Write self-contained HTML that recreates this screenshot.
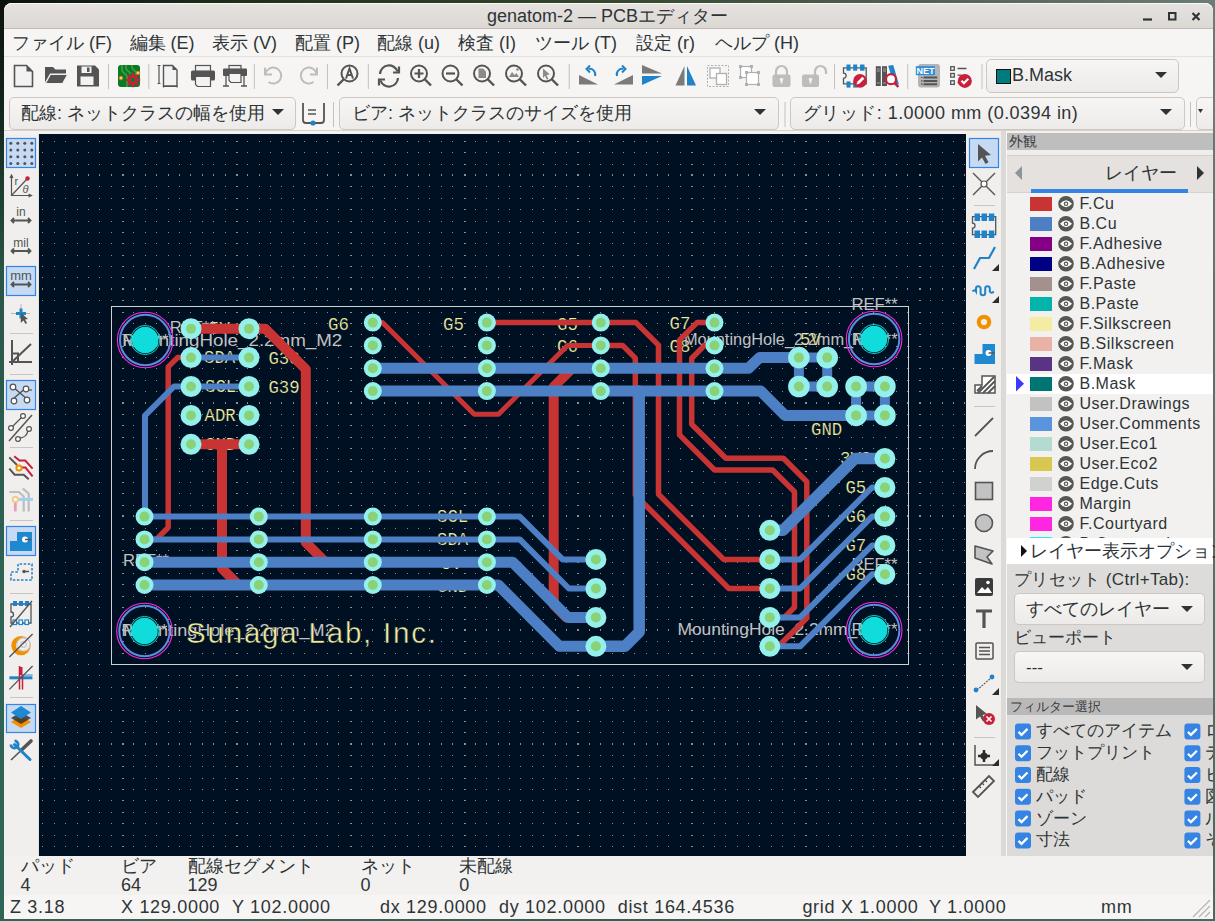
<!DOCTYPE html><html><head><meta charset="utf-8"><style>
html,body{margin:0;padding:0;width:1215px;height:921px;overflow:hidden;background:#1b2a24;}
.t{position:absolute;white-space:nowrap;line-height:1;font-family:'Liberation Sans',sans-serif;}
.r{position:absolute;}
svg.a{position:absolute;left:0;top:0;overflow:visible;}
.cb{position:absolute;border:1px solid #cdc7c2;border-radius:5px;background:linear-gradient(#f7f6f5,#edebe9);box-sizing:border-box;}
</style></head><body>
<div class="r" style="left:0;top:0;width:1215px;height:921px;background:#2e6254;"></div>
<div class="r" style="left:0;top:0;width:1215px;height:6px;background:linear-gradient(90deg,#0c140e 0%,#1c301c 20%,#34482e 50%,#55665a 80%,#6a7d76 100%);"></div>
<div class="r" style="left:0;top:0;width:6px;height:921px;background:linear-gradient(180deg,#0b110c 0%,#13261c 12%,#2a5648 30%,#2e6254 60%,#2f6557 100%);"></div>
<div class="r" style="left:1209px;top:0;width:6px;height:921px;background:linear-gradient(180deg,#6a7d76 0%,#55756c 40%,#3f6e64 100%);"></div>
<div class="r" style="left:0;top:915px;width:1215px;height:6px;background:linear-gradient(90deg,#2f6557 0%,#2e6254 50%,#3f6e64 100%);"></div>
<div class="r" style="left:4px;top:3px;width:1209px;height:916px;background:#f6f5f4;border-radius:8px 8px 0 0;"></div>
<div class="r" style="left:4px;top:3px;width:1209px;height:26px;background:linear-gradient(#e5e2df,#dcd8d4);border-radius:8px 8px 0 0;box-shadow:inset 0 1px 0 #faf9f8;"></div>
<div class="r" style="left:4px;top:28px;width:1209px;height:1px;background:#c2bab2;"></div>
<div class="t" style="left:487px;top:7px;font-size:18px;color:#2e3436;">genatom-2 — PCBエディター</div>
<svg class="a" width="1215" height="40"><g stroke="#2e3436" stroke-width="2.2" fill="none"><path d="M1143 19.5h9"/><rect x="1169" y="13" width="6.5" height="6.5" stroke-width="2"/><path d="M1192.5 13l7 7M1199.5 13l-7 7"/></g></svg>
<div class="r" style="left:4px;top:29px;width:1209px;height:27px;background:#f6f5f4;"></div>
<div class="r" style="left:4px;top:56px;width:1209px;height:1px;background:#e3e0dd;"></div>
<div class="t" style="left:12px;top:34px;font-size:18px;color:#2e3436;">ファイル (F)</div>
<div class="t" style="left:129.5px;top:34px;font-size:18px;color:#2e3436;">編集 (E)</div>
<div class="t" style="left:212px;top:34px;font-size:18px;color:#2e3436;">表示 (V)</div>
<div class="t" style="left:295px;top:34px;font-size:18px;color:#2e3436;">配置 (P)</div>
<div class="t" style="left:377px;top:34px;font-size:18px;color:#2e3436;">配線 (u)</div>
<div class="t" style="left:458px;top:34px;font-size:18px;color:#2e3436;">検査 (I)</div>
<div class="t" style="left:535px;top:34px;font-size:18px;color:#2e3436;">ツール (T)</div>
<div class="t" style="left:636px;top:34px;font-size:18px;color:#2e3436;">設定 (r)</div>
<div class="t" style="left:715px;top:34px;font-size:18px;color:#2e3436;">ヘルプ (H)</div>
<div class="r" style="left:4px;top:130px;width:1209px;height:1px;background:#d9d1c9;"></div>
<svg class="a" width="1215" height="140"><rect x="108.0" y="64" width="1" height="25" fill="#c4c0bc"/><rect x="148.3" y="64" width="1" height="25" fill="#c4c0bc"/><rect x="253.8" y="64" width="1" height="25" fill="#c4c0bc"/><rect x="326.9" y="64" width="1" height="25" fill="#c4c0bc"/><rect x="367.8" y="64" width="1" height="25" fill="#c4c0bc"/><rect x="568.7" y="64" width="1" height="25" fill="#c4c0bc"/><rect x="834.0" y="64" width="1" height="25" fill="#c4c0bc"/><rect x="907.2" y="64" width="1" height="25" fill="#c4c0bc"/><rect x="981.5" y="64" width="1" height="25" fill="#c4c0bc"/><g transform="translate(13,65)"><path d="M1.5 0.5h12l6 6v15h-18z" fill="#f2f2f2" stroke="#545454" stroke-width="1.6"/><path d="M13.5 0.5v6h6z" fill="#545454"/></g><g transform="translate(45,65)"><path d="M0 2h8l2.5 2.5h10.5v4h-16l-5 9z" fill="#545454"/><path d="M5.5 9.5h17l-5 9h-17z" fill="#545454" stroke="#f2f2f2" stroke-width="1"/></g><g transform="translate(77,65)"><path d="M0 0.5h18l4 4v17h-22z" fill="#545454"/><rect x="4.5" y="1.5" width="10" height="6.5" fill="#f2f2f2"/><rect x="10" y="2.5" width="2.5" height="4.5" fill="#545454"/><rect x="3.5" y="11.5" width="13" height="8.5" fill="#f2f2f2"/></g><g transform="translate(118,65)"><rect x="0" y="0" width="22" height="22" rx="3" fill="#0c7a24"/><path d="M4 0v6l5 5v11M8 0v4l5 5M14 0v3l4 4v3" stroke="#3e9e4a" stroke-width="1.6" fill="none"/><circle cx="3" cy="13" r="1.8" fill="#f6c98a" stroke="#e07b00" stroke-width="0.8"/><circle cx="20" cy="8" r="1.8" fill="#f6c98a" stroke="#e07b00" stroke-width="0.8"/><g transform="translate(15,15)"><circle r="4.8" fill="#c8203a"/><path d="M0-7.2v3M0 7.2v-3M-7.2 0h3M7.2 0h-3M-5 -5l2 2M5 5l-2-2M5 -5l-2 2M-5 5l2-2" stroke="#c8203a" stroke-width="2.4"/><circle r="2" fill="#0c7a24"/></g></g><g transform="translate(157.5,65)"><path d="M6 0.5h9l4.5 4.5v16h-13.5z" fill="#f2f2f2" stroke="#545454" stroke-width="1.4"/><path d="M15 0.5v4.5h4.5z" fill="#545454"/><path d="M1.5 0.5v18M0 0.5h3M0 18.5h3M6 21.5h13.5M6 20.5v2M19.5 20.5v2" stroke="#545454" stroke-width="1.2"/></g><g transform="translate(191,65)"><rect x="4.5" y="0.5" width="15" height="6" fill="#f2f2f2" stroke="#545454" stroke-width="1.2"/><rect x="0" y="5.5" width="24" height="10" rx="1.5" fill="#545454"/><path d="M4.5 11.5h15v10h-13l-2-2z" fill="#f2f2f2" stroke="#545454" stroke-width="1.2"/></g><g transform="translate(223,65)"><rect x="6" y="0.5" width="12" height="4" fill="#f2f2f2" stroke="#545454" stroke-width="1.2"/><rect x="0" y="3.5" width="24" height="7.5" rx="1" fill="#545454"/><path d="M6 8.5h12v9h-10l-2-2z" fill="#f2f2f2" stroke="#545454" stroke-width="1.2"/><path d="M3 10v11M21 10v11M0 21h6M18 21h6" stroke="#545454" stroke-width="1.3"/></g><g transform="translate(263.5,65)"><path d="M2 8.5A8 8 0 1 1 5 17" fill="none" stroke="#bdbdbd" stroke-width="2"/><path d="M1.5 2.5v7h7" fill="none" stroke="#bdbdbd" stroke-width="2"/></g><g transform="translate(296.5,65)"><path d="M20 8.5A8 8 0 1 0 17 17" fill="none" stroke="#bdbdbd" stroke-width="2"/><path d="M20.5 2.5v7h-7" fill="none" stroke="#bdbdbd" stroke-width="2"/></g><g transform="translate(337,65)"><circle cx="12.5" cy="8.5" r="8" fill="none" stroke="#545454" stroke-width="2"/><path d="M7 14l-6.5 6.5" stroke="#545454" stroke-width="2.4"/><path d="M9 13.5l3.5-10 3.5 10M10.2 10h4.6" stroke="#545454" stroke-width="2" fill="none"/></g><g transform="translate(378,65)"><path d="M2 9A9 9 0 0 1 19.5 6.5" fill="none" stroke="#545454" stroke-width="2.2"/><path d="M21 1.5v6h-6" fill="none" stroke="#545454" stroke-width="2.2"/><path d="M20 13A9 9 0 0 1 2.5 15.5" fill="none" stroke="#545454" stroke-width="2.2"/><path d="M1 20.5v-6h6" fill="none" stroke="#545454" stroke-width="2.2"/></g><g transform="translate(410,65)"><circle cx="9" cy="8.5" r="8" fill="none" stroke="#545454" stroke-width="2"/><path d="M14.5 14l6.5 6.5" stroke="#545454" stroke-width="2.4"/><path d="M9 4v9M4.5 8.5h9" stroke="#545454" stroke-width="2.2"/></g><g transform="translate(441.5,65)"><circle cx="9" cy="8.5" r="8" fill="none" stroke="#545454" stroke-width="2"/><path d="M14.5 14l6.5 6.5" stroke="#545454" stroke-width="2.4"/><path d="M4.5 8.5h9" stroke="#545454" stroke-width="2.2"/></g><g transform="translate(473,65)"><circle cx="9" cy="8.5" r="8" fill="none" stroke="#545454" stroke-width="2"/><path d="M14.5 14l6.5 6.5" stroke="#545454" stroke-width="2.4"/><path d="M5.5 3.5h4.5l3 3v6.5h-7.5z" fill="#8a8a8a"/></g><g transform="translate(505,65)"><circle cx="9" cy="8.5" r="8" fill="none" stroke="#545454" stroke-width="2"/><path d="M14.5 14l6.5 6.5" stroke="#545454" stroke-width="2.4"/><path d="M4 12l3-5 2.5 3 2-2 2.5 4z" fill="#8a8a8a"/><circle cx="12.5" cy="4.5" r="1.3" fill="#8a8a8a"/></g><g transform="translate(537,65)"><circle cx="9" cy="8.5" r="8" fill="none" stroke="#545454" stroke-width="2"/><path d="M14.5 14l6.5 6.5" stroke="#545454" stroke-width="2.4"/><path d="M6 3.5l7 6-3.5 0.5 2 4-1.6 0.8-2-4-2 2.5z" fill="#8a8a8a"/></g><g transform="translate(579,65)"><path d="M0 10l19 9.5h-19z" fill="#7a7a7a"/><path d="M16 11A5.5 5.5 0 0 0 9.5 4" fill="none" stroke="#1f83c9" stroke-width="2"/><path d="M11 0.5l-3.5 3.5 3.5 3.5" fill="none" stroke="#1f83c9" stroke-width="2"/></g><g transform="translate(611,65)"><path d="M22 10l-19 9.5h19z" fill="#7a7a7a"/><path d="M6 11A5.5 5.5 0 0 1 12.5 4" fill="none" stroke="#1f83c9" stroke-width="2"/><path d="M11 0.5l3.5 3.5-3.5 3.5" fill="none" stroke="#1f83c9" stroke-width="2"/></g><g transform="translate(642,65)"><path d="M0 0l20 8.5h-20z" fill="#7a7a7a"/><path d="M0 11h20l-20 9z" fill="#1f83c9"/></g><g transform="translate(675,65)"><path d="M9.5 1v19.5h-9z" fill="#7a7a7a"/><path d="M12 1v19.5h9z" fill="#1f83c9"/></g><g transform="translate(707,65)"><rect x="0.5" y="0.5" width="21" height="21" fill="none" stroke="#b0b0b0" stroke-width="1" stroke-dasharray="2 1.5"/><rect x="3" y="3" width="10" height="10" fill="#fff" stroke="#b0b0b0" stroke-width="1.3"/><rect x="9.5" y="8.5" width="10" height="11" fill="#fff" stroke="#b0b0b0" stroke-width="1.3"/></g><g transform="translate(739,65)"><rect x="1.5" y="1.5" width="11" height="11" fill="#fff" stroke="#b0b0b0" stroke-width="1.2"/><rect x="7.5" y="7.5" width="12" height="12" fill="#fff" stroke="#b0b0b0" stroke-width="1.2"/><g fill="#b0b0b0"><rect x="0" y="0" width="3" height="3"/><rect x="11" y="0" width="3" height="3"/><rect x="0" y="11" width="3" height="3"/><rect x="6" y="6" width="3" height="3"/><rect x="18" y="6" width="3" height="3"/><rect x="6" y="18" width="3" height="3"/><rect x="18" y="18" width="3" height="3"/></g></g><g transform="translate(771,65)"><path d="M5 10V6.5a5.5 5.5 0 0 1 11 0V10" fill="none" stroke="#bdbdbd" stroke-width="2.2"/><rect x="1.5" y="9.5" width="18" height="12.5" rx="2" fill="#bdbdbd"/><circle cx="10.5" cy="14.5" r="1.8" fill="#f2f2f2"/><rect x="9.6" y="15" width="1.8" height="3.5" fill="#f2f2f2"/></g><g transform="translate(802,65)"><path d="M13 10V6.5a5.5 5.5 0 0 1 11 0V9" fill="none" stroke="#bdbdbd" stroke-width="2.2"/><rect x="0" y="9.5" width="17" height="12.5" rx="2" fill="#bdbdbd"/><circle cx="8.5" cy="14.5" r="1.8" fill="#f2f2f2"/><rect x="7.6" y="15" width="1.8" height="3.5" fill="#f2f2f2"/></g><g transform="translate(844,65)"><path d="M-0.5 2.8h22.7v16h-22.7v-5.5a2.6 2.6 0 0 0 0-5.2z" fill="none" stroke="#545454" stroke-width="1.3"/><g fill="#1f83c9"><rect x="2.5" y="-0.5" width="4" height="6.2"/><rect x="9.2" y="-0.5" width="4" height="6.2"/><rect x="16" y="-0.5" width="4.5" height="6.2"/><rect x="2.5" y="16.4" width="4" height="6.2"/><rect x="9.2" y="16.4" width="4.5" height="6.2"/></g><circle cx="16" cy="15.9" r="6.8" fill="#c8203a"/><path d="M12.5 19.5l.8-2.8 5-5 2 2-5 5z" fill="#fff"/></g><g transform="translate(876,65)"><rect x="-0.2" y="1.2" width="5" height="19.8" fill="#545454"/><rect x="6" y="1.2" width="5" height="19.8" fill="#545454"/><path d="M0.8 4h3M0.8 6h3M7 4h3M7 6h3M0.8 18h3M7 18h3" stroke="#bbb" stroke-width="0.8"/><path d="M12.2 0.8l5-0.9 5.7 19.3-4.6 1z" fill="#1f83c9"/><circle cx="15" cy="14.2" r="5" fill="#fff" stroke="#c8203a" stroke-width="2.2"/><path d="M18.8 18l3.5 4" stroke="#c8203a" stroke-width="2.6"/></g><g transform="translate(917,65)"><rect x="1" y="-1" width="22" height="23.6" rx="3" fill="#b4b4b4"/><rect x="-1.2" y="1.2" width="19.2" height="9" fill="#2f8fdb"/><text x="8.4" y="9.2" font-family="Liberation Sans" font-weight="bold" font-size="9" fill="#fff" text-anchor="middle">NET</text><path d="M6.5 12.5h13.7M6.5 15.9h13.7M6.5 19.2h13.7" stroke="#545454" stroke-width="2"/><path d="M4 12.5h1.5M4 15.9h1.5M4 19.2h1.5" stroke="#545454" stroke-width="1.2"/></g><g transform="translate(950,65)"><g fill="none" stroke="#545454" stroke-width="1.3"><rect x="0.7" y="1.7" width="3.6" height="3.6"/><rect x="0.7" y="8.5" width="3.6" height="3.6"/><rect x="0.7" y="15.8" width="3.6" height="3.6"/><path d="M7.5 3.5h9M7.5 10.2h4M7.5 17.5h2"/></g><circle cx="14.8" cy="15.9" r="7" fill="#c8203a"/><path d="M11.5 15.8l2.4 2.4 4.4-4.4" stroke="#fff" stroke-width="2.2" fill="none"/></g></svg>
<div class="cb" style="left:986px;top:59px;width:193px;height:34px;"></div>
<div class="r" style="left:996px;top:69px;width:15px;height:15px;background:#007c7c;border:1.5px solid #111;box-sizing:border-box;"></div>
<div class="t" style="left:1012px;top:66px;font-size:18px;color:#2e3436;">B.Mask</div>
<svg class="a" width="1215" height="140"><path d="M1155 72h12l-6 6z" fill="#2e3436"/></svg>
<div class="cb" style="left:9px;top:97px;width:287px;height:33px;"></div>
<div class="t" style="left:21px;top:104px;font-size:18px;color:#2e3436;">配線: ネットクラスの幅を使用</div>
<div class="cb" style="left:339px;top:97px;width:440px;height:33px;"></div>
<div class="t" style="left:352px;top:104px;font-size:18px;color:#2e3436;">ビア: ネットクラスのサイズを使用</div>
<div class="cb" style="left:790px;top:97px;width:395px;height:33px;"></div>
<div class="t" style="left:803px;top:104px;font-size:18px;color:#2e3436;letter-spacing:0.45px;">グリッド: 1.0000 mm (0.0394 in)</div>
<div class="cb" style="left:1196px;top:97px;width:30px;height:33px;"></div>
<div class="r" style="left:1213px;top:90px;width:2px;height:45px;background:#6a7c74;"></div>
<svg class="a" width="1215" height="140"><g fill="#2e3436"><path d="M272 109h12l-6 6z"/><path d="M754 109h12l-6 6z"/><path d="M1160 109h12l-6 6z"/><path d="M1198 109h5l-2.5 4z"/></g><rect x="333" y="102" width="1" height="25" fill="#c4c0bc"/><rect x="784.5" y="102" width="1" height="25" fill="#c4c0bc"/><rect x="1190" y="102" width="1" height="25" fill="#c4c0bc"/><path d="M303 103v17a3 3 0 0 0 3 3h15a3 3 0 0 0 3-3v-17" fill="none" stroke="#545454" stroke-width="1.8"/><path d="M308 110h8M308 114h8" stroke="#545454" stroke-width="1.3"/><circle cx="313" cy="123" r="2.6" fill="#1f83c9"/></svg>
<svg class="a" width="1215" height="921"><defs><clipPath id="cc"><rect x="39" y="134" width="927" height="722"/></clipPath></defs><g clip-path="url(#cc)"><rect x="39" y="134" width="927" height="722" fill="#001023"/><path d="M42 141h1v1h-1zM54 141h1v1h-1zM65 141h1v1h-1zM77 141h1v1h-1zM88 141h1v1h-1zM99 141h1v1h-1zM111 141h1v1h-1zM122 141h2v1h-2zM133 141h1v1h-1zM145 141h1v1h-1zM156 141h1v1h-1zM168 141h1v1h-1zM179 141h1v1h-1zM190 141h1v1h-1zM202 141h1v1h-1zM213 141h1v1h-1zM225 141h1v1h-1zM236 141h2v1h-2zM247 141h1v1h-1zM259 141h1v1h-1zM270 141h1v1h-1zM281 141h1v1h-1zM293 141h1v1h-1zM304 141h1v1h-1zM316 141h1v1h-1zM327 141h1v1h-1zM338 141h1v1h-1zM350 141h2v1h-2zM361 141h1v1h-1zM372 141h1v1h-1zM384 141h1v1h-1zM395 141h1v1h-1zM407 141h1v1h-1zM418 141h1v1h-1zM429 141h1v1h-1zM441 141h1v1h-1zM452 141h1v1h-1zM464 141h2v1h-2zM475 141h1v1h-1zM486 141h1v1h-1zM498 141h1v1h-1zM509 141h1v1h-1zM520 141h1v1h-1zM532 141h1v1h-1zM543 141h1v1h-1zM555 141h1v1h-1zM566 141h1v1h-1zM577 141h2v1h-2zM589 141h1v1h-1zM600 141h1v1h-1zM612 141h1v1h-1zM623 141h1v1h-1zM634 141h1v1h-1zM646 141h1v1h-1zM657 141h1v1h-1zM668 141h1v1h-1zM680 141h1v1h-1zM691 141h2v1h-2zM703 141h1v1h-1zM714 141h1v1h-1zM725 141h1v1h-1zM737 141h1v1h-1zM748 141h1v1h-1zM759 141h1v1h-1zM771 141h1v1h-1zM782 141h1v1h-1zM794 141h1v1h-1zM805 141h2v1h-2zM816 141h1v1h-1zM828 141h1v1h-1zM839 141h1v1h-1zM851 141h1v1h-1zM862 141h1v1h-1zM873 141h1v1h-1zM885 141h1v1h-1zM896 141h1v1h-1zM907 141h1v1h-1zM919 141h2v1h-2zM930 141h1v1h-1zM942 141h1v1h-1zM953 141h1v1h-1zM964 141h1v1h-1zM42 152h1v1h-1zM54 152h1v1h-1zM65 152h1v1h-1zM77 152h1v1h-1zM88 152h1v1h-1zM99 152h1v1h-1zM111 152h1v1h-1zM122 152h2v1h-2zM133 152h1v1h-1zM145 152h1v1h-1zM156 152h1v1h-1zM168 152h1v1h-1zM179 152h1v1h-1zM190 152h1v1h-1zM202 152h1v1h-1zM213 152h1v1h-1zM225 152h1v1h-1zM236 152h2v1h-2zM247 152h1v1h-1zM259 152h1v1h-1zM270 152h1v1h-1zM281 152h1v1h-1zM293 152h1v1h-1zM304 152h1v1h-1zM316 152h1v1h-1zM327 152h1v1h-1zM338 152h1v1h-1zM350 152h2v1h-2zM361 152h1v1h-1zM372 152h1v1h-1zM384 152h1v1h-1zM395 152h1v1h-1zM407 152h1v1h-1zM418 152h1v1h-1zM429 152h1v1h-1zM441 152h1v1h-1zM452 152h1v1h-1zM464 152h2v1h-2zM475 152h1v1h-1zM486 152h1v1h-1zM498 152h1v1h-1zM509 152h1v1h-1zM520 152h1v1h-1zM532 152h1v1h-1zM543 152h1v1h-1zM555 152h1v1h-1zM566 152h1v1h-1zM577 152h2v1h-2zM589 152h1v1h-1zM600 152h1v1h-1zM612 152h1v1h-1zM623 152h1v1h-1zM634 152h1v1h-1zM646 152h1v1h-1zM657 152h1v1h-1zM668 152h1v1h-1zM680 152h1v1h-1zM691 152h2v1h-2zM703 152h1v1h-1zM714 152h1v1h-1zM725 152h1v1h-1zM737 152h1v1h-1zM748 152h1v1h-1zM759 152h1v1h-1zM771 152h1v1h-1zM782 152h1v1h-1zM794 152h1v1h-1zM805 152h2v1h-2zM816 152h1v1h-1zM828 152h1v1h-1zM839 152h1v1h-1zM851 152h1v1h-1zM862 152h1v1h-1zM873 152h1v1h-1zM885 152h1v1h-1zM896 152h1v1h-1zM907 152h1v1h-1zM919 152h2v1h-2zM930 152h1v1h-1zM942 152h1v1h-1zM953 152h1v1h-1zM964 152h1v1h-1zM42 164h1v1h-1zM54 164h1v1h-1zM65 164h1v1h-1zM77 164h1v1h-1zM88 164h1v1h-1zM99 164h1v1h-1zM111 164h1v1h-1zM122 164h2v1h-2zM133 164h1v1h-1zM145 164h1v1h-1zM156 164h1v1h-1zM168 164h1v1h-1zM179 164h1v1h-1zM190 164h1v1h-1zM202 164h1v1h-1zM213 164h1v1h-1zM225 164h1v1h-1zM236 164h2v1h-2zM247 164h1v1h-1zM259 164h1v1h-1zM270 164h1v1h-1zM281 164h1v1h-1zM293 164h1v1h-1zM304 164h1v1h-1zM316 164h1v1h-1zM327 164h1v1h-1zM338 164h1v1h-1zM350 164h2v1h-2zM361 164h1v1h-1zM372 164h1v1h-1zM384 164h1v1h-1zM395 164h1v1h-1zM407 164h1v1h-1zM418 164h1v1h-1zM429 164h1v1h-1zM441 164h1v1h-1zM452 164h1v1h-1zM464 164h2v1h-2zM475 164h1v1h-1zM486 164h1v1h-1zM498 164h1v1h-1zM509 164h1v1h-1zM520 164h1v1h-1zM532 164h1v1h-1zM543 164h1v1h-1zM555 164h1v1h-1zM566 164h1v1h-1zM577 164h2v1h-2zM589 164h1v1h-1zM600 164h1v1h-1zM612 164h1v1h-1zM623 164h1v1h-1zM634 164h1v1h-1zM646 164h1v1h-1zM657 164h1v1h-1zM668 164h1v1h-1zM680 164h1v1h-1zM691 164h2v1h-2zM703 164h1v1h-1zM714 164h1v1h-1zM725 164h1v1h-1zM737 164h1v1h-1zM748 164h1v1h-1zM759 164h1v1h-1zM771 164h1v1h-1zM782 164h1v1h-1zM794 164h1v1h-1zM805 164h2v1h-2zM816 164h1v1h-1zM828 164h1v1h-1zM839 164h1v1h-1zM851 164h1v1h-1zM862 164h1v1h-1zM873 164h1v1h-1zM885 164h1v1h-1zM896 164h1v1h-1zM907 164h1v1h-1zM919 164h2v1h-2zM930 164h1v1h-1zM942 164h1v1h-1zM953 164h1v1h-1zM964 164h1v1h-1zM42 174h1v2h-1zM54 174h1v2h-1zM65 174h1v2h-1zM77 174h1v2h-1zM88 174h1v2h-1zM99 174h1v2h-1zM111 174h1v2h-1zM122 174h2v2h-2zM133 174h1v2h-1zM145 174h1v2h-1zM156 174h1v2h-1zM168 174h1v2h-1zM179 174h1v2h-1zM190 174h1v2h-1zM202 174h1v2h-1zM213 174h1v2h-1zM225 174h1v2h-1zM236 174h2v2h-2zM247 174h1v2h-1zM259 174h1v2h-1zM270 174h1v2h-1zM281 174h1v2h-1zM293 174h1v2h-1zM304 174h1v2h-1zM316 174h1v2h-1zM327 174h1v2h-1zM338 174h1v2h-1zM350 174h2v2h-2zM361 174h1v2h-1zM372 174h1v2h-1zM384 174h1v2h-1zM395 174h1v2h-1zM407 174h1v2h-1zM418 174h1v2h-1zM429 174h1v2h-1zM441 174h1v2h-1zM452 174h1v2h-1zM464 174h2v2h-2zM475 174h1v2h-1zM486 174h1v2h-1zM498 174h1v2h-1zM509 174h1v2h-1zM520 174h1v2h-1zM532 174h1v2h-1zM543 174h1v2h-1zM555 174h1v2h-1zM566 174h1v2h-1zM577 174h2v2h-2zM589 174h1v2h-1zM600 174h1v2h-1zM612 174h1v2h-1zM623 174h1v2h-1zM634 174h1v2h-1zM646 174h1v2h-1zM657 174h1v2h-1zM668 174h1v2h-1zM680 174h1v2h-1zM691 174h2v2h-2zM703 174h1v2h-1zM714 174h1v2h-1zM725 174h1v2h-1zM737 174h1v2h-1zM748 174h1v2h-1zM759 174h1v2h-1zM771 174h1v2h-1zM782 174h1v2h-1zM794 174h1v2h-1zM805 174h2v2h-2zM816 174h1v2h-1zM828 174h1v2h-1zM839 174h1v2h-1zM851 174h1v2h-1zM862 174h1v2h-1zM873 174h1v2h-1zM885 174h1v2h-1zM896 174h1v2h-1zM907 174h1v2h-1zM919 174h2v2h-2zM930 174h1v2h-1zM942 174h1v2h-1zM953 174h1v2h-1zM964 174h1v2h-1zM42 186h1v1h-1zM54 186h1v1h-1zM65 186h1v1h-1zM77 186h1v1h-1zM88 186h1v1h-1zM99 186h1v1h-1zM111 186h1v1h-1zM122 186h2v1h-2zM133 186h1v1h-1zM145 186h1v1h-1zM156 186h1v1h-1zM168 186h1v1h-1zM179 186h1v1h-1zM190 186h1v1h-1zM202 186h1v1h-1zM213 186h1v1h-1zM225 186h1v1h-1zM236 186h2v1h-2zM247 186h1v1h-1zM259 186h1v1h-1zM270 186h1v1h-1zM281 186h1v1h-1zM293 186h1v1h-1zM304 186h1v1h-1zM316 186h1v1h-1zM327 186h1v1h-1zM338 186h1v1h-1zM350 186h2v1h-2zM361 186h1v1h-1zM372 186h1v1h-1zM384 186h1v1h-1zM395 186h1v1h-1zM407 186h1v1h-1zM418 186h1v1h-1zM429 186h1v1h-1zM441 186h1v1h-1zM452 186h1v1h-1zM464 186h2v1h-2zM475 186h1v1h-1zM486 186h1v1h-1zM498 186h1v1h-1zM509 186h1v1h-1zM520 186h1v1h-1zM532 186h1v1h-1zM543 186h1v1h-1zM555 186h1v1h-1zM566 186h1v1h-1zM577 186h2v1h-2zM589 186h1v1h-1zM600 186h1v1h-1zM612 186h1v1h-1zM623 186h1v1h-1zM634 186h1v1h-1zM646 186h1v1h-1zM657 186h1v1h-1zM668 186h1v1h-1zM680 186h1v1h-1zM691 186h2v1h-2zM703 186h1v1h-1zM714 186h1v1h-1zM725 186h1v1h-1zM737 186h1v1h-1zM748 186h1v1h-1zM759 186h1v1h-1zM771 186h1v1h-1zM782 186h1v1h-1zM794 186h1v1h-1zM805 186h2v1h-2zM816 186h1v1h-1zM828 186h1v1h-1zM839 186h1v1h-1zM851 186h1v1h-1zM862 186h1v1h-1zM873 186h1v1h-1zM885 186h1v1h-1zM896 186h1v1h-1zM907 186h1v1h-1zM919 186h2v1h-2zM930 186h1v1h-1zM942 186h1v1h-1zM953 186h1v1h-1zM964 186h1v1h-1zM42 198h1v1h-1zM54 198h1v1h-1zM65 198h1v1h-1zM77 198h1v1h-1zM88 198h1v1h-1zM99 198h1v1h-1zM111 198h1v1h-1zM122 198h2v1h-2zM133 198h1v1h-1zM145 198h1v1h-1zM156 198h1v1h-1zM168 198h1v1h-1zM179 198h1v1h-1zM190 198h1v1h-1zM202 198h1v1h-1zM213 198h1v1h-1zM225 198h1v1h-1zM236 198h2v1h-2zM247 198h1v1h-1zM259 198h1v1h-1zM270 198h1v1h-1zM281 198h1v1h-1zM293 198h1v1h-1zM304 198h1v1h-1zM316 198h1v1h-1zM327 198h1v1h-1zM338 198h1v1h-1zM350 198h2v1h-2zM361 198h1v1h-1zM372 198h1v1h-1zM384 198h1v1h-1zM395 198h1v1h-1zM407 198h1v1h-1zM418 198h1v1h-1zM429 198h1v1h-1zM441 198h1v1h-1zM452 198h1v1h-1zM464 198h2v1h-2zM475 198h1v1h-1zM486 198h1v1h-1zM498 198h1v1h-1zM509 198h1v1h-1zM520 198h1v1h-1zM532 198h1v1h-1zM543 198h1v1h-1zM555 198h1v1h-1zM566 198h1v1h-1zM577 198h2v1h-2zM589 198h1v1h-1zM600 198h1v1h-1zM612 198h1v1h-1zM623 198h1v1h-1zM634 198h1v1h-1zM646 198h1v1h-1zM657 198h1v1h-1zM668 198h1v1h-1zM680 198h1v1h-1zM691 198h2v1h-2zM703 198h1v1h-1zM714 198h1v1h-1zM725 198h1v1h-1zM737 198h1v1h-1zM748 198h1v1h-1zM759 198h1v1h-1zM771 198h1v1h-1zM782 198h1v1h-1zM794 198h1v1h-1zM805 198h2v1h-2zM816 198h1v1h-1zM828 198h1v1h-1zM839 198h1v1h-1zM851 198h1v1h-1zM862 198h1v1h-1zM873 198h1v1h-1zM885 198h1v1h-1zM896 198h1v1h-1zM907 198h1v1h-1zM919 198h2v1h-2zM930 198h1v1h-1zM942 198h1v1h-1zM953 198h1v1h-1zM964 198h1v1h-1zM42 209h1v1h-1zM54 209h1v1h-1zM65 209h1v1h-1zM77 209h1v1h-1zM88 209h1v1h-1zM99 209h1v1h-1zM111 209h1v1h-1zM122 209h2v1h-2zM133 209h1v1h-1zM145 209h1v1h-1zM156 209h1v1h-1zM168 209h1v1h-1zM179 209h1v1h-1zM190 209h1v1h-1zM202 209h1v1h-1zM213 209h1v1h-1zM225 209h1v1h-1zM236 209h2v1h-2zM247 209h1v1h-1zM259 209h1v1h-1zM270 209h1v1h-1zM281 209h1v1h-1zM293 209h1v1h-1zM304 209h1v1h-1zM316 209h1v1h-1zM327 209h1v1h-1zM338 209h1v1h-1zM350 209h2v1h-2zM361 209h1v1h-1zM372 209h1v1h-1zM384 209h1v1h-1zM395 209h1v1h-1zM407 209h1v1h-1zM418 209h1v1h-1zM429 209h1v1h-1zM441 209h1v1h-1zM452 209h1v1h-1zM464 209h2v1h-2zM475 209h1v1h-1zM486 209h1v1h-1zM498 209h1v1h-1zM509 209h1v1h-1zM520 209h1v1h-1zM532 209h1v1h-1zM543 209h1v1h-1zM555 209h1v1h-1zM566 209h1v1h-1zM577 209h2v1h-2zM589 209h1v1h-1zM600 209h1v1h-1zM612 209h1v1h-1zM623 209h1v1h-1zM634 209h1v1h-1zM646 209h1v1h-1zM657 209h1v1h-1zM668 209h1v1h-1zM680 209h1v1h-1zM691 209h2v1h-2zM703 209h1v1h-1zM714 209h1v1h-1zM725 209h1v1h-1zM737 209h1v1h-1zM748 209h1v1h-1zM759 209h1v1h-1zM771 209h1v1h-1zM782 209h1v1h-1zM794 209h1v1h-1zM805 209h2v1h-2zM816 209h1v1h-1zM828 209h1v1h-1zM839 209h1v1h-1zM851 209h1v1h-1zM862 209h1v1h-1zM873 209h1v1h-1zM885 209h1v1h-1zM896 209h1v1h-1zM907 209h1v1h-1zM919 209h2v1h-2zM930 209h1v1h-1zM942 209h1v1h-1zM953 209h1v1h-1zM964 209h1v1h-1zM42 221h1v1h-1zM54 221h1v1h-1zM65 221h1v1h-1zM77 221h1v1h-1zM88 221h1v1h-1zM99 221h1v1h-1zM111 221h1v1h-1zM122 221h2v1h-2zM133 221h1v1h-1zM145 221h1v1h-1zM156 221h1v1h-1zM168 221h1v1h-1zM179 221h1v1h-1zM190 221h1v1h-1zM202 221h1v1h-1zM213 221h1v1h-1zM225 221h1v1h-1zM236 221h2v1h-2zM247 221h1v1h-1zM259 221h1v1h-1zM270 221h1v1h-1zM281 221h1v1h-1zM293 221h1v1h-1zM304 221h1v1h-1zM316 221h1v1h-1zM327 221h1v1h-1zM338 221h1v1h-1zM350 221h2v1h-2zM361 221h1v1h-1zM372 221h1v1h-1zM384 221h1v1h-1zM395 221h1v1h-1zM407 221h1v1h-1zM418 221h1v1h-1zM429 221h1v1h-1zM441 221h1v1h-1zM452 221h1v1h-1zM464 221h2v1h-2zM475 221h1v1h-1zM486 221h1v1h-1zM498 221h1v1h-1zM509 221h1v1h-1zM520 221h1v1h-1zM532 221h1v1h-1zM543 221h1v1h-1zM555 221h1v1h-1zM566 221h1v1h-1zM577 221h2v1h-2zM589 221h1v1h-1zM600 221h1v1h-1zM612 221h1v1h-1zM623 221h1v1h-1zM634 221h1v1h-1zM646 221h1v1h-1zM657 221h1v1h-1zM668 221h1v1h-1zM680 221h1v1h-1zM691 221h2v1h-2zM703 221h1v1h-1zM714 221h1v1h-1zM725 221h1v1h-1zM737 221h1v1h-1zM748 221h1v1h-1zM759 221h1v1h-1zM771 221h1v1h-1zM782 221h1v1h-1zM794 221h1v1h-1zM805 221h2v1h-2zM816 221h1v1h-1zM828 221h1v1h-1zM839 221h1v1h-1zM851 221h1v1h-1zM862 221h1v1h-1zM873 221h1v1h-1zM885 221h1v1h-1zM896 221h1v1h-1zM907 221h1v1h-1zM919 221h2v1h-2zM930 221h1v1h-1zM942 221h1v1h-1zM953 221h1v1h-1zM964 221h1v1h-1zM42 232h1v1h-1zM54 232h1v1h-1zM65 232h1v1h-1zM77 232h1v1h-1zM88 232h1v1h-1zM99 232h1v1h-1zM111 232h1v1h-1zM122 232h2v1h-2zM133 232h1v1h-1zM145 232h1v1h-1zM156 232h1v1h-1zM168 232h1v1h-1zM179 232h1v1h-1zM190 232h1v1h-1zM202 232h1v1h-1zM213 232h1v1h-1zM225 232h1v1h-1zM236 232h2v1h-2zM247 232h1v1h-1zM259 232h1v1h-1zM270 232h1v1h-1zM281 232h1v1h-1zM293 232h1v1h-1zM304 232h1v1h-1zM316 232h1v1h-1zM327 232h1v1h-1zM338 232h1v1h-1zM350 232h2v1h-2zM361 232h1v1h-1zM372 232h1v1h-1zM384 232h1v1h-1zM395 232h1v1h-1zM407 232h1v1h-1zM418 232h1v1h-1zM429 232h1v1h-1zM441 232h1v1h-1zM452 232h1v1h-1zM464 232h2v1h-2zM475 232h1v1h-1zM486 232h1v1h-1zM498 232h1v1h-1zM509 232h1v1h-1zM520 232h1v1h-1zM532 232h1v1h-1zM543 232h1v1h-1zM555 232h1v1h-1zM566 232h1v1h-1zM577 232h2v1h-2zM589 232h1v1h-1zM600 232h1v1h-1zM612 232h1v1h-1zM623 232h1v1h-1zM634 232h1v1h-1zM646 232h1v1h-1zM657 232h1v1h-1zM668 232h1v1h-1zM680 232h1v1h-1zM691 232h2v1h-2zM703 232h1v1h-1zM714 232h1v1h-1zM725 232h1v1h-1zM737 232h1v1h-1zM748 232h1v1h-1zM759 232h1v1h-1zM771 232h1v1h-1zM782 232h1v1h-1zM794 232h1v1h-1zM805 232h2v1h-2zM816 232h1v1h-1zM828 232h1v1h-1zM839 232h1v1h-1zM851 232h1v1h-1zM862 232h1v1h-1zM873 232h1v1h-1zM885 232h1v1h-1zM896 232h1v1h-1zM907 232h1v1h-1zM919 232h2v1h-2zM930 232h1v1h-1zM942 232h1v1h-1zM953 232h1v1h-1zM964 232h1v1h-1zM42 243h1v1h-1zM54 243h1v1h-1zM65 243h1v1h-1zM77 243h1v1h-1zM88 243h1v1h-1zM99 243h1v1h-1zM111 243h1v1h-1zM122 243h2v1h-2zM133 243h1v1h-1zM145 243h1v1h-1zM156 243h1v1h-1zM168 243h1v1h-1zM179 243h1v1h-1zM190 243h1v1h-1zM202 243h1v1h-1zM213 243h1v1h-1zM225 243h1v1h-1zM236 243h2v1h-2zM247 243h1v1h-1zM259 243h1v1h-1zM270 243h1v1h-1zM281 243h1v1h-1zM293 243h1v1h-1zM304 243h1v1h-1zM316 243h1v1h-1zM327 243h1v1h-1zM338 243h1v1h-1zM350 243h2v1h-2zM361 243h1v1h-1zM372 243h1v1h-1zM384 243h1v1h-1zM395 243h1v1h-1zM407 243h1v1h-1zM418 243h1v1h-1zM429 243h1v1h-1zM441 243h1v1h-1zM452 243h1v1h-1zM464 243h2v1h-2zM475 243h1v1h-1zM486 243h1v1h-1zM498 243h1v1h-1zM509 243h1v1h-1zM520 243h1v1h-1zM532 243h1v1h-1zM543 243h1v1h-1zM555 243h1v1h-1zM566 243h1v1h-1zM577 243h2v1h-2zM589 243h1v1h-1zM600 243h1v1h-1zM612 243h1v1h-1zM623 243h1v1h-1zM634 243h1v1h-1zM646 243h1v1h-1zM657 243h1v1h-1zM668 243h1v1h-1zM680 243h1v1h-1zM691 243h2v1h-2zM703 243h1v1h-1zM714 243h1v1h-1zM725 243h1v1h-1zM737 243h1v1h-1zM748 243h1v1h-1zM759 243h1v1h-1zM771 243h1v1h-1zM782 243h1v1h-1zM794 243h1v1h-1zM805 243h2v1h-2zM816 243h1v1h-1zM828 243h1v1h-1zM839 243h1v1h-1zM851 243h1v1h-1zM862 243h1v1h-1zM873 243h1v1h-1zM885 243h1v1h-1zM896 243h1v1h-1zM907 243h1v1h-1zM919 243h2v1h-2zM930 243h1v1h-1zM942 243h1v1h-1zM953 243h1v1h-1zM964 243h1v1h-1zM42 255h1v1h-1zM54 255h1v1h-1zM65 255h1v1h-1zM77 255h1v1h-1zM88 255h1v1h-1zM99 255h1v1h-1zM111 255h1v1h-1zM122 255h2v1h-2zM133 255h1v1h-1zM145 255h1v1h-1zM156 255h1v1h-1zM168 255h1v1h-1zM179 255h1v1h-1zM190 255h1v1h-1zM202 255h1v1h-1zM213 255h1v1h-1zM225 255h1v1h-1zM236 255h2v1h-2zM247 255h1v1h-1zM259 255h1v1h-1zM270 255h1v1h-1zM281 255h1v1h-1zM293 255h1v1h-1zM304 255h1v1h-1zM316 255h1v1h-1zM327 255h1v1h-1zM338 255h1v1h-1zM350 255h2v1h-2zM361 255h1v1h-1zM372 255h1v1h-1zM384 255h1v1h-1zM395 255h1v1h-1zM407 255h1v1h-1zM418 255h1v1h-1zM429 255h1v1h-1zM441 255h1v1h-1zM452 255h1v1h-1zM464 255h2v1h-2zM475 255h1v1h-1zM486 255h1v1h-1zM498 255h1v1h-1zM509 255h1v1h-1zM520 255h1v1h-1zM532 255h1v1h-1zM543 255h1v1h-1zM555 255h1v1h-1zM566 255h1v1h-1zM577 255h2v1h-2zM589 255h1v1h-1zM600 255h1v1h-1zM612 255h1v1h-1zM623 255h1v1h-1zM634 255h1v1h-1zM646 255h1v1h-1zM657 255h1v1h-1zM668 255h1v1h-1zM680 255h1v1h-1zM691 255h2v1h-2zM703 255h1v1h-1zM714 255h1v1h-1zM725 255h1v1h-1zM737 255h1v1h-1zM748 255h1v1h-1zM759 255h1v1h-1zM771 255h1v1h-1zM782 255h1v1h-1zM794 255h1v1h-1zM805 255h2v1h-2zM816 255h1v1h-1zM828 255h1v1h-1zM839 255h1v1h-1zM851 255h1v1h-1zM862 255h1v1h-1zM873 255h1v1h-1zM885 255h1v1h-1zM896 255h1v1h-1zM907 255h1v1h-1zM919 255h2v1h-2zM930 255h1v1h-1zM942 255h1v1h-1zM953 255h1v1h-1zM964 255h1v1h-1zM42 266h1v1h-1zM54 266h1v1h-1zM65 266h1v1h-1zM77 266h1v1h-1zM88 266h1v1h-1zM99 266h1v1h-1zM111 266h1v1h-1zM122 266h2v1h-2zM133 266h1v1h-1zM145 266h1v1h-1zM156 266h1v1h-1zM168 266h1v1h-1zM179 266h1v1h-1zM190 266h1v1h-1zM202 266h1v1h-1zM213 266h1v1h-1zM225 266h1v1h-1zM236 266h2v1h-2zM247 266h1v1h-1zM259 266h1v1h-1zM270 266h1v1h-1zM281 266h1v1h-1zM293 266h1v1h-1zM304 266h1v1h-1zM316 266h1v1h-1zM327 266h1v1h-1zM338 266h1v1h-1zM350 266h2v1h-2zM361 266h1v1h-1zM372 266h1v1h-1zM384 266h1v1h-1zM395 266h1v1h-1zM407 266h1v1h-1zM418 266h1v1h-1zM429 266h1v1h-1zM441 266h1v1h-1zM452 266h1v1h-1zM464 266h2v1h-2zM475 266h1v1h-1zM486 266h1v1h-1zM498 266h1v1h-1zM509 266h1v1h-1zM520 266h1v1h-1zM532 266h1v1h-1zM543 266h1v1h-1zM555 266h1v1h-1zM566 266h1v1h-1zM577 266h2v1h-2zM589 266h1v1h-1zM600 266h1v1h-1zM612 266h1v1h-1zM623 266h1v1h-1zM634 266h1v1h-1zM646 266h1v1h-1zM657 266h1v1h-1zM668 266h1v1h-1zM680 266h1v1h-1zM691 266h2v1h-2zM703 266h1v1h-1zM714 266h1v1h-1zM725 266h1v1h-1zM737 266h1v1h-1zM748 266h1v1h-1zM759 266h1v1h-1zM771 266h1v1h-1zM782 266h1v1h-1zM794 266h1v1h-1zM805 266h2v1h-2zM816 266h1v1h-1zM828 266h1v1h-1zM839 266h1v1h-1zM851 266h1v1h-1zM862 266h1v1h-1zM873 266h1v1h-1zM885 266h1v1h-1zM896 266h1v1h-1zM907 266h1v1h-1zM919 266h2v1h-2zM930 266h1v1h-1zM942 266h1v1h-1zM953 266h1v1h-1zM964 266h1v1h-1zM42 277h1v1h-1zM54 277h1v1h-1zM65 277h1v1h-1zM77 277h1v1h-1zM88 277h1v1h-1zM99 277h1v1h-1zM111 277h1v1h-1zM122 277h2v1h-2zM133 277h1v1h-1zM145 277h1v1h-1zM156 277h1v1h-1zM168 277h1v1h-1zM179 277h1v1h-1zM190 277h1v1h-1zM202 277h1v1h-1zM213 277h1v1h-1zM225 277h1v1h-1zM236 277h2v1h-2zM247 277h1v1h-1zM259 277h1v1h-1zM270 277h1v1h-1zM281 277h1v1h-1zM293 277h1v1h-1zM304 277h1v1h-1zM316 277h1v1h-1zM327 277h1v1h-1zM338 277h1v1h-1zM350 277h2v1h-2zM361 277h1v1h-1zM372 277h1v1h-1zM384 277h1v1h-1zM395 277h1v1h-1zM407 277h1v1h-1zM418 277h1v1h-1zM429 277h1v1h-1zM441 277h1v1h-1zM452 277h1v1h-1zM464 277h2v1h-2zM475 277h1v1h-1zM486 277h1v1h-1zM498 277h1v1h-1zM509 277h1v1h-1zM520 277h1v1h-1zM532 277h1v1h-1zM543 277h1v1h-1zM555 277h1v1h-1zM566 277h1v1h-1zM577 277h2v1h-2zM589 277h1v1h-1zM600 277h1v1h-1zM612 277h1v1h-1zM623 277h1v1h-1zM634 277h1v1h-1zM646 277h1v1h-1zM657 277h1v1h-1zM668 277h1v1h-1zM680 277h1v1h-1zM691 277h2v1h-2zM703 277h1v1h-1zM714 277h1v1h-1zM725 277h1v1h-1zM737 277h1v1h-1zM748 277h1v1h-1zM759 277h1v1h-1zM771 277h1v1h-1zM782 277h1v1h-1zM794 277h1v1h-1zM805 277h2v1h-2zM816 277h1v1h-1zM828 277h1v1h-1zM839 277h1v1h-1zM851 277h1v1h-1zM862 277h1v1h-1zM873 277h1v1h-1zM885 277h1v1h-1zM896 277h1v1h-1zM907 277h1v1h-1zM919 277h2v1h-2zM930 277h1v1h-1zM942 277h1v1h-1zM953 277h1v1h-1zM964 277h1v1h-1zM42 288h1v2h-1zM54 288h1v2h-1zM65 288h1v2h-1zM77 288h1v2h-1zM88 288h1v2h-1zM99 288h1v2h-1zM111 288h1v2h-1zM122 288h2v2h-2zM133 288h1v2h-1zM145 288h1v2h-1zM156 288h1v2h-1zM168 288h1v2h-1zM179 288h1v2h-1zM190 288h1v2h-1zM202 288h1v2h-1zM213 288h1v2h-1zM225 288h1v2h-1zM236 288h2v2h-2zM247 288h1v2h-1zM259 288h1v2h-1zM270 288h1v2h-1zM281 288h1v2h-1zM293 288h1v2h-1zM304 288h1v2h-1zM316 288h1v2h-1zM327 288h1v2h-1zM338 288h1v2h-1zM350 288h2v2h-2zM361 288h1v2h-1zM372 288h1v2h-1zM384 288h1v2h-1zM395 288h1v2h-1zM407 288h1v2h-1zM418 288h1v2h-1zM429 288h1v2h-1zM441 288h1v2h-1zM452 288h1v2h-1zM464 288h2v2h-2zM475 288h1v2h-1zM486 288h1v2h-1zM498 288h1v2h-1zM509 288h1v2h-1zM520 288h1v2h-1zM532 288h1v2h-1zM543 288h1v2h-1zM555 288h1v2h-1zM566 288h1v2h-1zM577 288h2v2h-2zM589 288h1v2h-1zM600 288h1v2h-1zM612 288h1v2h-1zM623 288h1v2h-1zM634 288h1v2h-1zM646 288h1v2h-1zM657 288h1v2h-1zM668 288h1v2h-1zM680 288h1v2h-1zM691 288h2v2h-2zM703 288h1v2h-1zM714 288h1v2h-1zM725 288h1v2h-1zM737 288h1v2h-1zM748 288h1v2h-1zM759 288h1v2h-1zM771 288h1v2h-1zM782 288h1v2h-1zM794 288h1v2h-1zM805 288h2v2h-2zM816 288h1v2h-1zM828 288h1v2h-1zM839 288h1v2h-1zM851 288h1v2h-1zM862 288h1v2h-1zM873 288h1v2h-1zM885 288h1v2h-1zM896 288h1v2h-1zM907 288h1v2h-1zM919 288h2v2h-2zM930 288h1v2h-1zM942 288h1v2h-1zM953 288h1v2h-1zM964 288h1v2h-1zM42 300h1v1h-1zM54 300h1v1h-1zM65 300h1v1h-1zM77 300h1v1h-1zM88 300h1v1h-1zM99 300h1v1h-1zM111 300h1v1h-1zM122 300h2v1h-2zM133 300h1v1h-1zM145 300h1v1h-1zM156 300h1v1h-1zM168 300h1v1h-1zM179 300h1v1h-1zM190 300h1v1h-1zM202 300h1v1h-1zM213 300h1v1h-1zM225 300h1v1h-1zM236 300h2v1h-2zM247 300h1v1h-1zM259 300h1v1h-1zM270 300h1v1h-1zM281 300h1v1h-1zM293 300h1v1h-1zM304 300h1v1h-1zM316 300h1v1h-1zM327 300h1v1h-1zM338 300h1v1h-1zM350 300h2v1h-2zM361 300h1v1h-1zM372 300h1v1h-1zM384 300h1v1h-1zM395 300h1v1h-1zM407 300h1v1h-1zM418 300h1v1h-1zM429 300h1v1h-1zM441 300h1v1h-1zM452 300h1v1h-1zM464 300h2v1h-2zM475 300h1v1h-1zM486 300h1v1h-1zM498 300h1v1h-1zM509 300h1v1h-1zM520 300h1v1h-1zM532 300h1v1h-1zM543 300h1v1h-1zM555 300h1v1h-1zM566 300h1v1h-1zM577 300h2v1h-2zM589 300h1v1h-1zM600 300h1v1h-1zM612 300h1v1h-1zM623 300h1v1h-1zM634 300h1v1h-1zM646 300h1v1h-1zM657 300h1v1h-1zM668 300h1v1h-1zM680 300h1v1h-1zM691 300h2v1h-2zM703 300h1v1h-1zM714 300h1v1h-1zM725 300h1v1h-1zM737 300h1v1h-1zM748 300h1v1h-1zM759 300h1v1h-1zM771 300h1v1h-1zM782 300h1v1h-1zM794 300h1v1h-1zM805 300h2v1h-2zM816 300h1v1h-1zM828 300h1v1h-1zM839 300h1v1h-1zM851 300h1v1h-1zM862 300h1v1h-1zM873 300h1v1h-1zM885 300h1v1h-1zM896 300h1v1h-1zM907 300h1v1h-1zM919 300h2v1h-2zM930 300h1v1h-1zM942 300h1v1h-1zM953 300h1v1h-1zM964 300h1v1h-1zM42 312h1v1h-1zM54 312h1v1h-1zM65 312h1v1h-1zM77 312h1v1h-1zM88 312h1v1h-1zM99 312h1v1h-1zM111 312h1v1h-1zM122 312h2v1h-2zM133 312h1v1h-1zM145 312h1v1h-1zM156 312h1v1h-1zM168 312h1v1h-1zM179 312h1v1h-1zM190 312h1v1h-1zM202 312h1v1h-1zM213 312h1v1h-1zM225 312h1v1h-1zM236 312h2v1h-2zM247 312h1v1h-1zM259 312h1v1h-1zM270 312h1v1h-1zM281 312h1v1h-1zM293 312h1v1h-1zM304 312h1v1h-1zM316 312h1v1h-1zM327 312h1v1h-1zM338 312h1v1h-1zM350 312h2v1h-2zM361 312h1v1h-1zM372 312h1v1h-1zM384 312h1v1h-1zM395 312h1v1h-1zM407 312h1v1h-1zM418 312h1v1h-1zM429 312h1v1h-1zM441 312h1v1h-1zM452 312h1v1h-1zM464 312h2v1h-2zM475 312h1v1h-1zM486 312h1v1h-1zM498 312h1v1h-1zM509 312h1v1h-1zM520 312h1v1h-1zM532 312h1v1h-1zM543 312h1v1h-1zM555 312h1v1h-1zM566 312h1v1h-1zM577 312h2v1h-2zM589 312h1v1h-1zM600 312h1v1h-1zM612 312h1v1h-1zM623 312h1v1h-1zM634 312h1v1h-1zM646 312h1v1h-1zM657 312h1v1h-1zM668 312h1v1h-1zM680 312h1v1h-1zM691 312h2v1h-2zM703 312h1v1h-1zM714 312h1v1h-1zM725 312h1v1h-1zM737 312h1v1h-1zM748 312h1v1h-1zM759 312h1v1h-1zM771 312h1v1h-1zM782 312h1v1h-1zM794 312h1v1h-1zM805 312h2v1h-2zM816 312h1v1h-1zM828 312h1v1h-1zM839 312h1v1h-1zM851 312h1v1h-1zM862 312h1v1h-1zM873 312h1v1h-1zM885 312h1v1h-1zM896 312h1v1h-1zM907 312h1v1h-1zM919 312h2v1h-2zM930 312h1v1h-1zM942 312h1v1h-1zM953 312h1v1h-1zM964 312h1v1h-1zM42 323h1v1h-1zM54 323h1v1h-1zM65 323h1v1h-1zM77 323h1v1h-1zM88 323h1v1h-1zM99 323h1v1h-1zM111 323h1v1h-1zM122 323h2v1h-2zM133 323h1v1h-1zM145 323h1v1h-1zM156 323h1v1h-1zM168 323h1v1h-1zM179 323h1v1h-1zM190 323h1v1h-1zM202 323h1v1h-1zM213 323h1v1h-1zM225 323h1v1h-1zM236 323h2v1h-2zM247 323h1v1h-1zM259 323h1v1h-1zM270 323h1v1h-1zM281 323h1v1h-1zM293 323h1v1h-1zM304 323h1v1h-1zM316 323h1v1h-1zM327 323h1v1h-1zM338 323h1v1h-1zM350 323h2v1h-2zM361 323h1v1h-1zM372 323h1v1h-1zM384 323h1v1h-1zM395 323h1v1h-1zM407 323h1v1h-1zM418 323h1v1h-1zM429 323h1v1h-1zM441 323h1v1h-1zM452 323h1v1h-1zM464 323h2v1h-2zM475 323h1v1h-1zM486 323h1v1h-1zM498 323h1v1h-1zM509 323h1v1h-1zM520 323h1v1h-1zM532 323h1v1h-1zM543 323h1v1h-1zM555 323h1v1h-1zM566 323h1v1h-1zM577 323h2v1h-2zM589 323h1v1h-1zM600 323h1v1h-1zM612 323h1v1h-1zM623 323h1v1h-1zM634 323h1v1h-1zM646 323h1v1h-1zM657 323h1v1h-1zM668 323h1v1h-1zM680 323h1v1h-1zM691 323h2v1h-2zM703 323h1v1h-1zM714 323h1v1h-1zM725 323h1v1h-1zM737 323h1v1h-1zM748 323h1v1h-1zM759 323h1v1h-1zM771 323h1v1h-1zM782 323h1v1h-1zM794 323h1v1h-1zM805 323h2v1h-2zM816 323h1v1h-1zM828 323h1v1h-1zM839 323h1v1h-1zM851 323h1v1h-1zM862 323h1v1h-1zM873 323h1v1h-1zM885 323h1v1h-1zM896 323h1v1h-1zM907 323h1v1h-1zM919 323h2v1h-2zM930 323h1v1h-1zM942 323h1v1h-1zM953 323h1v1h-1zM964 323h1v1h-1zM42 334h1v1h-1zM54 334h1v1h-1zM65 334h1v1h-1zM77 334h1v1h-1zM88 334h1v1h-1zM99 334h1v1h-1zM111 334h1v1h-1zM122 334h2v1h-2zM133 334h1v1h-1zM145 334h1v1h-1zM156 334h1v1h-1zM168 334h1v1h-1zM179 334h1v1h-1zM190 334h1v1h-1zM202 334h1v1h-1zM213 334h1v1h-1zM225 334h1v1h-1zM236 334h2v1h-2zM247 334h1v1h-1zM259 334h1v1h-1zM270 334h1v1h-1zM281 334h1v1h-1zM293 334h1v1h-1zM304 334h1v1h-1zM316 334h1v1h-1zM327 334h1v1h-1zM338 334h1v1h-1zM350 334h2v1h-2zM361 334h1v1h-1zM372 334h1v1h-1zM384 334h1v1h-1zM395 334h1v1h-1zM407 334h1v1h-1zM418 334h1v1h-1zM429 334h1v1h-1zM441 334h1v1h-1zM452 334h1v1h-1zM464 334h2v1h-2zM475 334h1v1h-1zM486 334h1v1h-1zM498 334h1v1h-1zM509 334h1v1h-1zM520 334h1v1h-1zM532 334h1v1h-1zM543 334h1v1h-1zM555 334h1v1h-1zM566 334h1v1h-1zM577 334h2v1h-2zM589 334h1v1h-1zM600 334h1v1h-1zM612 334h1v1h-1zM623 334h1v1h-1zM634 334h1v1h-1zM646 334h1v1h-1zM657 334h1v1h-1zM668 334h1v1h-1zM680 334h1v1h-1zM691 334h2v1h-2zM703 334h1v1h-1zM714 334h1v1h-1zM725 334h1v1h-1zM737 334h1v1h-1zM748 334h1v1h-1zM759 334h1v1h-1zM771 334h1v1h-1zM782 334h1v1h-1zM794 334h1v1h-1zM805 334h2v1h-2zM816 334h1v1h-1zM828 334h1v1h-1zM839 334h1v1h-1zM851 334h1v1h-1zM862 334h1v1h-1zM873 334h1v1h-1zM885 334h1v1h-1zM896 334h1v1h-1zM907 334h1v1h-1zM919 334h2v1h-2zM930 334h1v1h-1zM942 334h1v1h-1zM953 334h1v1h-1zM964 334h1v1h-1zM42 346h1v1h-1zM54 346h1v1h-1zM65 346h1v1h-1zM77 346h1v1h-1zM88 346h1v1h-1zM99 346h1v1h-1zM111 346h1v1h-1zM122 346h2v1h-2zM133 346h1v1h-1zM145 346h1v1h-1zM156 346h1v1h-1zM168 346h1v1h-1zM179 346h1v1h-1zM190 346h1v1h-1zM202 346h1v1h-1zM213 346h1v1h-1zM225 346h1v1h-1zM236 346h2v1h-2zM247 346h1v1h-1zM259 346h1v1h-1zM270 346h1v1h-1zM281 346h1v1h-1zM293 346h1v1h-1zM304 346h1v1h-1zM316 346h1v1h-1zM327 346h1v1h-1zM338 346h1v1h-1zM350 346h2v1h-2zM361 346h1v1h-1zM372 346h1v1h-1zM384 346h1v1h-1zM395 346h1v1h-1zM407 346h1v1h-1zM418 346h1v1h-1zM429 346h1v1h-1zM441 346h1v1h-1zM452 346h1v1h-1zM464 346h2v1h-2zM475 346h1v1h-1zM486 346h1v1h-1zM498 346h1v1h-1zM509 346h1v1h-1zM520 346h1v1h-1zM532 346h1v1h-1zM543 346h1v1h-1zM555 346h1v1h-1zM566 346h1v1h-1zM577 346h2v1h-2zM589 346h1v1h-1zM600 346h1v1h-1zM612 346h1v1h-1zM623 346h1v1h-1zM634 346h1v1h-1zM646 346h1v1h-1zM657 346h1v1h-1zM668 346h1v1h-1zM680 346h1v1h-1zM691 346h2v1h-2zM703 346h1v1h-1zM714 346h1v1h-1zM725 346h1v1h-1zM737 346h1v1h-1zM748 346h1v1h-1zM759 346h1v1h-1zM771 346h1v1h-1zM782 346h1v1h-1zM794 346h1v1h-1zM805 346h2v1h-2zM816 346h1v1h-1zM828 346h1v1h-1zM839 346h1v1h-1zM851 346h1v1h-1zM862 346h1v1h-1zM873 346h1v1h-1zM885 346h1v1h-1zM896 346h1v1h-1zM907 346h1v1h-1zM919 346h2v1h-2zM930 346h1v1h-1zM942 346h1v1h-1zM953 346h1v1h-1zM964 346h1v1h-1zM42 357h1v1h-1zM54 357h1v1h-1zM65 357h1v1h-1zM77 357h1v1h-1zM88 357h1v1h-1zM99 357h1v1h-1zM111 357h1v1h-1zM122 357h2v1h-2zM133 357h1v1h-1zM145 357h1v1h-1zM156 357h1v1h-1zM168 357h1v1h-1zM179 357h1v1h-1zM190 357h1v1h-1zM202 357h1v1h-1zM213 357h1v1h-1zM225 357h1v1h-1zM236 357h2v1h-2zM247 357h1v1h-1zM259 357h1v1h-1zM270 357h1v1h-1zM281 357h1v1h-1zM293 357h1v1h-1zM304 357h1v1h-1zM316 357h1v1h-1zM327 357h1v1h-1zM338 357h1v1h-1zM350 357h2v1h-2zM361 357h1v1h-1zM372 357h1v1h-1zM384 357h1v1h-1zM395 357h1v1h-1zM407 357h1v1h-1zM418 357h1v1h-1zM429 357h1v1h-1zM441 357h1v1h-1zM452 357h1v1h-1zM464 357h2v1h-2zM475 357h1v1h-1zM486 357h1v1h-1zM498 357h1v1h-1zM509 357h1v1h-1zM520 357h1v1h-1zM532 357h1v1h-1zM543 357h1v1h-1zM555 357h1v1h-1zM566 357h1v1h-1zM577 357h2v1h-2zM589 357h1v1h-1zM600 357h1v1h-1zM612 357h1v1h-1zM623 357h1v1h-1zM634 357h1v1h-1zM646 357h1v1h-1zM657 357h1v1h-1zM668 357h1v1h-1zM680 357h1v1h-1zM691 357h2v1h-2zM703 357h1v1h-1zM714 357h1v1h-1zM725 357h1v1h-1zM737 357h1v1h-1zM748 357h1v1h-1zM759 357h1v1h-1zM771 357h1v1h-1zM782 357h1v1h-1zM794 357h1v1h-1zM805 357h2v1h-2zM816 357h1v1h-1zM828 357h1v1h-1zM839 357h1v1h-1zM851 357h1v1h-1zM862 357h1v1h-1zM873 357h1v1h-1zM885 357h1v1h-1zM896 357h1v1h-1zM907 357h1v1h-1zM919 357h2v1h-2zM930 357h1v1h-1zM942 357h1v1h-1zM953 357h1v1h-1zM964 357h1v1h-1zM42 368h1v1h-1zM54 368h1v1h-1zM65 368h1v1h-1zM77 368h1v1h-1zM88 368h1v1h-1zM99 368h1v1h-1zM111 368h1v1h-1zM122 368h2v1h-2zM133 368h1v1h-1zM145 368h1v1h-1zM156 368h1v1h-1zM168 368h1v1h-1zM179 368h1v1h-1zM190 368h1v1h-1zM202 368h1v1h-1zM213 368h1v1h-1zM225 368h1v1h-1zM236 368h2v1h-2zM247 368h1v1h-1zM259 368h1v1h-1zM270 368h1v1h-1zM281 368h1v1h-1zM293 368h1v1h-1zM304 368h1v1h-1zM316 368h1v1h-1zM327 368h1v1h-1zM338 368h1v1h-1zM350 368h2v1h-2zM361 368h1v1h-1zM372 368h1v1h-1zM384 368h1v1h-1zM395 368h1v1h-1zM407 368h1v1h-1zM418 368h1v1h-1zM429 368h1v1h-1zM441 368h1v1h-1zM452 368h1v1h-1zM464 368h2v1h-2zM475 368h1v1h-1zM486 368h1v1h-1zM498 368h1v1h-1zM509 368h1v1h-1zM520 368h1v1h-1zM532 368h1v1h-1zM543 368h1v1h-1zM555 368h1v1h-1zM566 368h1v1h-1zM577 368h2v1h-2zM589 368h1v1h-1zM600 368h1v1h-1zM612 368h1v1h-1zM623 368h1v1h-1zM634 368h1v1h-1zM646 368h1v1h-1zM657 368h1v1h-1zM668 368h1v1h-1zM680 368h1v1h-1zM691 368h2v1h-2zM703 368h1v1h-1zM714 368h1v1h-1zM725 368h1v1h-1zM737 368h1v1h-1zM748 368h1v1h-1zM759 368h1v1h-1zM771 368h1v1h-1zM782 368h1v1h-1zM794 368h1v1h-1zM805 368h2v1h-2zM816 368h1v1h-1zM828 368h1v1h-1zM839 368h1v1h-1zM851 368h1v1h-1zM862 368h1v1h-1zM873 368h1v1h-1zM885 368h1v1h-1zM896 368h1v1h-1zM907 368h1v1h-1zM919 368h2v1h-2zM930 368h1v1h-1zM942 368h1v1h-1zM953 368h1v1h-1zM964 368h1v1h-1zM42 380h1v1h-1zM54 380h1v1h-1zM65 380h1v1h-1zM77 380h1v1h-1zM88 380h1v1h-1zM99 380h1v1h-1zM111 380h1v1h-1zM122 380h2v1h-2zM133 380h1v1h-1zM145 380h1v1h-1zM156 380h1v1h-1zM168 380h1v1h-1zM179 380h1v1h-1zM190 380h1v1h-1zM202 380h1v1h-1zM213 380h1v1h-1zM225 380h1v1h-1zM236 380h2v1h-2zM247 380h1v1h-1zM259 380h1v1h-1zM270 380h1v1h-1zM281 380h1v1h-1zM293 380h1v1h-1zM304 380h1v1h-1zM316 380h1v1h-1zM327 380h1v1h-1zM338 380h1v1h-1zM350 380h2v1h-2zM361 380h1v1h-1zM372 380h1v1h-1zM384 380h1v1h-1zM395 380h1v1h-1zM407 380h1v1h-1zM418 380h1v1h-1zM429 380h1v1h-1zM441 380h1v1h-1zM452 380h1v1h-1zM464 380h2v1h-2zM475 380h1v1h-1zM486 380h1v1h-1zM498 380h1v1h-1zM509 380h1v1h-1zM520 380h1v1h-1zM532 380h1v1h-1zM543 380h1v1h-1zM555 380h1v1h-1zM566 380h1v1h-1zM577 380h2v1h-2zM589 380h1v1h-1zM600 380h1v1h-1zM612 380h1v1h-1zM623 380h1v1h-1zM634 380h1v1h-1zM646 380h1v1h-1zM657 380h1v1h-1zM668 380h1v1h-1zM680 380h1v1h-1zM691 380h2v1h-2zM703 380h1v1h-1zM714 380h1v1h-1zM725 380h1v1h-1zM737 380h1v1h-1zM748 380h1v1h-1zM759 380h1v1h-1zM771 380h1v1h-1zM782 380h1v1h-1zM794 380h1v1h-1zM805 380h2v1h-2zM816 380h1v1h-1zM828 380h1v1h-1zM839 380h1v1h-1zM851 380h1v1h-1zM862 380h1v1h-1zM873 380h1v1h-1zM885 380h1v1h-1zM896 380h1v1h-1zM907 380h1v1h-1zM919 380h2v1h-2zM930 380h1v1h-1zM942 380h1v1h-1zM953 380h1v1h-1zM964 380h1v1h-1zM42 391h1v1h-1zM54 391h1v1h-1zM65 391h1v1h-1zM77 391h1v1h-1zM88 391h1v1h-1zM99 391h1v1h-1zM111 391h1v1h-1zM122 391h2v1h-2zM133 391h1v1h-1zM145 391h1v1h-1zM156 391h1v1h-1zM168 391h1v1h-1zM179 391h1v1h-1zM190 391h1v1h-1zM202 391h1v1h-1zM213 391h1v1h-1zM225 391h1v1h-1zM236 391h2v1h-2zM247 391h1v1h-1zM259 391h1v1h-1zM270 391h1v1h-1zM281 391h1v1h-1zM293 391h1v1h-1zM304 391h1v1h-1zM316 391h1v1h-1zM327 391h1v1h-1zM338 391h1v1h-1zM350 391h2v1h-2zM361 391h1v1h-1zM372 391h1v1h-1zM384 391h1v1h-1zM395 391h1v1h-1zM407 391h1v1h-1zM418 391h1v1h-1zM429 391h1v1h-1zM441 391h1v1h-1zM452 391h1v1h-1zM464 391h2v1h-2zM475 391h1v1h-1zM486 391h1v1h-1zM498 391h1v1h-1zM509 391h1v1h-1zM520 391h1v1h-1zM532 391h1v1h-1zM543 391h1v1h-1zM555 391h1v1h-1zM566 391h1v1h-1zM577 391h2v1h-2zM589 391h1v1h-1zM600 391h1v1h-1zM612 391h1v1h-1zM623 391h1v1h-1zM634 391h1v1h-1zM646 391h1v1h-1zM657 391h1v1h-1zM668 391h1v1h-1zM680 391h1v1h-1zM691 391h2v1h-2zM703 391h1v1h-1zM714 391h1v1h-1zM725 391h1v1h-1zM737 391h1v1h-1zM748 391h1v1h-1zM759 391h1v1h-1zM771 391h1v1h-1zM782 391h1v1h-1zM794 391h1v1h-1zM805 391h2v1h-2zM816 391h1v1h-1zM828 391h1v1h-1zM839 391h1v1h-1zM851 391h1v1h-1zM862 391h1v1h-1zM873 391h1v1h-1zM885 391h1v1h-1zM896 391h1v1h-1zM907 391h1v1h-1zM919 391h2v1h-2zM930 391h1v1h-1zM942 391h1v1h-1zM953 391h1v1h-1zM964 391h1v1h-1zM42 402h1v2h-1zM54 402h1v2h-1zM65 402h1v2h-1zM77 402h1v2h-1zM88 402h1v2h-1zM99 402h1v2h-1zM111 402h1v2h-1zM122 402h2v2h-2zM133 402h1v2h-1zM145 402h1v2h-1zM156 402h1v2h-1zM168 402h1v2h-1zM179 402h1v2h-1zM190 402h1v2h-1zM202 402h1v2h-1zM213 402h1v2h-1zM225 402h1v2h-1zM236 402h2v2h-2zM247 402h1v2h-1zM259 402h1v2h-1zM270 402h1v2h-1zM281 402h1v2h-1zM293 402h1v2h-1zM304 402h1v2h-1zM316 402h1v2h-1zM327 402h1v2h-1zM338 402h1v2h-1zM350 402h2v2h-2zM361 402h1v2h-1zM372 402h1v2h-1zM384 402h1v2h-1zM395 402h1v2h-1zM407 402h1v2h-1zM418 402h1v2h-1zM429 402h1v2h-1zM441 402h1v2h-1zM452 402h1v2h-1zM464 402h2v2h-2zM475 402h1v2h-1zM486 402h1v2h-1zM498 402h1v2h-1zM509 402h1v2h-1zM520 402h1v2h-1zM532 402h1v2h-1zM543 402h1v2h-1zM555 402h1v2h-1zM566 402h1v2h-1zM577 402h2v2h-2zM589 402h1v2h-1zM600 402h1v2h-1zM612 402h1v2h-1zM623 402h1v2h-1zM634 402h1v2h-1zM646 402h1v2h-1zM657 402h1v2h-1zM668 402h1v2h-1zM680 402h1v2h-1zM691 402h2v2h-2zM703 402h1v2h-1zM714 402h1v2h-1zM725 402h1v2h-1zM737 402h1v2h-1zM748 402h1v2h-1zM759 402h1v2h-1zM771 402h1v2h-1zM782 402h1v2h-1zM794 402h1v2h-1zM805 402h2v2h-2zM816 402h1v2h-1zM828 402h1v2h-1zM839 402h1v2h-1zM851 402h1v2h-1zM862 402h1v2h-1zM873 402h1v2h-1zM885 402h1v2h-1zM896 402h1v2h-1zM907 402h1v2h-1zM919 402h2v2h-2zM930 402h1v2h-1zM942 402h1v2h-1zM953 402h1v2h-1zM964 402h1v2h-1zM42 414h1v1h-1zM54 414h1v1h-1zM65 414h1v1h-1zM77 414h1v1h-1zM88 414h1v1h-1zM99 414h1v1h-1zM111 414h1v1h-1zM122 414h2v1h-2zM133 414h1v1h-1zM145 414h1v1h-1zM156 414h1v1h-1zM168 414h1v1h-1zM179 414h1v1h-1zM190 414h1v1h-1zM202 414h1v1h-1zM213 414h1v1h-1zM225 414h1v1h-1zM236 414h2v1h-2zM247 414h1v1h-1zM259 414h1v1h-1zM270 414h1v1h-1zM281 414h1v1h-1zM293 414h1v1h-1zM304 414h1v1h-1zM316 414h1v1h-1zM327 414h1v1h-1zM338 414h1v1h-1zM350 414h2v1h-2zM361 414h1v1h-1zM372 414h1v1h-1zM384 414h1v1h-1zM395 414h1v1h-1zM407 414h1v1h-1zM418 414h1v1h-1zM429 414h1v1h-1zM441 414h1v1h-1zM452 414h1v1h-1zM464 414h2v1h-2zM475 414h1v1h-1zM486 414h1v1h-1zM498 414h1v1h-1zM509 414h1v1h-1zM520 414h1v1h-1zM532 414h1v1h-1zM543 414h1v1h-1zM555 414h1v1h-1zM566 414h1v1h-1zM577 414h2v1h-2zM589 414h1v1h-1zM600 414h1v1h-1zM612 414h1v1h-1zM623 414h1v1h-1zM634 414h1v1h-1zM646 414h1v1h-1zM657 414h1v1h-1zM668 414h1v1h-1zM680 414h1v1h-1zM691 414h2v1h-2zM703 414h1v1h-1zM714 414h1v1h-1zM725 414h1v1h-1zM737 414h1v1h-1zM748 414h1v1h-1zM759 414h1v1h-1zM771 414h1v1h-1zM782 414h1v1h-1zM794 414h1v1h-1zM805 414h2v1h-2zM816 414h1v1h-1zM828 414h1v1h-1zM839 414h1v1h-1zM851 414h1v1h-1zM862 414h1v1h-1zM873 414h1v1h-1zM885 414h1v1h-1zM896 414h1v1h-1zM907 414h1v1h-1zM919 414h2v1h-2zM930 414h1v1h-1zM942 414h1v1h-1zM953 414h1v1h-1zM964 414h1v1h-1zM42 425h1v1h-1zM54 425h1v1h-1zM65 425h1v1h-1zM77 425h1v1h-1zM88 425h1v1h-1zM99 425h1v1h-1zM111 425h1v1h-1zM122 425h2v1h-2zM133 425h1v1h-1zM145 425h1v1h-1zM156 425h1v1h-1zM168 425h1v1h-1zM179 425h1v1h-1zM190 425h1v1h-1zM202 425h1v1h-1zM213 425h1v1h-1zM225 425h1v1h-1zM236 425h2v1h-2zM247 425h1v1h-1zM259 425h1v1h-1zM270 425h1v1h-1zM281 425h1v1h-1zM293 425h1v1h-1zM304 425h1v1h-1zM316 425h1v1h-1zM327 425h1v1h-1zM338 425h1v1h-1zM350 425h2v1h-2zM361 425h1v1h-1zM372 425h1v1h-1zM384 425h1v1h-1zM395 425h1v1h-1zM407 425h1v1h-1zM418 425h1v1h-1zM429 425h1v1h-1zM441 425h1v1h-1zM452 425h1v1h-1zM464 425h2v1h-2zM475 425h1v1h-1zM486 425h1v1h-1zM498 425h1v1h-1zM509 425h1v1h-1zM520 425h1v1h-1zM532 425h1v1h-1zM543 425h1v1h-1zM555 425h1v1h-1zM566 425h1v1h-1zM577 425h2v1h-2zM589 425h1v1h-1zM600 425h1v1h-1zM612 425h1v1h-1zM623 425h1v1h-1zM634 425h1v1h-1zM646 425h1v1h-1zM657 425h1v1h-1zM668 425h1v1h-1zM680 425h1v1h-1zM691 425h2v1h-2zM703 425h1v1h-1zM714 425h1v1h-1zM725 425h1v1h-1zM737 425h1v1h-1zM748 425h1v1h-1zM759 425h1v1h-1zM771 425h1v1h-1zM782 425h1v1h-1zM794 425h1v1h-1zM805 425h2v1h-2zM816 425h1v1h-1zM828 425h1v1h-1zM839 425h1v1h-1zM851 425h1v1h-1zM862 425h1v1h-1zM873 425h1v1h-1zM885 425h1v1h-1zM896 425h1v1h-1zM907 425h1v1h-1zM919 425h2v1h-2zM930 425h1v1h-1zM942 425h1v1h-1zM953 425h1v1h-1zM964 425h1v1h-1zM42 437h1v1h-1zM54 437h1v1h-1zM65 437h1v1h-1zM77 437h1v1h-1zM88 437h1v1h-1zM99 437h1v1h-1zM111 437h1v1h-1zM122 437h2v1h-2zM133 437h1v1h-1zM145 437h1v1h-1zM156 437h1v1h-1zM168 437h1v1h-1zM179 437h1v1h-1zM190 437h1v1h-1zM202 437h1v1h-1zM213 437h1v1h-1zM225 437h1v1h-1zM236 437h2v1h-2zM247 437h1v1h-1zM259 437h1v1h-1zM270 437h1v1h-1zM281 437h1v1h-1zM293 437h1v1h-1zM304 437h1v1h-1zM316 437h1v1h-1zM327 437h1v1h-1zM338 437h1v1h-1zM350 437h2v1h-2zM361 437h1v1h-1zM372 437h1v1h-1zM384 437h1v1h-1zM395 437h1v1h-1zM407 437h1v1h-1zM418 437h1v1h-1zM429 437h1v1h-1zM441 437h1v1h-1zM452 437h1v1h-1zM464 437h2v1h-2zM475 437h1v1h-1zM486 437h1v1h-1zM498 437h1v1h-1zM509 437h1v1h-1zM520 437h1v1h-1zM532 437h1v1h-1zM543 437h1v1h-1zM555 437h1v1h-1zM566 437h1v1h-1zM577 437h2v1h-2zM589 437h1v1h-1zM600 437h1v1h-1zM612 437h1v1h-1zM623 437h1v1h-1zM634 437h1v1h-1zM646 437h1v1h-1zM657 437h1v1h-1zM668 437h1v1h-1zM680 437h1v1h-1zM691 437h2v1h-2zM703 437h1v1h-1zM714 437h1v1h-1zM725 437h1v1h-1zM737 437h1v1h-1zM748 437h1v1h-1zM759 437h1v1h-1zM771 437h1v1h-1zM782 437h1v1h-1zM794 437h1v1h-1zM805 437h2v1h-2zM816 437h1v1h-1zM828 437h1v1h-1zM839 437h1v1h-1zM851 437h1v1h-1zM862 437h1v1h-1zM873 437h1v1h-1zM885 437h1v1h-1zM896 437h1v1h-1zM907 437h1v1h-1zM919 437h2v1h-2zM930 437h1v1h-1zM942 437h1v1h-1zM953 437h1v1h-1zM964 437h1v1h-1zM42 448h1v1h-1zM54 448h1v1h-1zM65 448h1v1h-1zM77 448h1v1h-1zM88 448h1v1h-1zM99 448h1v1h-1zM111 448h1v1h-1zM122 448h2v1h-2zM133 448h1v1h-1zM145 448h1v1h-1zM156 448h1v1h-1zM168 448h1v1h-1zM179 448h1v1h-1zM190 448h1v1h-1zM202 448h1v1h-1zM213 448h1v1h-1zM225 448h1v1h-1zM236 448h2v1h-2zM247 448h1v1h-1zM259 448h1v1h-1zM270 448h1v1h-1zM281 448h1v1h-1zM293 448h1v1h-1zM304 448h1v1h-1zM316 448h1v1h-1zM327 448h1v1h-1zM338 448h1v1h-1zM350 448h2v1h-2zM361 448h1v1h-1zM372 448h1v1h-1zM384 448h1v1h-1zM395 448h1v1h-1zM407 448h1v1h-1zM418 448h1v1h-1zM429 448h1v1h-1zM441 448h1v1h-1zM452 448h1v1h-1zM464 448h2v1h-2zM475 448h1v1h-1zM486 448h1v1h-1zM498 448h1v1h-1zM509 448h1v1h-1zM520 448h1v1h-1zM532 448h1v1h-1zM543 448h1v1h-1zM555 448h1v1h-1zM566 448h1v1h-1zM577 448h2v1h-2zM589 448h1v1h-1zM600 448h1v1h-1zM612 448h1v1h-1zM623 448h1v1h-1zM634 448h1v1h-1zM646 448h1v1h-1zM657 448h1v1h-1zM668 448h1v1h-1zM680 448h1v1h-1zM691 448h2v1h-2zM703 448h1v1h-1zM714 448h1v1h-1zM725 448h1v1h-1zM737 448h1v1h-1zM748 448h1v1h-1zM759 448h1v1h-1zM771 448h1v1h-1zM782 448h1v1h-1zM794 448h1v1h-1zM805 448h2v1h-2zM816 448h1v1h-1zM828 448h1v1h-1zM839 448h1v1h-1zM851 448h1v1h-1zM862 448h1v1h-1zM873 448h1v1h-1zM885 448h1v1h-1zM896 448h1v1h-1zM907 448h1v1h-1zM919 448h2v1h-2zM930 448h1v1h-1zM942 448h1v1h-1zM953 448h1v1h-1zM964 448h1v1h-1zM42 459h1v1h-1zM54 459h1v1h-1zM65 459h1v1h-1zM77 459h1v1h-1zM88 459h1v1h-1zM99 459h1v1h-1zM111 459h1v1h-1zM122 459h2v1h-2zM133 459h1v1h-1zM145 459h1v1h-1zM156 459h1v1h-1zM168 459h1v1h-1zM179 459h1v1h-1zM190 459h1v1h-1zM202 459h1v1h-1zM213 459h1v1h-1zM225 459h1v1h-1zM236 459h2v1h-2zM247 459h1v1h-1zM259 459h1v1h-1zM270 459h1v1h-1zM281 459h1v1h-1zM293 459h1v1h-1zM304 459h1v1h-1zM316 459h1v1h-1zM327 459h1v1h-1zM338 459h1v1h-1zM350 459h2v1h-2zM361 459h1v1h-1zM372 459h1v1h-1zM384 459h1v1h-1zM395 459h1v1h-1zM407 459h1v1h-1zM418 459h1v1h-1zM429 459h1v1h-1zM441 459h1v1h-1zM452 459h1v1h-1zM464 459h2v1h-2zM475 459h1v1h-1zM486 459h1v1h-1zM498 459h1v1h-1zM509 459h1v1h-1zM520 459h1v1h-1zM532 459h1v1h-1zM543 459h1v1h-1zM555 459h1v1h-1zM566 459h1v1h-1zM577 459h2v1h-2zM589 459h1v1h-1zM600 459h1v1h-1zM612 459h1v1h-1zM623 459h1v1h-1zM634 459h1v1h-1zM646 459h1v1h-1zM657 459h1v1h-1zM668 459h1v1h-1zM680 459h1v1h-1zM691 459h2v1h-2zM703 459h1v1h-1zM714 459h1v1h-1zM725 459h1v1h-1zM737 459h1v1h-1zM748 459h1v1h-1zM759 459h1v1h-1zM771 459h1v1h-1zM782 459h1v1h-1zM794 459h1v1h-1zM805 459h2v1h-2zM816 459h1v1h-1zM828 459h1v1h-1zM839 459h1v1h-1zM851 459h1v1h-1zM862 459h1v1h-1zM873 459h1v1h-1zM885 459h1v1h-1zM896 459h1v1h-1zM907 459h1v1h-1zM919 459h2v1h-2zM930 459h1v1h-1zM942 459h1v1h-1zM953 459h1v1h-1zM964 459h1v1h-1zM42 471h1v1h-1zM54 471h1v1h-1zM65 471h1v1h-1zM77 471h1v1h-1zM88 471h1v1h-1zM99 471h1v1h-1zM111 471h1v1h-1zM122 471h2v1h-2zM133 471h1v1h-1zM145 471h1v1h-1zM156 471h1v1h-1zM168 471h1v1h-1zM179 471h1v1h-1zM190 471h1v1h-1zM202 471h1v1h-1zM213 471h1v1h-1zM225 471h1v1h-1zM236 471h2v1h-2zM247 471h1v1h-1zM259 471h1v1h-1zM270 471h1v1h-1zM281 471h1v1h-1zM293 471h1v1h-1zM304 471h1v1h-1zM316 471h1v1h-1zM327 471h1v1h-1zM338 471h1v1h-1zM350 471h2v1h-2zM361 471h1v1h-1zM372 471h1v1h-1zM384 471h1v1h-1zM395 471h1v1h-1zM407 471h1v1h-1zM418 471h1v1h-1zM429 471h1v1h-1zM441 471h1v1h-1zM452 471h1v1h-1zM464 471h2v1h-2zM475 471h1v1h-1zM486 471h1v1h-1zM498 471h1v1h-1zM509 471h1v1h-1zM520 471h1v1h-1zM532 471h1v1h-1zM543 471h1v1h-1zM555 471h1v1h-1zM566 471h1v1h-1zM577 471h2v1h-2zM589 471h1v1h-1zM600 471h1v1h-1zM612 471h1v1h-1zM623 471h1v1h-1zM634 471h1v1h-1zM646 471h1v1h-1zM657 471h1v1h-1zM668 471h1v1h-1zM680 471h1v1h-1zM691 471h2v1h-2zM703 471h1v1h-1zM714 471h1v1h-1zM725 471h1v1h-1zM737 471h1v1h-1zM748 471h1v1h-1zM759 471h1v1h-1zM771 471h1v1h-1zM782 471h1v1h-1zM794 471h1v1h-1zM805 471h2v1h-2zM816 471h1v1h-1zM828 471h1v1h-1zM839 471h1v1h-1zM851 471h1v1h-1zM862 471h1v1h-1zM873 471h1v1h-1zM885 471h1v1h-1zM896 471h1v1h-1zM907 471h1v1h-1zM919 471h2v1h-2zM930 471h1v1h-1zM942 471h1v1h-1zM953 471h1v1h-1zM964 471h1v1h-1zM42 482h1v1h-1zM54 482h1v1h-1zM65 482h1v1h-1zM77 482h1v1h-1zM88 482h1v1h-1zM99 482h1v1h-1zM111 482h1v1h-1zM122 482h2v1h-2zM133 482h1v1h-1zM145 482h1v1h-1zM156 482h1v1h-1zM168 482h1v1h-1zM179 482h1v1h-1zM190 482h1v1h-1zM202 482h1v1h-1zM213 482h1v1h-1zM225 482h1v1h-1zM236 482h2v1h-2zM247 482h1v1h-1zM259 482h1v1h-1zM270 482h1v1h-1zM281 482h1v1h-1zM293 482h1v1h-1zM304 482h1v1h-1zM316 482h1v1h-1zM327 482h1v1h-1zM338 482h1v1h-1zM350 482h2v1h-2zM361 482h1v1h-1zM372 482h1v1h-1zM384 482h1v1h-1zM395 482h1v1h-1zM407 482h1v1h-1zM418 482h1v1h-1zM429 482h1v1h-1zM441 482h1v1h-1zM452 482h1v1h-1zM464 482h2v1h-2zM475 482h1v1h-1zM486 482h1v1h-1zM498 482h1v1h-1zM509 482h1v1h-1zM520 482h1v1h-1zM532 482h1v1h-1zM543 482h1v1h-1zM555 482h1v1h-1zM566 482h1v1h-1zM577 482h2v1h-2zM589 482h1v1h-1zM600 482h1v1h-1zM612 482h1v1h-1zM623 482h1v1h-1zM634 482h1v1h-1zM646 482h1v1h-1zM657 482h1v1h-1zM668 482h1v1h-1zM680 482h1v1h-1zM691 482h2v1h-2zM703 482h1v1h-1zM714 482h1v1h-1zM725 482h1v1h-1zM737 482h1v1h-1zM748 482h1v1h-1zM759 482h1v1h-1zM771 482h1v1h-1zM782 482h1v1h-1zM794 482h1v1h-1zM805 482h2v1h-2zM816 482h1v1h-1zM828 482h1v1h-1zM839 482h1v1h-1zM851 482h1v1h-1zM862 482h1v1h-1zM873 482h1v1h-1zM885 482h1v1h-1zM896 482h1v1h-1zM907 482h1v1h-1zM919 482h2v1h-2zM930 482h1v1h-1zM942 482h1v1h-1zM953 482h1v1h-1zM964 482h1v1h-1zM42 493h1v1h-1zM54 493h1v1h-1zM65 493h1v1h-1zM77 493h1v1h-1zM88 493h1v1h-1zM99 493h1v1h-1zM111 493h1v1h-1zM122 493h2v1h-2zM133 493h1v1h-1zM145 493h1v1h-1zM156 493h1v1h-1zM168 493h1v1h-1zM179 493h1v1h-1zM190 493h1v1h-1zM202 493h1v1h-1zM213 493h1v1h-1zM225 493h1v1h-1zM236 493h2v1h-2zM247 493h1v1h-1zM259 493h1v1h-1zM270 493h1v1h-1zM281 493h1v1h-1zM293 493h1v1h-1zM304 493h1v1h-1zM316 493h1v1h-1zM327 493h1v1h-1zM338 493h1v1h-1zM350 493h2v1h-2zM361 493h1v1h-1zM372 493h1v1h-1zM384 493h1v1h-1zM395 493h1v1h-1zM407 493h1v1h-1zM418 493h1v1h-1zM429 493h1v1h-1zM441 493h1v1h-1zM452 493h1v1h-1zM464 493h2v1h-2zM475 493h1v1h-1zM486 493h1v1h-1zM498 493h1v1h-1zM509 493h1v1h-1zM520 493h1v1h-1zM532 493h1v1h-1zM543 493h1v1h-1zM555 493h1v1h-1zM566 493h1v1h-1zM577 493h2v1h-2zM589 493h1v1h-1zM600 493h1v1h-1zM612 493h1v1h-1zM623 493h1v1h-1zM634 493h1v1h-1zM646 493h1v1h-1zM657 493h1v1h-1zM668 493h1v1h-1zM680 493h1v1h-1zM691 493h2v1h-2zM703 493h1v1h-1zM714 493h1v1h-1zM725 493h1v1h-1zM737 493h1v1h-1zM748 493h1v1h-1zM759 493h1v1h-1zM771 493h1v1h-1zM782 493h1v1h-1zM794 493h1v1h-1zM805 493h2v1h-2zM816 493h1v1h-1zM828 493h1v1h-1zM839 493h1v1h-1zM851 493h1v1h-1zM862 493h1v1h-1zM873 493h1v1h-1zM885 493h1v1h-1zM896 493h1v1h-1zM907 493h1v1h-1zM919 493h2v1h-2zM930 493h1v1h-1zM942 493h1v1h-1zM953 493h1v1h-1zM964 493h1v1h-1zM42 505h1v1h-1zM54 505h1v1h-1zM65 505h1v1h-1zM77 505h1v1h-1zM88 505h1v1h-1zM99 505h1v1h-1zM111 505h1v1h-1zM122 505h2v1h-2zM133 505h1v1h-1zM145 505h1v1h-1zM156 505h1v1h-1zM168 505h1v1h-1zM179 505h1v1h-1zM190 505h1v1h-1zM202 505h1v1h-1zM213 505h1v1h-1zM225 505h1v1h-1zM236 505h2v1h-2zM247 505h1v1h-1zM259 505h1v1h-1zM270 505h1v1h-1zM281 505h1v1h-1zM293 505h1v1h-1zM304 505h1v1h-1zM316 505h1v1h-1zM327 505h1v1h-1zM338 505h1v1h-1zM350 505h2v1h-2zM361 505h1v1h-1zM372 505h1v1h-1zM384 505h1v1h-1zM395 505h1v1h-1zM407 505h1v1h-1zM418 505h1v1h-1zM429 505h1v1h-1zM441 505h1v1h-1zM452 505h1v1h-1zM464 505h2v1h-2zM475 505h1v1h-1zM486 505h1v1h-1zM498 505h1v1h-1zM509 505h1v1h-1zM520 505h1v1h-1zM532 505h1v1h-1zM543 505h1v1h-1zM555 505h1v1h-1zM566 505h1v1h-1zM577 505h2v1h-2zM589 505h1v1h-1zM600 505h1v1h-1zM612 505h1v1h-1zM623 505h1v1h-1zM634 505h1v1h-1zM646 505h1v1h-1zM657 505h1v1h-1zM668 505h1v1h-1zM680 505h1v1h-1zM691 505h2v1h-2zM703 505h1v1h-1zM714 505h1v1h-1zM725 505h1v1h-1zM737 505h1v1h-1zM748 505h1v1h-1zM759 505h1v1h-1zM771 505h1v1h-1zM782 505h1v1h-1zM794 505h1v1h-1zM805 505h2v1h-2zM816 505h1v1h-1zM828 505h1v1h-1zM839 505h1v1h-1zM851 505h1v1h-1zM862 505h1v1h-1zM873 505h1v1h-1zM885 505h1v1h-1zM896 505h1v1h-1zM907 505h1v1h-1zM919 505h2v1h-2zM930 505h1v1h-1zM942 505h1v1h-1zM953 505h1v1h-1zM964 505h1v1h-1zM42 515h1v2h-1zM54 515h1v2h-1zM65 515h1v2h-1zM77 515h1v2h-1zM88 515h1v2h-1zM99 515h1v2h-1zM111 515h1v2h-1zM122 515h2v2h-2zM133 515h1v2h-1zM145 515h1v2h-1zM156 515h1v2h-1zM168 515h1v2h-1zM179 515h1v2h-1zM190 515h1v2h-1zM202 515h1v2h-1zM213 515h1v2h-1zM225 515h1v2h-1zM236 515h2v2h-2zM247 515h1v2h-1zM259 515h1v2h-1zM270 515h1v2h-1zM281 515h1v2h-1zM293 515h1v2h-1zM304 515h1v2h-1zM316 515h1v2h-1zM327 515h1v2h-1zM338 515h1v2h-1zM350 515h2v2h-2zM361 515h1v2h-1zM372 515h1v2h-1zM384 515h1v2h-1zM395 515h1v2h-1zM407 515h1v2h-1zM418 515h1v2h-1zM429 515h1v2h-1zM441 515h1v2h-1zM452 515h1v2h-1zM464 515h2v2h-2zM475 515h1v2h-1zM486 515h1v2h-1zM498 515h1v2h-1zM509 515h1v2h-1zM520 515h1v2h-1zM532 515h1v2h-1zM543 515h1v2h-1zM555 515h1v2h-1zM566 515h1v2h-1zM577 515h2v2h-2zM589 515h1v2h-1zM600 515h1v2h-1zM612 515h1v2h-1zM623 515h1v2h-1zM634 515h1v2h-1zM646 515h1v2h-1zM657 515h1v2h-1zM668 515h1v2h-1zM680 515h1v2h-1zM691 515h2v2h-2zM703 515h1v2h-1zM714 515h1v2h-1zM725 515h1v2h-1zM737 515h1v2h-1zM748 515h1v2h-1zM759 515h1v2h-1zM771 515h1v2h-1zM782 515h1v2h-1zM794 515h1v2h-1zM805 515h2v2h-2zM816 515h1v2h-1zM828 515h1v2h-1zM839 515h1v2h-1zM851 515h1v2h-1zM862 515h1v2h-1zM873 515h1v2h-1zM885 515h1v2h-1zM896 515h1v2h-1zM907 515h1v2h-1zM919 515h2v2h-2zM930 515h1v2h-1zM942 515h1v2h-1zM953 515h1v2h-1zM964 515h1v2h-1zM42 528h1v1h-1zM54 528h1v1h-1zM65 528h1v1h-1zM77 528h1v1h-1zM88 528h1v1h-1zM99 528h1v1h-1zM111 528h1v1h-1zM122 528h2v1h-2zM133 528h1v1h-1zM145 528h1v1h-1zM156 528h1v1h-1zM168 528h1v1h-1zM179 528h1v1h-1zM190 528h1v1h-1zM202 528h1v1h-1zM213 528h1v1h-1zM225 528h1v1h-1zM236 528h2v1h-2zM247 528h1v1h-1zM259 528h1v1h-1zM270 528h1v1h-1zM281 528h1v1h-1zM293 528h1v1h-1zM304 528h1v1h-1zM316 528h1v1h-1zM327 528h1v1h-1zM338 528h1v1h-1zM350 528h2v1h-2zM361 528h1v1h-1zM372 528h1v1h-1zM384 528h1v1h-1zM395 528h1v1h-1zM407 528h1v1h-1zM418 528h1v1h-1zM429 528h1v1h-1zM441 528h1v1h-1zM452 528h1v1h-1zM464 528h2v1h-2zM475 528h1v1h-1zM486 528h1v1h-1zM498 528h1v1h-1zM509 528h1v1h-1zM520 528h1v1h-1zM532 528h1v1h-1zM543 528h1v1h-1zM555 528h1v1h-1zM566 528h1v1h-1zM577 528h2v1h-2zM589 528h1v1h-1zM600 528h1v1h-1zM612 528h1v1h-1zM623 528h1v1h-1zM634 528h1v1h-1zM646 528h1v1h-1zM657 528h1v1h-1zM668 528h1v1h-1zM680 528h1v1h-1zM691 528h2v1h-2zM703 528h1v1h-1zM714 528h1v1h-1zM725 528h1v1h-1zM737 528h1v1h-1zM748 528h1v1h-1zM759 528h1v1h-1zM771 528h1v1h-1zM782 528h1v1h-1zM794 528h1v1h-1zM805 528h2v1h-2zM816 528h1v1h-1zM828 528h1v1h-1zM839 528h1v1h-1zM851 528h1v1h-1zM862 528h1v1h-1zM873 528h1v1h-1zM885 528h1v1h-1zM896 528h1v1h-1zM907 528h1v1h-1zM919 528h2v1h-2zM930 528h1v1h-1zM942 528h1v1h-1zM953 528h1v1h-1zM964 528h1v1h-1zM42 539h1v1h-1zM54 539h1v1h-1zM65 539h1v1h-1zM77 539h1v1h-1zM88 539h1v1h-1zM99 539h1v1h-1zM111 539h1v1h-1zM122 539h2v1h-2zM133 539h1v1h-1zM145 539h1v1h-1zM156 539h1v1h-1zM168 539h1v1h-1zM179 539h1v1h-1zM190 539h1v1h-1zM202 539h1v1h-1zM213 539h1v1h-1zM225 539h1v1h-1zM236 539h2v1h-2zM247 539h1v1h-1zM259 539h1v1h-1zM270 539h1v1h-1zM281 539h1v1h-1zM293 539h1v1h-1zM304 539h1v1h-1zM316 539h1v1h-1zM327 539h1v1h-1zM338 539h1v1h-1zM350 539h2v1h-2zM361 539h1v1h-1zM372 539h1v1h-1zM384 539h1v1h-1zM395 539h1v1h-1zM407 539h1v1h-1zM418 539h1v1h-1zM429 539h1v1h-1zM441 539h1v1h-1zM452 539h1v1h-1zM464 539h2v1h-2zM475 539h1v1h-1zM486 539h1v1h-1zM498 539h1v1h-1zM509 539h1v1h-1zM520 539h1v1h-1zM532 539h1v1h-1zM543 539h1v1h-1zM555 539h1v1h-1zM566 539h1v1h-1zM577 539h2v1h-2zM589 539h1v1h-1zM600 539h1v1h-1zM612 539h1v1h-1zM623 539h1v1h-1zM634 539h1v1h-1zM646 539h1v1h-1zM657 539h1v1h-1zM668 539h1v1h-1zM680 539h1v1h-1zM691 539h2v1h-2zM703 539h1v1h-1zM714 539h1v1h-1zM725 539h1v1h-1zM737 539h1v1h-1zM748 539h1v1h-1zM759 539h1v1h-1zM771 539h1v1h-1zM782 539h1v1h-1zM794 539h1v1h-1zM805 539h2v1h-2zM816 539h1v1h-1zM828 539h1v1h-1zM839 539h1v1h-1zM851 539h1v1h-1zM862 539h1v1h-1zM873 539h1v1h-1zM885 539h1v1h-1zM896 539h1v1h-1zM907 539h1v1h-1zM919 539h2v1h-2zM930 539h1v1h-1zM942 539h1v1h-1zM953 539h1v1h-1zM964 539h1v1h-1zM42 550h1v1h-1zM54 550h1v1h-1zM65 550h1v1h-1zM77 550h1v1h-1zM88 550h1v1h-1zM99 550h1v1h-1zM111 550h1v1h-1zM122 550h2v1h-2zM133 550h1v1h-1zM145 550h1v1h-1zM156 550h1v1h-1zM168 550h1v1h-1zM179 550h1v1h-1zM190 550h1v1h-1zM202 550h1v1h-1zM213 550h1v1h-1zM225 550h1v1h-1zM236 550h2v1h-2zM247 550h1v1h-1zM259 550h1v1h-1zM270 550h1v1h-1zM281 550h1v1h-1zM293 550h1v1h-1zM304 550h1v1h-1zM316 550h1v1h-1zM327 550h1v1h-1zM338 550h1v1h-1zM350 550h2v1h-2zM361 550h1v1h-1zM372 550h1v1h-1zM384 550h1v1h-1zM395 550h1v1h-1zM407 550h1v1h-1zM418 550h1v1h-1zM429 550h1v1h-1zM441 550h1v1h-1zM452 550h1v1h-1zM464 550h2v1h-2zM475 550h1v1h-1zM486 550h1v1h-1zM498 550h1v1h-1zM509 550h1v1h-1zM520 550h1v1h-1zM532 550h1v1h-1zM543 550h1v1h-1zM555 550h1v1h-1zM566 550h1v1h-1zM577 550h2v1h-2zM589 550h1v1h-1zM600 550h1v1h-1zM612 550h1v1h-1zM623 550h1v1h-1zM634 550h1v1h-1zM646 550h1v1h-1zM657 550h1v1h-1zM668 550h1v1h-1zM680 550h1v1h-1zM691 550h2v1h-2zM703 550h1v1h-1zM714 550h1v1h-1zM725 550h1v1h-1zM737 550h1v1h-1zM748 550h1v1h-1zM759 550h1v1h-1zM771 550h1v1h-1zM782 550h1v1h-1zM794 550h1v1h-1zM805 550h2v1h-2zM816 550h1v1h-1zM828 550h1v1h-1zM839 550h1v1h-1zM851 550h1v1h-1zM862 550h1v1h-1zM873 550h1v1h-1zM885 550h1v1h-1zM896 550h1v1h-1zM907 550h1v1h-1zM919 550h2v1h-2zM930 550h1v1h-1zM942 550h1v1h-1zM953 550h1v1h-1zM964 550h1v1h-1zM42 562h1v1h-1zM54 562h1v1h-1zM65 562h1v1h-1zM77 562h1v1h-1zM88 562h1v1h-1zM99 562h1v1h-1zM111 562h1v1h-1zM122 562h2v1h-2zM133 562h1v1h-1zM145 562h1v1h-1zM156 562h1v1h-1zM168 562h1v1h-1zM179 562h1v1h-1zM190 562h1v1h-1zM202 562h1v1h-1zM213 562h1v1h-1zM225 562h1v1h-1zM236 562h2v1h-2zM247 562h1v1h-1zM259 562h1v1h-1zM270 562h1v1h-1zM281 562h1v1h-1zM293 562h1v1h-1zM304 562h1v1h-1zM316 562h1v1h-1zM327 562h1v1h-1zM338 562h1v1h-1zM350 562h2v1h-2zM361 562h1v1h-1zM372 562h1v1h-1zM384 562h1v1h-1zM395 562h1v1h-1zM407 562h1v1h-1zM418 562h1v1h-1zM429 562h1v1h-1zM441 562h1v1h-1zM452 562h1v1h-1zM464 562h2v1h-2zM475 562h1v1h-1zM486 562h1v1h-1zM498 562h1v1h-1zM509 562h1v1h-1zM520 562h1v1h-1zM532 562h1v1h-1zM543 562h1v1h-1zM555 562h1v1h-1zM566 562h1v1h-1zM577 562h2v1h-2zM589 562h1v1h-1zM600 562h1v1h-1zM612 562h1v1h-1zM623 562h1v1h-1zM634 562h1v1h-1zM646 562h1v1h-1zM657 562h1v1h-1zM668 562h1v1h-1zM680 562h1v1h-1zM691 562h2v1h-2zM703 562h1v1h-1zM714 562h1v1h-1zM725 562h1v1h-1zM737 562h1v1h-1zM748 562h1v1h-1zM759 562h1v1h-1zM771 562h1v1h-1zM782 562h1v1h-1zM794 562h1v1h-1zM805 562h2v1h-2zM816 562h1v1h-1zM828 562h1v1h-1zM839 562h1v1h-1zM851 562h1v1h-1zM862 562h1v1h-1zM873 562h1v1h-1zM885 562h1v1h-1zM896 562h1v1h-1zM907 562h1v1h-1zM919 562h2v1h-2zM930 562h1v1h-1zM942 562h1v1h-1zM953 562h1v1h-1zM964 562h1v1h-1zM42 573h1v1h-1zM54 573h1v1h-1zM65 573h1v1h-1zM77 573h1v1h-1zM88 573h1v1h-1zM99 573h1v1h-1zM111 573h1v1h-1zM122 573h2v1h-2zM133 573h1v1h-1zM145 573h1v1h-1zM156 573h1v1h-1zM168 573h1v1h-1zM179 573h1v1h-1zM190 573h1v1h-1zM202 573h1v1h-1zM213 573h1v1h-1zM225 573h1v1h-1zM236 573h2v1h-2zM247 573h1v1h-1zM259 573h1v1h-1zM270 573h1v1h-1zM281 573h1v1h-1zM293 573h1v1h-1zM304 573h1v1h-1zM316 573h1v1h-1zM327 573h1v1h-1zM338 573h1v1h-1zM350 573h2v1h-2zM361 573h1v1h-1zM372 573h1v1h-1zM384 573h1v1h-1zM395 573h1v1h-1zM407 573h1v1h-1zM418 573h1v1h-1zM429 573h1v1h-1zM441 573h1v1h-1zM452 573h1v1h-1zM464 573h2v1h-2zM475 573h1v1h-1zM486 573h1v1h-1zM498 573h1v1h-1zM509 573h1v1h-1zM520 573h1v1h-1zM532 573h1v1h-1zM543 573h1v1h-1zM555 573h1v1h-1zM566 573h1v1h-1zM577 573h2v1h-2zM589 573h1v1h-1zM600 573h1v1h-1zM612 573h1v1h-1zM623 573h1v1h-1zM634 573h1v1h-1zM646 573h1v1h-1zM657 573h1v1h-1zM668 573h1v1h-1zM680 573h1v1h-1zM691 573h2v1h-2zM703 573h1v1h-1zM714 573h1v1h-1zM725 573h1v1h-1zM737 573h1v1h-1zM748 573h1v1h-1zM759 573h1v1h-1zM771 573h1v1h-1zM782 573h1v1h-1zM794 573h1v1h-1zM805 573h2v1h-2zM816 573h1v1h-1zM828 573h1v1h-1zM839 573h1v1h-1zM851 573h1v1h-1zM862 573h1v1h-1zM873 573h1v1h-1zM885 573h1v1h-1zM896 573h1v1h-1zM907 573h1v1h-1zM919 573h2v1h-2zM930 573h1v1h-1zM942 573h1v1h-1zM953 573h1v1h-1zM964 573h1v1h-1zM42 584h1v1h-1zM54 584h1v1h-1zM65 584h1v1h-1zM77 584h1v1h-1zM88 584h1v1h-1zM99 584h1v1h-1zM111 584h1v1h-1zM122 584h2v1h-2zM133 584h1v1h-1zM145 584h1v1h-1zM156 584h1v1h-1zM168 584h1v1h-1zM179 584h1v1h-1zM190 584h1v1h-1zM202 584h1v1h-1zM213 584h1v1h-1zM225 584h1v1h-1zM236 584h2v1h-2zM247 584h1v1h-1zM259 584h1v1h-1zM270 584h1v1h-1zM281 584h1v1h-1zM293 584h1v1h-1zM304 584h1v1h-1zM316 584h1v1h-1zM327 584h1v1h-1zM338 584h1v1h-1zM350 584h2v1h-2zM361 584h1v1h-1zM372 584h1v1h-1zM384 584h1v1h-1zM395 584h1v1h-1zM407 584h1v1h-1zM418 584h1v1h-1zM429 584h1v1h-1zM441 584h1v1h-1zM452 584h1v1h-1zM464 584h2v1h-2zM475 584h1v1h-1zM486 584h1v1h-1zM498 584h1v1h-1zM509 584h1v1h-1zM520 584h1v1h-1zM532 584h1v1h-1zM543 584h1v1h-1zM555 584h1v1h-1zM566 584h1v1h-1zM577 584h2v1h-2zM589 584h1v1h-1zM600 584h1v1h-1zM612 584h1v1h-1zM623 584h1v1h-1zM634 584h1v1h-1zM646 584h1v1h-1zM657 584h1v1h-1zM668 584h1v1h-1zM680 584h1v1h-1zM691 584h2v1h-2zM703 584h1v1h-1zM714 584h1v1h-1zM725 584h1v1h-1zM737 584h1v1h-1zM748 584h1v1h-1zM759 584h1v1h-1zM771 584h1v1h-1zM782 584h1v1h-1zM794 584h1v1h-1zM805 584h2v1h-2zM816 584h1v1h-1zM828 584h1v1h-1zM839 584h1v1h-1zM851 584h1v1h-1zM862 584h1v1h-1zM873 584h1v1h-1zM885 584h1v1h-1zM896 584h1v1h-1zM907 584h1v1h-1zM919 584h2v1h-2zM930 584h1v1h-1zM942 584h1v1h-1zM953 584h1v1h-1zM964 584h1v1h-1zM42 596h1v1h-1zM54 596h1v1h-1zM65 596h1v1h-1zM77 596h1v1h-1zM88 596h1v1h-1zM99 596h1v1h-1zM111 596h1v1h-1zM122 596h2v1h-2zM133 596h1v1h-1zM145 596h1v1h-1zM156 596h1v1h-1zM168 596h1v1h-1zM179 596h1v1h-1zM190 596h1v1h-1zM202 596h1v1h-1zM213 596h1v1h-1zM225 596h1v1h-1zM236 596h2v1h-2zM247 596h1v1h-1zM259 596h1v1h-1zM270 596h1v1h-1zM281 596h1v1h-1zM293 596h1v1h-1zM304 596h1v1h-1zM316 596h1v1h-1zM327 596h1v1h-1zM338 596h1v1h-1zM350 596h2v1h-2zM361 596h1v1h-1zM372 596h1v1h-1zM384 596h1v1h-1zM395 596h1v1h-1zM407 596h1v1h-1zM418 596h1v1h-1zM429 596h1v1h-1zM441 596h1v1h-1zM452 596h1v1h-1zM464 596h2v1h-2zM475 596h1v1h-1zM486 596h1v1h-1zM498 596h1v1h-1zM509 596h1v1h-1zM520 596h1v1h-1zM532 596h1v1h-1zM543 596h1v1h-1zM555 596h1v1h-1zM566 596h1v1h-1zM577 596h2v1h-2zM589 596h1v1h-1zM600 596h1v1h-1zM612 596h1v1h-1zM623 596h1v1h-1zM634 596h1v1h-1zM646 596h1v1h-1zM657 596h1v1h-1zM668 596h1v1h-1zM680 596h1v1h-1zM691 596h2v1h-2zM703 596h1v1h-1zM714 596h1v1h-1zM725 596h1v1h-1zM737 596h1v1h-1zM748 596h1v1h-1zM759 596h1v1h-1zM771 596h1v1h-1zM782 596h1v1h-1zM794 596h1v1h-1zM805 596h2v1h-2zM816 596h1v1h-1zM828 596h1v1h-1zM839 596h1v1h-1zM851 596h1v1h-1zM862 596h1v1h-1zM873 596h1v1h-1zM885 596h1v1h-1zM896 596h1v1h-1zM907 596h1v1h-1zM919 596h2v1h-2zM930 596h1v1h-1zM942 596h1v1h-1zM953 596h1v1h-1zM964 596h1v1h-1zM42 607h1v1h-1zM54 607h1v1h-1zM65 607h1v1h-1zM77 607h1v1h-1zM88 607h1v1h-1zM99 607h1v1h-1zM111 607h1v1h-1zM122 607h2v1h-2zM133 607h1v1h-1zM145 607h1v1h-1zM156 607h1v1h-1zM168 607h1v1h-1zM179 607h1v1h-1zM190 607h1v1h-1zM202 607h1v1h-1zM213 607h1v1h-1zM225 607h1v1h-1zM236 607h2v1h-2zM247 607h1v1h-1zM259 607h1v1h-1zM270 607h1v1h-1zM281 607h1v1h-1zM293 607h1v1h-1zM304 607h1v1h-1zM316 607h1v1h-1zM327 607h1v1h-1zM338 607h1v1h-1zM350 607h2v1h-2zM361 607h1v1h-1zM372 607h1v1h-1zM384 607h1v1h-1zM395 607h1v1h-1zM407 607h1v1h-1zM418 607h1v1h-1zM429 607h1v1h-1zM441 607h1v1h-1zM452 607h1v1h-1zM464 607h2v1h-2zM475 607h1v1h-1zM486 607h1v1h-1zM498 607h1v1h-1zM509 607h1v1h-1zM520 607h1v1h-1zM532 607h1v1h-1zM543 607h1v1h-1zM555 607h1v1h-1zM566 607h1v1h-1zM577 607h2v1h-2zM589 607h1v1h-1zM600 607h1v1h-1zM612 607h1v1h-1zM623 607h1v1h-1zM634 607h1v1h-1zM646 607h1v1h-1zM657 607h1v1h-1zM668 607h1v1h-1zM680 607h1v1h-1zM691 607h2v1h-2zM703 607h1v1h-1zM714 607h1v1h-1zM725 607h1v1h-1zM737 607h1v1h-1zM748 607h1v1h-1zM759 607h1v1h-1zM771 607h1v1h-1zM782 607h1v1h-1zM794 607h1v1h-1zM805 607h2v1h-2zM816 607h1v1h-1zM828 607h1v1h-1zM839 607h1v1h-1zM851 607h1v1h-1zM862 607h1v1h-1zM873 607h1v1h-1zM885 607h1v1h-1zM896 607h1v1h-1zM907 607h1v1h-1zM919 607h2v1h-2zM930 607h1v1h-1zM942 607h1v1h-1zM953 607h1v1h-1zM964 607h1v1h-1zM42 619h1v1h-1zM54 619h1v1h-1zM65 619h1v1h-1zM77 619h1v1h-1zM88 619h1v1h-1zM99 619h1v1h-1zM111 619h1v1h-1zM122 619h2v1h-2zM133 619h1v1h-1zM145 619h1v1h-1zM156 619h1v1h-1zM168 619h1v1h-1zM179 619h1v1h-1zM190 619h1v1h-1zM202 619h1v1h-1zM213 619h1v1h-1zM225 619h1v1h-1zM236 619h2v1h-2zM247 619h1v1h-1zM259 619h1v1h-1zM270 619h1v1h-1zM281 619h1v1h-1zM293 619h1v1h-1zM304 619h1v1h-1zM316 619h1v1h-1zM327 619h1v1h-1zM338 619h1v1h-1zM350 619h2v1h-2zM361 619h1v1h-1zM372 619h1v1h-1zM384 619h1v1h-1zM395 619h1v1h-1zM407 619h1v1h-1zM418 619h1v1h-1zM429 619h1v1h-1zM441 619h1v1h-1zM452 619h1v1h-1zM464 619h2v1h-2zM475 619h1v1h-1zM486 619h1v1h-1zM498 619h1v1h-1zM509 619h1v1h-1zM520 619h1v1h-1zM532 619h1v1h-1zM543 619h1v1h-1zM555 619h1v1h-1zM566 619h1v1h-1zM577 619h2v1h-2zM589 619h1v1h-1zM600 619h1v1h-1zM612 619h1v1h-1zM623 619h1v1h-1zM634 619h1v1h-1zM646 619h1v1h-1zM657 619h1v1h-1zM668 619h1v1h-1zM680 619h1v1h-1zM691 619h2v1h-2zM703 619h1v1h-1zM714 619h1v1h-1zM725 619h1v1h-1zM737 619h1v1h-1zM748 619h1v1h-1zM759 619h1v1h-1zM771 619h1v1h-1zM782 619h1v1h-1zM794 619h1v1h-1zM805 619h2v1h-2zM816 619h1v1h-1zM828 619h1v1h-1zM839 619h1v1h-1zM851 619h1v1h-1zM862 619h1v1h-1zM873 619h1v1h-1zM885 619h1v1h-1zM896 619h1v1h-1zM907 619h1v1h-1zM919 619h2v1h-2zM930 619h1v1h-1zM942 619h1v1h-1zM953 619h1v1h-1zM964 619h1v1h-1zM42 629h1v2h-1zM54 629h1v2h-1zM65 629h1v2h-1zM77 629h1v2h-1zM88 629h1v2h-1zM99 629h1v2h-1zM111 629h1v2h-1zM122 629h2v2h-2zM133 629h1v2h-1zM145 629h1v2h-1zM156 629h1v2h-1zM168 629h1v2h-1zM179 629h1v2h-1zM190 629h1v2h-1zM202 629h1v2h-1zM213 629h1v2h-1zM225 629h1v2h-1zM236 629h2v2h-2zM247 629h1v2h-1zM259 629h1v2h-1zM270 629h1v2h-1zM281 629h1v2h-1zM293 629h1v2h-1zM304 629h1v2h-1zM316 629h1v2h-1zM327 629h1v2h-1zM338 629h1v2h-1zM350 629h2v2h-2zM361 629h1v2h-1zM372 629h1v2h-1zM384 629h1v2h-1zM395 629h1v2h-1zM407 629h1v2h-1zM418 629h1v2h-1zM429 629h1v2h-1zM441 629h1v2h-1zM452 629h1v2h-1zM464 629h2v2h-2zM475 629h1v2h-1zM486 629h1v2h-1zM498 629h1v2h-1zM509 629h1v2h-1zM520 629h1v2h-1zM532 629h1v2h-1zM543 629h1v2h-1zM555 629h1v2h-1zM566 629h1v2h-1zM577 629h2v2h-2zM589 629h1v2h-1zM600 629h1v2h-1zM612 629h1v2h-1zM623 629h1v2h-1zM634 629h1v2h-1zM646 629h1v2h-1zM657 629h1v2h-1zM668 629h1v2h-1zM680 629h1v2h-1zM691 629h2v2h-2zM703 629h1v2h-1zM714 629h1v2h-1zM725 629h1v2h-1zM737 629h1v2h-1zM748 629h1v2h-1zM759 629h1v2h-1zM771 629h1v2h-1zM782 629h1v2h-1zM794 629h1v2h-1zM805 629h2v2h-2zM816 629h1v2h-1zM828 629h1v2h-1zM839 629h1v2h-1zM851 629h1v2h-1zM862 629h1v2h-1zM873 629h1v2h-1zM885 629h1v2h-1zM896 629h1v2h-1zM907 629h1v2h-1zM919 629h2v2h-2zM930 629h1v2h-1zM942 629h1v2h-1zM953 629h1v2h-1zM964 629h1v2h-1zM42 641h1v1h-1zM54 641h1v1h-1zM65 641h1v1h-1zM77 641h1v1h-1zM88 641h1v1h-1zM99 641h1v1h-1zM111 641h1v1h-1zM122 641h2v1h-2zM133 641h1v1h-1zM145 641h1v1h-1zM156 641h1v1h-1zM168 641h1v1h-1zM179 641h1v1h-1zM190 641h1v1h-1zM202 641h1v1h-1zM213 641h1v1h-1zM225 641h1v1h-1zM236 641h2v1h-2zM247 641h1v1h-1zM259 641h1v1h-1zM270 641h1v1h-1zM281 641h1v1h-1zM293 641h1v1h-1zM304 641h1v1h-1zM316 641h1v1h-1zM327 641h1v1h-1zM338 641h1v1h-1zM350 641h2v1h-2zM361 641h1v1h-1zM372 641h1v1h-1zM384 641h1v1h-1zM395 641h1v1h-1zM407 641h1v1h-1zM418 641h1v1h-1zM429 641h1v1h-1zM441 641h1v1h-1zM452 641h1v1h-1zM464 641h2v1h-2zM475 641h1v1h-1zM486 641h1v1h-1zM498 641h1v1h-1zM509 641h1v1h-1zM520 641h1v1h-1zM532 641h1v1h-1zM543 641h1v1h-1zM555 641h1v1h-1zM566 641h1v1h-1zM577 641h2v1h-2zM589 641h1v1h-1zM600 641h1v1h-1zM612 641h1v1h-1zM623 641h1v1h-1zM634 641h1v1h-1zM646 641h1v1h-1zM657 641h1v1h-1zM668 641h1v1h-1zM680 641h1v1h-1zM691 641h2v1h-2zM703 641h1v1h-1zM714 641h1v1h-1zM725 641h1v1h-1zM737 641h1v1h-1zM748 641h1v1h-1zM759 641h1v1h-1zM771 641h1v1h-1zM782 641h1v1h-1zM794 641h1v1h-1zM805 641h2v1h-2zM816 641h1v1h-1zM828 641h1v1h-1zM839 641h1v1h-1zM851 641h1v1h-1zM862 641h1v1h-1zM873 641h1v1h-1zM885 641h1v1h-1zM896 641h1v1h-1zM907 641h1v1h-1zM919 641h2v1h-2zM930 641h1v1h-1zM942 641h1v1h-1zM953 641h1v1h-1zM964 641h1v1h-1zM42 653h1v1h-1zM54 653h1v1h-1zM65 653h1v1h-1zM77 653h1v1h-1zM88 653h1v1h-1zM99 653h1v1h-1zM111 653h1v1h-1zM122 653h2v1h-2zM133 653h1v1h-1zM145 653h1v1h-1zM156 653h1v1h-1zM168 653h1v1h-1zM179 653h1v1h-1zM190 653h1v1h-1zM202 653h1v1h-1zM213 653h1v1h-1zM225 653h1v1h-1zM236 653h2v1h-2zM247 653h1v1h-1zM259 653h1v1h-1zM270 653h1v1h-1zM281 653h1v1h-1zM293 653h1v1h-1zM304 653h1v1h-1zM316 653h1v1h-1zM327 653h1v1h-1zM338 653h1v1h-1zM350 653h2v1h-2zM361 653h1v1h-1zM372 653h1v1h-1zM384 653h1v1h-1zM395 653h1v1h-1zM407 653h1v1h-1zM418 653h1v1h-1zM429 653h1v1h-1zM441 653h1v1h-1zM452 653h1v1h-1zM464 653h2v1h-2zM475 653h1v1h-1zM486 653h1v1h-1zM498 653h1v1h-1zM509 653h1v1h-1zM520 653h1v1h-1zM532 653h1v1h-1zM543 653h1v1h-1zM555 653h1v1h-1zM566 653h1v1h-1zM577 653h2v1h-2zM589 653h1v1h-1zM600 653h1v1h-1zM612 653h1v1h-1zM623 653h1v1h-1zM634 653h1v1h-1zM646 653h1v1h-1zM657 653h1v1h-1zM668 653h1v1h-1zM680 653h1v1h-1zM691 653h2v1h-2zM703 653h1v1h-1zM714 653h1v1h-1zM725 653h1v1h-1zM737 653h1v1h-1zM748 653h1v1h-1zM759 653h1v1h-1zM771 653h1v1h-1zM782 653h1v1h-1zM794 653h1v1h-1zM805 653h2v1h-2zM816 653h1v1h-1zM828 653h1v1h-1zM839 653h1v1h-1zM851 653h1v1h-1zM862 653h1v1h-1zM873 653h1v1h-1zM885 653h1v1h-1zM896 653h1v1h-1zM907 653h1v1h-1zM919 653h2v1h-2zM930 653h1v1h-1zM942 653h1v1h-1zM953 653h1v1h-1zM964 653h1v1h-1zM42 664h1v1h-1zM54 664h1v1h-1zM65 664h1v1h-1zM77 664h1v1h-1zM88 664h1v1h-1zM99 664h1v1h-1zM111 664h1v1h-1zM122 664h2v1h-2zM133 664h1v1h-1zM145 664h1v1h-1zM156 664h1v1h-1zM168 664h1v1h-1zM179 664h1v1h-1zM190 664h1v1h-1zM202 664h1v1h-1zM213 664h1v1h-1zM225 664h1v1h-1zM236 664h2v1h-2zM247 664h1v1h-1zM259 664h1v1h-1zM270 664h1v1h-1zM281 664h1v1h-1zM293 664h1v1h-1zM304 664h1v1h-1zM316 664h1v1h-1zM327 664h1v1h-1zM338 664h1v1h-1zM350 664h2v1h-2zM361 664h1v1h-1zM372 664h1v1h-1zM384 664h1v1h-1zM395 664h1v1h-1zM407 664h1v1h-1zM418 664h1v1h-1zM429 664h1v1h-1zM441 664h1v1h-1zM452 664h1v1h-1zM464 664h2v1h-2zM475 664h1v1h-1zM486 664h1v1h-1zM498 664h1v1h-1zM509 664h1v1h-1zM520 664h1v1h-1zM532 664h1v1h-1zM543 664h1v1h-1zM555 664h1v1h-1zM566 664h1v1h-1zM577 664h2v1h-2zM589 664h1v1h-1zM600 664h1v1h-1zM612 664h1v1h-1zM623 664h1v1h-1zM634 664h1v1h-1zM646 664h1v1h-1zM657 664h1v1h-1zM668 664h1v1h-1zM680 664h1v1h-1zM691 664h2v1h-2zM703 664h1v1h-1zM714 664h1v1h-1zM725 664h1v1h-1zM737 664h1v1h-1zM748 664h1v1h-1zM759 664h1v1h-1zM771 664h1v1h-1zM782 664h1v1h-1zM794 664h1v1h-1zM805 664h2v1h-2zM816 664h1v1h-1zM828 664h1v1h-1zM839 664h1v1h-1zM851 664h1v1h-1zM862 664h1v1h-1zM873 664h1v1h-1zM885 664h1v1h-1zM896 664h1v1h-1zM907 664h1v1h-1zM919 664h2v1h-2zM930 664h1v1h-1zM942 664h1v1h-1zM953 664h1v1h-1zM964 664h1v1h-1zM42 675h1v1h-1zM54 675h1v1h-1zM65 675h1v1h-1zM77 675h1v1h-1zM88 675h1v1h-1zM99 675h1v1h-1zM111 675h1v1h-1zM122 675h2v1h-2zM133 675h1v1h-1zM145 675h1v1h-1zM156 675h1v1h-1zM168 675h1v1h-1zM179 675h1v1h-1zM190 675h1v1h-1zM202 675h1v1h-1zM213 675h1v1h-1zM225 675h1v1h-1zM236 675h2v1h-2zM247 675h1v1h-1zM259 675h1v1h-1zM270 675h1v1h-1zM281 675h1v1h-1zM293 675h1v1h-1zM304 675h1v1h-1zM316 675h1v1h-1zM327 675h1v1h-1zM338 675h1v1h-1zM350 675h2v1h-2zM361 675h1v1h-1zM372 675h1v1h-1zM384 675h1v1h-1zM395 675h1v1h-1zM407 675h1v1h-1zM418 675h1v1h-1zM429 675h1v1h-1zM441 675h1v1h-1zM452 675h1v1h-1zM464 675h2v1h-2zM475 675h1v1h-1zM486 675h1v1h-1zM498 675h1v1h-1zM509 675h1v1h-1zM520 675h1v1h-1zM532 675h1v1h-1zM543 675h1v1h-1zM555 675h1v1h-1zM566 675h1v1h-1zM577 675h2v1h-2zM589 675h1v1h-1zM600 675h1v1h-1zM612 675h1v1h-1zM623 675h1v1h-1zM634 675h1v1h-1zM646 675h1v1h-1zM657 675h1v1h-1zM668 675h1v1h-1zM680 675h1v1h-1zM691 675h2v1h-2zM703 675h1v1h-1zM714 675h1v1h-1zM725 675h1v1h-1zM737 675h1v1h-1zM748 675h1v1h-1zM759 675h1v1h-1zM771 675h1v1h-1zM782 675h1v1h-1zM794 675h1v1h-1zM805 675h2v1h-2zM816 675h1v1h-1zM828 675h1v1h-1zM839 675h1v1h-1zM851 675h1v1h-1zM862 675h1v1h-1zM873 675h1v1h-1zM885 675h1v1h-1zM896 675h1v1h-1zM907 675h1v1h-1zM919 675h2v1h-2zM930 675h1v1h-1zM942 675h1v1h-1zM953 675h1v1h-1zM964 675h1v1h-1zM42 687h1v1h-1zM54 687h1v1h-1zM65 687h1v1h-1zM77 687h1v1h-1zM88 687h1v1h-1zM99 687h1v1h-1zM111 687h1v1h-1zM122 687h2v1h-2zM133 687h1v1h-1zM145 687h1v1h-1zM156 687h1v1h-1zM168 687h1v1h-1zM179 687h1v1h-1zM190 687h1v1h-1zM202 687h1v1h-1zM213 687h1v1h-1zM225 687h1v1h-1zM236 687h2v1h-2zM247 687h1v1h-1zM259 687h1v1h-1zM270 687h1v1h-1zM281 687h1v1h-1zM293 687h1v1h-1zM304 687h1v1h-1zM316 687h1v1h-1zM327 687h1v1h-1zM338 687h1v1h-1zM350 687h2v1h-2zM361 687h1v1h-1zM372 687h1v1h-1zM384 687h1v1h-1zM395 687h1v1h-1zM407 687h1v1h-1zM418 687h1v1h-1zM429 687h1v1h-1zM441 687h1v1h-1zM452 687h1v1h-1zM464 687h2v1h-2zM475 687h1v1h-1zM486 687h1v1h-1zM498 687h1v1h-1zM509 687h1v1h-1zM520 687h1v1h-1zM532 687h1v1h-1zM543 687h1v1h-1zM555 687h1v1h-1zM566 687h1v1h-1zM577 687h2v1h-2zM589 687h1v1h-1zM600 687h1v1h-1zM612 687h1v1h-1zM623 687h1v1h-1zM634 687h1v1h-1zM646 687h1v1h-1zM657 687h1v1h-1zM668 687h1v1h-1zM680 687h1v1h-1zM691 687h2v1h-2zM703 687h1v1h-1zM714 687h1v1h-1zM725 687h1v1h-1zM737 687h1v1h-1zM748 687h1v1h-1zM759 687h1v1h-1zM771 687h1v1h-1zM782 687h1v1h-1zM794 687h1v1h-1zM805 687h2v1h-2zM816 687h1v1h-1zM828 687h1v1h-1zM839 687h1v1h-1zM851 687h1v1h-1zM862 687h1v1h-1zM873 687h1v1h-1zM885 687h1v1h-1zM896 687h1v1h-1zM907 687h1v1h-1zM919 687h2v1h-2zM930 687h1v1h-1zM942 687h1v1h-1zM953 687h1v1h-1zM964 687h1v1h-1zM42 698h1v1h-1zM54 698h1v1h-1zM65 698h1v1h-1zM77 698h1v1h-1zM88 698h1v1h-1zM99 698h1v1h-1zM111 698h1v1h-1zM122 698h2v1h-2zM133 698h1v1h-1zM145 698h1v1h-1zM156 698h1v1h-1zM168 698h1v1h-1zM179 698h1v1h-1zM190 698h1v1h-1zM202 698h1v1h-1zM213 698h1v1h-1zM225 698h1v1h-1zM236 698h2v1h-2zM247 698h1v1h-1zM259 698h1v1h-1zM270 698h1v1h-1zM281 698h1v1h-1zM293 698h1v1h-1zM304 698h1v1h-1zM316 698h1v1h-1zM327 698h1v1h-1zM338 698h1v1h-1zM350 698h2v1h-2zM361 698h1v1h-1zM372 698h1v1h-1zM384 698h1v1h-1zM395 698h1v1h-1zM407 698h1v1h-1zM418 698h1v1h-1zM429 698h1v1h-1zM441 698h1v1h-1zM452 698h1v1h-1zM464 698h2v1h-2zM475 698h1v1h-1zM486 698h1v1h-1zM498 698h1v1h-1zM509 698h1v1h-1zM520 698h1v1h-1zM532 698h1v1h-1zM543 698h1v1h-1zM555 698h1v1h-1zM566 698h1v1h-1zM577 698h2v1h-2zM589 698h1v1h-1zM600 698h1v1h-1zM612 698h1v1h-1zM623 698h1v1h-1zM634 698h1v1h-1zM646 698h1v1h-1zM657 698h1v1h-1zM668 698h1v1h-1zM680 698h1v1h-1zM691 698h2v1h-2zM703 698h1v1h-1zM714 698h1v1h-1zM725 698h1v1h-1zM737 698h1v1h-1zM748 698h1v1h-1zM759 698h1v1h-1zM771 698h1v1h-1zM782 698h1v1h-1zM794 698h1v1h-1zM805 698h2v1h-2zM816 698h1v1h-1zM828 698h1v1h-1zM839 698h1v1h-1zM851 698h1v1h-1zM862 698h1v1h-1zM873 698h1v1h-1zM885 698h1v1h-1zM896 698h1v1h-1zM907 698h1v1h-1zM919 698h2v1h-2zM930 698h1v1h-1zM942 698h1v1h-1zM953 698h1v1h-1zM964 698h1v1h-1zM42 710h1v1h-1zM54 710h1v1h-1zM65 710h1v1h-1zM77 710h1v1h-1zM88 710h1v1h-1zM99 710h1v1h-1zM111 710h1v1h-1zM122 710h2v1h-2zM133 710h1v1h-1zM145 710h1v1h-1zM156 710h1v1h-1zM168 710h1v1h-1zM179 710h1v1h-1zM190 710h1v1h-1zM202 710h1v1h-1zM213 710h1v1h-1zM225 710h1v1h-1zM236 710h2v1h-2zM247 710h1v1h-1zM259 710h1v1h-1zM270 710h1v1h-1zM281 710h1v1h-1zM293 710h1v1h-1zM304 710h1v1h-1zM316 710h1v1h-1zM327 710h1v1h-1zM338 710h1v1h-1zM350 710h2v1h-2zM361 710h1v1h-1zM372 710h1v1h-1zM384 710h1v1h-1zM395 710h1v1h-1zM407 710h1v1h-1zM418 710h1v1h-1zM429 710h1v1h-1zM441 710h1v1h-1zM452 710h1v1h-1zM464 710h2v1h-2zM475 710h1v1h-1zM486 710h1v1h-1zM498 710h1v1h-1zM509 710h1v1h-1zM520 710h1v1h-1zM532 710h1v1h-1zM543 710h1v1h-1zM555 710h1v1h-1zM566 710h1v1h-1zM577 710h2v1h-2zM589 710h1v1h-1zM600 710h1v1h-1zM612 710h1v1h-1zM623 710h1v1h-1zM634 710h1v1h-1zM646 710h1v1h-1zM657 710h1v1h-1zM668 710h1v1h-1zM680 710h1v1h-1zM691 710h2v1h-2zM703 710h1v1h-1zM714 710h1v1h-1zM725 710h1v1h-1zM737 710h1v1h-1zM748 710h1v1h-1zM759 710h1v1h-1zM771 710h1v1h-1zM782 710h1v1h-1zM794 710h1v1h-1zM805 710h2v1h-2zM816 710h1v1h-1zM828 710h1v1h-1zM839 710h1v1h-1zM851 710h1v1h-1zM862 710h1v1h-1zM873 710h1v1h-1zM885 710h1v1h-1zM896 710h1v1h-1zM907 710h1v1h-1zM919 710h2v1h-2zM930 710h1v1h-1zM942 710h1v1h-1zM953 710h1v1h-1zM964 710h1v1h-1zM42 721h1v1h-1zM54 721h1v1h-1zM65 721h1v1h-1zM77 721h1v1h-1zM88 721h1v1h-1zM99 721h1v1h-1zM111 721h1v1h-1zM122 721h2v1h-2zM133 721h1v1h-1zM145 721h1v1h-1zM156 721h1v1h-1zM168 721h1v1h-1zM179 721h1v1h-1zM190 721h1v1h-1zM202 721h1v1h-1zM213 721h1v1h-1zM225 721h1v1h-1zM236 721h2v1h-2zM247 721h1v1h-1zM259 721h1v1h-1zM270 721h1v1h-1zM281 721h1v1h-1zM293 721h1v1h-1zM304 721h1v1h-1zM316 721h1v1h-1zM327 721h1v1h-1zM338 721h1v1h-1zM350 721h2v1h-2zM361 721h1v1h-1zM372 721h1v1h-1zM384 721h1v1h-1zM395 721h1v1h-1zM407 721h1v1h-1zM418 721h1v1h-1zM429 721h1v1h-1zM441 721h1v1h-1zM452 721h1v1h-1zM464 721h2v1h-2zM475 721h1v1h-1zM486 721h1v1h-1zM498 721h1v1h-1zM509 721h1v1h-1zM520 721h1v1h-1zM532 721h1v1h-1zM543 721h1v1h-1zM555 721h1v1h-1zM566 721h1v1h-1zM577 721h2v1h-2zM589 721h1v1h-1zM600 721h1v1h-1zM612 721h1v1h-1zM623 721h1v1h-1zM634 721h1v1h-1zM646 721h1v1h-1zM657 721h1v1h-1zM668 721h1v1h-1zM680 721h1v1h-1zM691 721h2v1h-2zM703 721h1v1h-1zM714 721h1v1h-1zM725 721h1v1h-1zM737 721h1v1h-1zM748 721h1v1h-1zM759 721h1v1h-1zM771 721h1v1h-1zM782 721h1v1h-1zM794 721h1v1h-1zM805 721h2v1h-2zM816 721h1v1h-1zM828 721h1v1h-1zM839 721h1v1h-1zM851 721h1v1h-1zM862 721h1v1h-1zM873 721h1v1h-1zM885 721h1v1h-1zM896 721h1v1h-1zM907 721h1v1h-1zM919 721h2v1h-2zM930 721h1v1h-1zM942 721h1v1h-1zM953 721h1v1h-1zM964 721h1v1h-1zM42 732h1v1h-1zM54 732h1v1h-1zM65 732h1v1h-1zM77 732h1v1h-1zM88 732h1v1h-1zM99 732h1v1h-1zM111 732h1v1h-1zM122 732h2v1h-2zM133 732h1v1h-1zM145 732h1v1h-1zM156 732h1v1h-1zM168 732h1v1h-1zM179 732h1v1h-1zM190 732h1v1h-1zM202 732h1v1h-1zM213 732h1v1h-1zM225 732h1v1h-1zM236 732h2v1h-2zM247 732h1v1h-1zM259 732h1v1h-1zM270 732h1v1h-1zM281 732h1v1h-1zM293 732h1v1h-1zM304 732h1v1h-1zM316 732h1v1h-1zM327 732h1v1h-1zM338 732h1v1h-1zM350 732h2v1h-2zM361 732h1v1h-1zM372 732h1v1h-1zM384 732h1v1h-1zM395 732h1v1h-1zM407 732h1v1h-1zM418 732h1v1h-1zM429 732h1v1h-1zM441 732h1v1h-1zM452 732h1v1h-1zM464 732h2v1h-2zM475 732h1v1h-1zM486 732h1v1h-1zM498 732h1v1h-1zM509 732h1v1h-1zM520 732h1v1h-1zM532 732h1v1h-1zM543 732h1v1h-1zM555 732h1v1h-1zM566 732h1v1h-1zM577 732h2v1h-2zM589 732h1v1h-1zM600 732h1v1h-1zM612 732h1v1h-1zM623 732h1v1h-1zM634 732h1v1h-1zM646 732h1v1h-1zM657 732h1v1h-1zM668 732h1v1h-1zM680 732h1v1h-1zM691 732h2v1h-2zM703 732h1v1h-1zM714 732h1v1h-1zM725 732h1v1h-1zM737 732h1v1h-1zM748 732h1v1h-1zM759 732h1v1h-1zM771 732h1v1h-1zM782 732h1v1h-1zM794 732h1v1h-1zM805 732h2v1h-2zM816 732h1v1h-1zM828 732h1v1h-1zM839 732h1v1h-1zM851 732h1v1h-1zM862 732h1v1h-1zM873 732h1v1h-1zM885 732h1v1h-1zM896 732h1v1h-1zM907 732h1v1h-1zM919 732h2v1h-2zM930 732h1v1h-1zM942 732h1v1h-1zM953 732h1v1h-1zM964 732h1v1h-1zM42 743h1v2h-1zM54 743h1v2h-1zM65 743h1v2h-1zM77 743h1v2h-1zM88 743h1v2h-1zM99 743h1v2h-1zM111 743h1v2h-1zM122 743h2v2h-2zM133 743h1v2h-1zM145 743h1v2h-1zM156 743h1v2h-1zM168 743h1v2h-1zM179 743h1v2h-1zM190 743h1v2h-1zM202 743h1v2h-1zM213 743h1v2h-1zM225 743h1v2h-1zM236 743h2v2h-2zM247 743h1v2h-1zM259 743h1v2h-1zM270 743h1v2h-1zM281 743h1v2h-1zM293 743h1v2h-1zM304 743h1v2h-1zM316 743h1v2h-1zM327 743h1v2h-1zM338 743h1v2h-1zM350 743h2v2h-2zM361 743h1v2h-1zM372 743h1v2h-1zM384 743h1v2h-1zM395 743h1v2h-1zM407 743h1v2h-1zM418 743h1v2h-1zM429 743h1v2h-1zM441 743h1v2h-1zM452 743h1v2h-1zM464 743h2v2h-2zM475 743h1v2h-1zM486 743h1v2h-1zM498 743h1v2h-1zM509 743h1v2h-1zM520 743h1v2h-1zM532 743h1v2h-1zM543 743h1v2h-1zM555 743h1v2h-1zM566 743h1v2h-1zM577 743h2v2h-2zM589 743h1v2h-1zM600 743h1v2h-1zM612 743h1v2h-1zM623 743h1v2h-1zM634 743h1v2h-1zM646 743h1v2h-1zM657 743h1v2h-1zM668 743h1v2h-1zM680 743h1v2h-1zM691 743h2v2h-2zM703 743h1v2h-1zM714 743h1v2h-1zM725 743h1v2h-1zM737 743h1v2h-1zM748 743h1v2h-1zM759 743h1v2h-1zM771 743h1v2h-1zM782 743h1v2h-1zM794 743h1v2h-1zM805 743h2v2h-2zM816 743h1v2h-1zM828 743h1v2h-1zM839 743h1v2h-1zM851 743h1v2h-1zM862 743h1v2h-1zM873 743h1v2h-1zM885 743h1v2h-1zM896 743h1v2h-1zM907 743h1v2h-1zM919 743h2v2h-2zM930 743h1v2h-1zM942 743h1v2h-1zM953 743h1v2h-1zM964 743h1v2h-1zM42 755h1v1h-1zM54 755h1v1h-1zM65 755h1v1h-1zM77 755h1v1h-1zM88 755h1v1h-1zM99 755h1v1h-1zM111 755h1v1h-1zM122 755h2v1h-2zM133 755h1v1h-1zM145 755h1v1h-1zM156 755h1v1h-1zM168 755h1v1h-1zM179 755h1v1h-1zM190 755h1v1h-1zM202 755h1v1h-1zM213 755h1v1h-1zM225 755h1v1h-1zM236 755h2v1h-2zM247 755h1v1h-1zM259 755h1v1h-1zM270 755h1v1h-1zM281 755h1v1h-1zM293 755h1v1h-1zM304 755h1v1h-1zM316 755h1v1h-1zM327 755h1v1h-1zM338 755h1v1h-1zM350 755h2v1h-2zM361 755h1v1h-1zM372 755h1v1h-1zM384 755h1v1h-1zM395 755h1v1h-1zM407 755h1v1h-1zM418 755h1v1h-1zM429 755h1v1h-1zM441 755h1v1h-1zM452 755h1v1h-1zM464 755h2v1h-2zM475 755h1v1h-1zM486 755h1v1h-1zM498 755h1v1h-1zM509 755h1v1h-1zM520 755h1v1h-1zM532 755h1v1h-1zM543 755h1v1h-1zM555 755h1v1h-1zM566 755h1v1h-1zM577 755h2v1h-2zM589 755h1v1h-1zM600 755h1v1h-1zM612 755h1v1h-1zM623 755h1v1h-1zM634 755h1v1h-1zM646 755h1v1h-1zM657 755h1v1h-1zM668 755h1v1h-1zM680 755h1v1h-1zM691 755h2v1h-2zM703 755h1v1h-1zM714 755h1v1h-1zM725 755h1v1h-1zM737 755h1v1h-1zM748 755h1v1h-1zM759 755h1v1h-1zM771 755h1v1h-1zM782 755h1v1h-1zM794 755h1v1h-1zM805 755h2v1h-2zM816 755h1v1h-1zM828 755h1v1h-1zM839 755h1v1h-1zM851 755h1v1h-1zM862 755h1v1h-1zM873 755h1v1h-1zM885 755h1v1h-1zM896 755h1v1h-1zM907 755h1v1h-1zM919 755h2v1h-2zM930 755h1v1h-1zM942 755h1v1h-1zM953 755h1v1h-1zM964 755h1v1h-1zM42 766h1v1h-1zM54 766h1v1h-1zM65 766h1v1h-1zM77 766h1v1h-1zM88 766h1v1h-1zM99 766h1v1h-1zM111 766h1v1h-1zM122 766h2v1h-2zM133 766h1v1h-1zM145 766h1v1h-1zM156 766h1v1h-1zM168 766h1v1h-1zM179 766h1v1h-1zM190 766h1v1h-1zM202 766h1v1h-1zM213 766h1v1h-1zM225 766h1v1h-1zM236 766h2v1h-2zM247 766h1v1h-1zM259 766h1v1h-1zM270 766h1v1h-1zM281 766h1v1h-1zM293 766h1v1h-1zM304 766h1v1h-1zM316 766h1v1h-1zM327 766h1v1h-1zM338 766h1v1h-1zM350 766h2v1h-2zM361 766h1v1h-1zM372 766h1v1h-1zM384 766h1v1h-1zM395 766h1v1h-1zM407 766h1v1h-1zM418 766h1v1h-1zM429 766h1v1h-1zM441 766h1v1h-1zM452 766h1v1h-1zM464 766h2v1h-2zM475 766h1v1h-1zM486 766h1v1h-1zM498 766h1v1h-1zM509 766h1v1h-1zM520 766h1v1h-1zM532 766h1v1h-1zM543 766h1v1h-1zM555 766h1v1h-1zM566 766h1v1h-1zM577 766h2v1h-2zM589 766h1v1h-1zM600 766h1v1h-1zM612 766h1v1h-1zM623 766h1v1h-1zM634 766h1v1h-1zM646 766h1v1h-1zM657 766h1v1h-1zM668 766h1v1h-1zM680 766h1v1h-1zM691 766h2v1h-2zM703 766h1v1h-1zM714 766h1v1h-1zM725 766h1v1h-1zM737 766h1v1h-1zM748 766h1v1h-1zM759 766h1v1h-1zM771 766h1v1h-1zM782 766h1v1h-1zM794 766h1v1h-1zM805 766h2v1h-2zM816 766h1v1h-1zM828 766h1v1h-1zM839 766h1v1h-1zM851 766h1v1h-1zM862 766h1v1h-1zM873 766h1v1h-1zM885 766h1v1h-1zM896 766h1v1h-1zM907 766h1v1h-1zM919 766h2v1h-2zM930 766h1v1h-1zM942 766h1v1h-1zM953 766h1v1h-1zM964 766h1v1h-1zM42 778h1v1h-1zM54 778h1v1h-1zM65 778h1v1h-1zM77 778h1v1h-1zM88 778h1v1h-1zM99 778h1v1h-1zM111 778h1v1h-1zM122 778h2v1h-2zM133 778h1v1h-1zM145 778h1v1h-1zM156 778h1v1h-1zM168 778h1v1h-1zM179 778h1v1h-1zM190 778h1v1h-1zM202 778h1v1h-1zM213 778h1v1h-1zM225 778h1v1h-1zM236 778h2v1h-2zM247 778h1v1h-1zM259 778h1v1h-1zM270 778h1v1h-1zM281 778h1v1h-1zM293 778h1v1h-1zM304 778h1v1h-1zM316 778h1v1h-1zM327 778h1v1h-1zM338 778h1v1h-1zM350 778h2v1h-2zM361 778h1v1h-1zM372 778h1v1h-1zM384 778h1v1h-1zM395 778h1v1h-1zM407 778h1v1h-1zM418 778h1v1h-1zM429 778h1v1h-1zM441 778h1v1h-1zM452 778h1v1h-1zM464 778h2v1h-2zM475 778h1v1h-1zM486 778h1v1h-1zM498 778h1v1h-1zM509 778h1v1h-1zM520 778h1v1h-1zM532 778h1v1h-1zM543 778h1v1h-1zM555 778h1v1h-1zM566 778h1v1h-1zM577 778h2v1h-2zM589 778h1v1h-1zM600 778h1v1h-1zM612 778h1v1h-1zM623 778h1v1h-1zM634 778h1v1h-1zM646 778h1v1h-1zM657 778h1v1h-1zM668 778h1v1h-1zM680 778h1v1h-1zM691 778h2v1h-2zM703 778h1v1h-1zM714 778h1v1h-1zM725 778h1v1h-1zM737 778h1v1h-1zM748 778h1v1h-1zM759 778h1v1h-1zM771 778h1v1h-1zM782 778h1v1h-1zM794 778h1v1h-1zM805 778h2v1h-2zM816 778h1v1h-1zM828 778h1v1h-1zM839 778h1v1h-1zM851 778h1v1h-1zM862 778h1v1h-1zM873 778h1v1h-1zM885 778h1v1h-1zM896 778h1v1h-1zM907 778h1v1h-1zM919 778h2v1h-2zM930 778h1v1h-1zM942 778h1v1h-1zM953 778h1v1h-1zM964 778h1v1h-1zM42 789h1v1h-1zM54 789h1v1h-1zM65 789h1v1h-1zM77 789h1v1h-1zM88 789h1v1h-1zM99 789h1v1h-1zM111 789h1v1h-1zM122 789h2v1h-2zM133 789h1v1h-1zM145 789h1v1h-1zM156 789h1v1h-1zM168 789h1v1h-1zM179 789h1v1h-1zM190 789h1v1h-1zM202 789h1v1h-1zM213 789h1v1h-1zM225 789h1v1h-1zM236 789h2v1h-2zM247 789h1v1h-1zM259 789h1v1h-1zM270 789h1v1h-1zM281 789h1v1h-1zM293 789h1v1h-1zM304 789h1v1h-1zM316 789h1v1h-1zM327 789h1v1h-1zM338 789h1v1h-1zM350 789h2v1h-2zM361 789h1v1h-1zM372 789h1v1h-1zM384 789h1v1h-1zM395 789h1v1h-1zM407 789h1v1h-1zM418 789h1v1h-1zM429 789h1v1h-1zM441 789h1v1h-1zM452 789h1v1h-1zM464 789h2v1h-2zM475 789h1v1h-1zM486 789h1v1h-1zM498 789h1v1h-1zM509 789h1v1h-1zM520 789h1v1h-1zM532 789h1v1h-1zM543 789h1v1h-1zM555 789h1v1h-1zM566 789h1v1h-1zM577 789h2v1h-2zM589 789h1v1h-1zM600 789h1v1h-1zM612 789h1v1h-1zM623 789h1v1h-1zM634 789h1v1h-1zM646 789h1v1h-1zM657 789h1v1h-1zM668 789h1v1h-1zM680 789h1v1h-1zM691 789h2v1h-2zM703 789h1v1h-1zM714 789h1v1h-1zM725 789h1v1h-1zM737 789h1v1h-1zM748 789h1v1h-1zM759 789h1v1h-1zM771 789h1v1h-1zM782 789h1v1h-1zM794 789h1v1h-1zM805 789h2v1h-2zM816 789h1v1h-1zM828 789h1v1h-1zM839 789h1v1h-1zM851 789h1v1h-1zM862 789h1v1h-1zM873 789h1v1h-1zM885 789h1v1h-1zM896 789h1v1h-1zM907 789h1v1h-1zM919 789h2v1h-2zM930 789h1v1h-1zM942 789h1v1h-1zM953 789h1v1h-1zM964 789h1v1h-1zM42 800h1v1h-1zM54 800h1v1h-1zM65 800h1v1h-1zM77 800h1v1h-1zM88 800h1v1h-1zM99 800h1v1h-1zM111 800h1v1h-1zM122 800h2v1h-2zM133 800h1v1h-1zM145 800h1v1h-1zM156 800h1v1h-1zM168 800h1v1h-1zM179 800h1v1h-1zM190 800h1v1h-1zM202 800h1v1h-1zM213 800h1v1h-1zM225 800h1v1h-1zM236 800h2v1h-2zM247 800h1v1h-1zM259 800h1v1h-1zM270 800h1v1h-1zM281 800h1v1h-1zM293 800h1v1h-1zM304 800h1v1h-1zM316 800h1v1h-1zM327 800h1v1h-1zM338 800h1v1h-1zM350 800h2v1h-2zM361 800h1v1h-1zM372 800h1v1h-1zM384 800h1v1h-1zM395 800h1v1h-1zM407 800h1v1h-1zM418 800h1v1h-1zM429 800h1v1h-1zM441 800h1v1h-1zM452 800h1v1h-1zM464 800h2v1h-2zM475 800h1v1h-1zM486 800h1v1h-1zM498 800h1v1h-1zM509 800h1v1h-1zM520 800h1v1h-1zM532 800h1v1h-1zM543 800h1v1h-1zM555 800h1v1h-1zM566 800h1v1h-1zM577 800h2v1h-2zM589 800h1v1h-1zM600 800h1v1h-1zM612 800h1v1h-1zM623 800h1v1h-1zM634 800h1v1h-1zM646 800h1v1h-1zM657 800h1v1h-1zM668 800h1v1h-1zM680 800h1v1h-1zM691 800h2v1h-2zM703 800h1v1h-1zM714 800h1v1h-1zM725 800h1v1h-1zM737 800h1v1h-1zM748 800h1v1h-1zM759 800h1v1h-1zM771 800h1v1h-1zM782 800h1v1h-1zM794 800h1v1h-1zM805 800h2v1h-2zM816 800h1v1h-1zM828 800h1v1h-1zM839 800h1v1h-1zM851 800h1v1h-1zM862 800h1v1h-1zM873 800h1v1h-1zM885 800h1v1h-1zM896 800h1v1h-1zM907 800h1v1h-1zM919 800h2v1h-2zM930 800h1v1h-1zM942 800h1v1h-1zM953 800h1v1h-1zM964 800h1v1h-1zM42 812h1v1h-1zM54 812h1v1h-1zM65 812h1v1h-1zM77 812h1v1h-1zM88 812h1v1h-1zM99 812h1v1h-1zM111 812h1v1h-1zM122 812h2v1h-2zM133 812h1v1h-1zM145 812h1v1h-1zM156 812h1v1h-1zM168 812h1v1h-1zM179 812h1v1h-1zM190 812h1v1h-1zM202 812h1v1h-1zM213 812h1v1h-1zM225 812h1v1h-1zM236 812h2v1h-2zM247 812h1v1h-1zM259 812h1v1h-1zM270 812h1v1h-1zM281 812h1v1h-1zM293 812h1v1h-1zM304 812h1v1h-1zM316 812h1v1h-1zM327 812h1v1h-1zM338 812h1v1h-1zM350 812h2v1h-2zM361 812h1v1h-1zM372 812h1v1h-1zM384 812h1v1h-1zM395 812h1v1h-1zM407 812h1v1h-1zM418 812h1v1h-1zM429 812h1v1h-1zM441 812h1v1h-1zM452 812h1v1h-1zM464 812h2v1h-2zM475 812h1v1h-1zM486 812h1v1h-1zM498 812h1v1h-1zM509 812h1v1h-1zM520 812h1v1h-1zM532 812h1v1h-1zM543 812h1v1h-1zM555 812h1v1h-1zM566 812h1v1h-1zM577 812h2v1h-2zM589 812h1v1h-1zM600 812h1v1h-1zM612 812h1v1h-1zM623 812h1v1h-1zM634 812h1v1h-1zM646 812h1v1h-1zM657 812h1v1h-1zM668 812h1v1h-1zM680 812h1v1h-1zM691 812h2v1h-2zM703 812h1v1h-1zM714 812h1v1h-1zM725 812h1v1h-1zM737 812h1v1h-1zM748 812h1v1h-1zM759 812h1v1h-1zM771 812h1v1h-1zM782 812h1v1h-1zM794 812h1v1h-1zM805 812h2v1h-2zM816 812h1v1h-1zM828 812h1v1h-1zM839 812h1v1h-1zM851 812h1v1h-1zM862 812h1v1h-1zM873 812h1v1h-1zM885 812h1v1h-1zM896 812h1v1h-1zM907 812h1v1h-1zM919 812h2v1h-2zM930 812h1v1h-1zM942 812h1v1h-1zM953 812h1v1h-1zM964 812h1v1h-1zM42 823h1v1h-1zM54 823h1v1h-1zM65 823h1v1h-1zM77 823h1v1h-1zM88 823h1v1h-1zM99 823h1v1h-1zM111 823h1v1h-1zM122 823h2v1h-2zM133 823h1v1h-1zM145 823h1v1h-1zM156 823h1v1h-1zM168 823h1v1h-1zM179 823h1v1h-1zM190 823h1v1h-1zM202 823h1v1h-1zM213 823h1v1h-1zM225 823h1v1h-1zM236 823h2v1h-2zM247 823h1v1h-1zM259 823h1v1h-1zM270 823h1v1h-1zM281 823h1v1h-1zM293 823h1v1h-1zM304 823h1v1h-1zM316 823h1v1h-1zM327 823h1v1h-1zM338 823h1v1h-1zM350 823h2v1h-2zM361 823h1v1h-1zM372 823h1v1h-1zM384 823h1v1h-1zM395 823h1v1h-1zM407 823h1v1h-1zM418 823h1v1h-1zM429 823h1v1h-1zM441 823h1v1h-1zM452 823h1v1h-1zM464 823h2v1h-2zM475 823h1v1h-1zM486 823h1v1h-1zM498 823h1v1h-1zM509 823h1v1h-1zM520 823h1v1h-1zM532 823h1v1h-1zM543 823h1v1h-1zM555 823h1v1h-1zM566 823h1v1h-1zM577 823h2v1h-2zM589 823h1v1h-1zM600 823h1v1h-1zM612 823h1v1h-1zM623 823h1v1h-1zM634 823h1v1h-1zM646 823h1v1h-1zM657 823h1v1h-1zM668 823h1v1h-1zM680 823h1v1h-1zM691 823h2v1h-2zM703 823h1v1h-1zM714 823h1v1h-1zM725 823h1v1h-1zM737 823h1v1h-1zM748 823h1v1h-1zM759 823h1v1h-1zM771 823h1v1h-1zM782 823h1v1h-1zM794 823h1v1h-1zM805 823h2v1h-2zM816 823h1v1h-1zM828 823h1v1h-1zM839 823h1v1h-1zM851 823h1v1h-1zM862 823h1v1h-1zM873 823h1v1h-1zM885 823h1v1h-1zM896 823h1v1h-1zM907 823h1v1h-1zM919 823h2v1h-2zM930 823h1v1h-1zM942 823h1v1h-1zM953 823h1v1h-1zM964 823h1v1h-1zM42 835h1v1h-1zM54 835h1v1h-1zM65 835h1v1h-1zM77 835h1v1h-1zM88 835h1v1h-1zM99 835h1v1h-1zM111 835h1v1h-1zM122 835h2v1h-2zM133 835h1v1h-1zM145 835h1v1h-1zM156 835h1v1h-1zM168 835h1v1h-1zM179 835h1v1h-1zM190 835h1v1h-1zM202 835h1v1h-1zM213 835h1v1h-1zM225 835h1v1h-1zM236 835h2v1h-2zM247 835h1v1h-1zM259 835h1v1h-1zM270 835h1v1h-1zM281 835h1v1h-1zM293 835h1v1h-1zM304 835h1v1h-1zM316 835h1v1h-1zM327 835h1v1h-1zM338 835h1v1h-1zM350 835h2v1h-2zM361 835h1v1h-1zM372 835h1v1h-1zM384 835h1v1h-1zM395 835h1v1h-1zM407 835h1v1h-1zM418 835h1v1h-1zM429 835h1v1h-1zM441 835h1v1h-1zM452 835h1v1h-1zM464 835h2v1h-2zM475 835h1v1h-1zM486 835h1v1h-1zM498 835h1v1h-1zM509 835h1v1h-1zM520 835h1v1h-1zM532 835h1v1h-1zM543 835h1v1h-1zM555 835h1v1h-1zM566 835h1v1h-1zM577 835h2v1h-2zM589 835h1v1h-1zM600 835h1v1h-1zM612 835h1v1h-1zM623 835h1v1h-1zM634 835h1v1h-1zM646 835h1v1h-1zM657 835h1v1h-1zM668 835h1v1h-1zM680 835h1v1h-1zM691 835h2v1h-2zM703 835h1v1h-1zM714 835h1v1h-1zM725 835h1v1h-1zM737 835h1v1h-1zM748 835h1v1h-1zM759 835h1v1h-1zM771 835h1v1h-1zM782 835h1v1h-1zM794 835h1v1h-1zM805 835h2v1h-2zM816 835h1v1h-1zM828 835h1v1h-1zM839 835h1v1h-1zM851 835h1v1h-1zM862 835h1v1h-1zM873 835h1v1h-1zM885 835h1v1h-1zM896 835h1v1h-1zM907 835h1v1h-1zM919 835h2v1h-2zM930 835h1v1h-1zM942 835h1v1h-1zM953 835h1v1h-1zM964 835h1v1h-1zM42 846h1v1h-1zM54 846h1v1h-1zM65 846h1v1h-1zM77 846h1v1h-1zM88 846h1v1h-1zM99 846h1v1h-1zM111 846h1v1h-1zM122 846h2v1h-2zM133 846h1v1h-1zM145 846h1v1h-1zM156 846h1v1h-1zM168 846h1v1h-1zM179 846h1v1h-1zM190 846h1v1h-1zM202 846h1v1h-1zM213 846h1v1h-1zM225 846h1v1h-1zM236 846h2v1h-2zM247 846h1v1h-1zM259 846h1v1h-1zM270 846h1v1h-1zM281 846h1v1h-1zM293 846h1v1h-1zM304 846h1v1h-1zM316 846h1v1h-1zM327 846h1v1h-1zM338 846h1v1h-1zM350 846h2v1h-2zM361 846h1v1h-1zM372 846h1v1h-1zM384 846h1v1h-1zM395 846h1v1h-1zM407 846h1v1h-1zM418 846h1v1h-1zM429 846h1v1h-1zM441 846h1v1h-1zM452 846h1v1h-1zM464 846h2v1h-2zM475 846h1v1h-1zM486 846h1v1h-1zM498 846h1v1h-1zM509 846h1v1h-1zM520 846h1v1h-1zM532 846h1v1h-1zM543 846h1v1h-1zM555 846h1v1h-1zM566 846h1v1h-1zM577 846h2v1h-2zM589 846h1v1h-1zM600 846h1v1h-1zM612 846h1v1h-1zM623 846h1v1h-1zM634 846h1v1h-1zM646 846h1v1h-1zM657 846h1v1h-1zM668 846h1v1h-1zM680 846h1v1h-1zM691 846h2v1h-2zM703 846h1v1h-1zM714 846h1v1h-1zM725 846h1v1h-1zM737 846h1v1h-1zM748 846h1v1h-1zM759 846h1v1h-1zM771 846h1v1h-1zM782 846h1v1h-1zM794 846h1v1h-1zM805 846h2v1h-2zM816 846h1v1h-1zM828 846h1v1h-1zM839 846h1v1h-1zM851 846h1v1h-1zM862 846h1v1h-1zM873 846h1v1h-1zM885 846h1v1h-1zM896 846h1v1h-1zM907 846h1v1h-1zM919 846h2v1h-2zM930 846h1v1h-1zM942 846h1v1h-1zM953 846h1v1h-1zM964 846h1v1h-1z" fill="#8e8e8e"/><rect x="111.5" y="306.5" width="797" height="358" fill="none" stroke="#d0d2cd" stroke-width="1"/><text transform="translate(209,334.2) scale(1,1.066)" font-family="Liberation Mono" font-size="17.33" fill="#f2eda1" stroke="#001023" stroke-width="0.2" >5V</text><text transform="translate(204,363.2) scale(1,1.066)" font-family="Liberation Mono" font-size="17.33" fill="#f2eda1" stroke="#001023" stroke-width="0.2" >SDA</text><text transform="translate(205,392.2) scale(1,1.066)" font-family="Liberation Mono" font-size="17.33" fill="#f2eda1" stroke="#001023" stroke-width="0.2" >SCL</text><text transform="translate(204.5,421.2) scale(1,1.066)" font-family="Liberation Mono" font-size="17.33" fill="#f2eda1" stroke="#001023" stroke-width="0.2" >ADR</text><text transform="translate(205,450.2) scale(1,1.066)" font-family="Liberation Mono" font-size="17.33" fill="#f2eda1" stroke="#001023" stroke-width="0.2" >GND</text><text transform="translate(268.4,363.7) scale(1,1.066)" font-family="Liberation Mono" font-size="17.33" fill="#f2eda1" stroke="#001023" stroke-width="0.2" >G38</text><text transform="translate(268.4,392.7) scale(1,1.066)" font-family="Liberation Mono" font-size="17.33" fill="#f2eda1" stroke="#001023" stroke-width="0.2" >G39</text><text transform="translate(328,329.5) scale(1,1.066)" font-family="Liberation Mono" font-size="17.33" fill="#f2eda1" stroke="#001023" stroke-width="0.2" >G6</text><text transform="translate(443,329.5) scale(1,1.066)" font-family="Liberation Mono" font-size="17.33" fill="#f2eda1" stroke="#001023" stroke-width="0.2" >G5</text><text transform="translate(557,329.5) scale(1,1.066)" font-family="Liberation Mono" font-size="17.33" fill="#f2eda1" stroke="#001023" stroke-width="0.2" >G5</text><text transform="translate(557,352.2) scale(1,1.066)" font-family="Liberation Mono" font-size="17.33" fill="#f2eda1" stroke="#001023" stroke-width="0.2" >G6</text><text transform="translate(669.5,328.7) scale(1,1.066)" font-family="Liberation Mono" font-size="17.33" fill="#f2eda1" stroke="#001023" stroke-width="0.2" >G7</text><text transform="translate(669.5,351.7) scale(1,1.066)" font-family="Liberation Mono" font-size="17.33" fill="#f2eda1" stroke="#001023" stroke-width="0.2" >G8</text><text transform="translate(811,435.2) scale(1,1.066)" font-family="Liberation Mono" font-size="17.33" fill="#f2eda1" stroke="#001023" stroke-width="0.2" >GND</text><text transform="translate(840,464.2) scale(1,1.066)" font-family="Liberation Mono" font-size="17.33" fill="#f2eda1" stroke="#001023" stroke-width="0.2" >3V3</text><text transform="translate(845.4,493.2) scale(1,1.066)" font-family="Liberation Mono" font-size="17.33" fill="#f2eda1" stroke="#001023" stroke-width="0.2" >G5</text><text transform="translate(845.4,522.2) scale(1,1.066)" font-family="Liberation Mono" font-size="17.33" fill="#f2eda1" stroke="#001023" stroke-width="0.2" >G6</text><text transform="translate(845.4,551.2) scale(1,1.066)" font-family="Liberation Mono" font-size="17.33" fill="#f2eda1" stroke="#001023" stroke-width="0.2" >G7</text><text transform="translate(845.4,580.2) scale(1,1.066)" font-family="Liberation Mono" font-size="17.33" fill="#f2eda1" stroke="#001023" stroke-width="0.2" >G8</text><text transform="translate(437,522.2) scale(1,1.066)" font-family="Liberation Mono" font-size="17.33" fill="#f2eda1" stroke="#001023" stroke-width="0.2" >SCL</text><text transform="translate(437,545.2) scale(1,1.066)" font-family="Liberation Mono" font-size="17.33" fill="#f2eda1" stroke="#001023" stroke-width="0.2" >SDA</text><text transform="translate(441,569.2) scale(1,1.066)" font-family="Liberation Mono" font-size="17.33" fill="#f2eda1" stroke="#001023" stroke-width="0.2" >5V</text><text transform="translate(437,591.7) scale(1,1.066)" font-family="Liberation Mono" font-size="17.33" fill="#f2eda1" stroke="#001023" stroke-width="0.2" >GND</text><text x="169.7" y="332.6" font-family="Liberation Sans" font-size="15.91" fill="#c2c2c2" textLength="46" lengthAdjust="spacingAndGlyphs">REF**</text><text x="122.3" y="345.6" font-family="Liberation Sans" font-size="15.91" fill="#c2c2c2" textLength="220" lengthAdjust="spacingAndGlyphs">MountingHole_2.2mm_M2</text><text x="122.6" y="345.6" font-family="Liberation Sans" font-size="15.91" fill="#c2c2c2" textLength="46" lengthAdjust="spacingAndGlyphs">REF**</text><text x="851.6" y="309.6" font-family="Liberation Sans" font-size="15.91" fill="#c2c2c2" textLength="46" lengthAdjust="spacingAndGlyphs">REF**</text><text x="683.9" y="344.6" font-family="Liberation Sans" font-size="15.91" fill="#c2c2c2" textLength="192" lengthAdjust="spacingAndGlyphs">MountingHole_2.2mm_M2</text><text x="851.7" y="344.6" font-family="Liberation Sans" font-size="15.91" fill="#c2c2c2" textLength="46" lengthAdjust="spacingAndGlyphs">REF**</text><text x="123" y="565.6" font-family="Liberation Sans" font-size="15.91" fill="#c2c2c2" textLength="46" lengthAdjust="spacingAndGlyphs">REF**</text><text x="123" y="636.1" font-family="Liberation Sans" font-size="15.91" fill="#c2c2c2" textLength="211.7" lengthAdjust="spacingAndGlyphs">MountingHole_2.2mm_M2</text><text x="121.5" y="636.1" font-family="Liberation Sans" font-size="15.91" fill="#c2c2c2" textLength="46" lengthAdjust="spacingAndGlyphs">REF**</text><text x="851.5" y="569.6" font-family="Liberation Sans" font-size="15.91" fill="#c2c2c2" textLength="46" lengthAdjust="spacingAndGlyphs">REF**</text><text x="677.4" y="634.6" font-family="Liberation Sans" font-size="15.91" fill="#c2c2c2" textLength="204" lengthAdjust="spacingAndGlyphs">MountingHole_2.2mm_M2</text><text x="851.5" y="634.6" font-family="Liberation Sans" font-size="15.91" fill="#c2c2c2" textLength="46" lengthAdjust="spacingAndGlyphs">REF**</text><text x="186" y="643.2" font-family="Liberation Sans" font-size="29.6" fill="#f2eda1" stroke="#001023" stroke-width="0.5" textLength="250" lengthAdjust="spacing">Sunaga Lab, Inc.</text><text transform="translate(800,345.2) scale(1,1.066)" font-family="Liberation Mono" font-size="17.33" fill="#f2eda1" stroke="#001023" stroke-width="0.2" >5V</text><path d="M191 328.7 L265.3 328.7 L305.8 369.2 L305.8 542.5 L325.5 562.2" fill="none" stroke="#c83434" stroke-width="10" stroke-linecap="round" stroke-linejoin="round"/><path d="M191 357.6 L177.5 357.6 L168.2 366.9 L168.2 527.5 L156.4 539.4 L144.5 539.4" fill="none" stroke="#c83434" stroke-width="5.5" stroke-linecap="round" stroke-linejoin="round"/><path d="M191 444.3 L249 444.3" fill="none" stroke="#c83434" stroke-width="10" stroke-linecap="round" stroke-linejoin="round"/><path d="M222 444.3 L222 568.5 L238.5 585" fill="none" stroke="#c83434" stroke-width="10" stroke-linecap="round" stroke-linejoin="round"/><path d="M372.8 322.6 L382.5 322.6 L474.2 414.3 L498.5 414.3 L567.5 345.4 L600.8 345.4" fill="none" stroke="#c83434" stroke-width="5" stroke-linecap="round" stroke-linejoin="round"/><path d="M486.9 322.6 L636 322.6 L658.5 345.1 L658.5 494.3 L723.6 559.4 L769.8 559.4" fill="none" stroke="#c83434" stroke-width="5.5" stroke-linecap="round" stroke-linejoin="round"/><path d="M600.8 345.4 L622.6 345.4 L635.3 358.1 L635.3 495 L728.8 588.5 L769.8 588.5" fill="none" stroke="#c83434" stroke-width="5.5" stroke-linecap="round" stroke-linejoin="round"/><path d="M572 368.5 L553.7 386.8 L553.7 604.8 L566.3 617.4" fill="none" stroke="#c83434" stroke-width="10" stroke-linecap="round" stroke-linejoin="round"/><path d="M714.5 322.6 L697 322.6 L679.5 340.1 L679.5 434.9 L714.6 470 L772.7 470 L794.5 491.8 L794.5 607.2 L784.3 617.4 L769.8 617.4" fill="none" stroke="#c83434" stroke-width="5.5" stroke-linecap="round" stroke-linejoin="round"/><path d="M714.5 345.4 L704.5 345.4 L691.7 358.2 L691.7 424.2 L725.8 458.3 L783.4 458.3 L806.8 481.7 L806.8 618 L778.5 646.3 L769.8 646.3" fill="none" stroke="#c83434" stroke-width="5.5" stroke-linecap="round" stroke-linejoin="round"/><path d="M191 357.6 L249 357.6" fill="none" stroke="#4d7fc4" stroke-width="6" stroke-linecap="round" stroke-linejoin="round"/><path d="M249 386.5 L191 386.5 L174 386.5 L145 415.5 L145 516.6" fill="none" stroke="#4d7fc4" stroke-width="6" stroke-linecap="round" stroke-linejoin="round"/><path d="M372.8 368.3 L748.5 368.3 L759.5 357.6 L798.9 357.6" fill="none" stroke="#4d7fc4" stroke-width="11" stroke-linecap="round" stroke-linejoin="round"/><path d="M372.8 391.1 L760.8 391.1 L785 415.4 L856.1 415.4" fill="none" stroke="#4d7fc4" stroke-width="11" stroke-linecap="round" stroke-linejoin="round"/><path d="M639.2 391.1 L639.2 632 L625 646.3 L595.9 646.3" fill="none" stroke="#4d7fc4" stroke-width="11.5" stroke-linecap="round" stroke-linejoin="round"/><path d="M798.9 357.6 L827.2 357.6 L827.2 386.5 L798.9 386.5 L798.9 357.6" fill="none" stroke="#4d7fc4" stroke-width="10" stroke-linecap="round" stroke-linejoin="round"/><path d="M856.1 386.5 L884.9 386.5 L884.9 415.4 L856.1 415.4 L856.1 386.5" fill="none" stroke="#4d7fc4" stroke-width="10" stroke-linecap="round" stroke-linejoin="round"/><path d="M144.5 516.6 L519.8 516.6 L562.6 559.4 L595.9 559.4" fill="none" stroke="#4d7fc4" stroke-width="6" stroke-linecap="round" stroke-linejoin="round"/><path d="M144.5 539.4 L519.8 539.4 L568.9 588.5 L595.9 588.5" fill="none" stroke="#4d7fc4" stroke-width="6" stroke-linecap="round" stroke-linejoin="round"/><path d="M144.5 562.2 L512.6 562.2 L567.8 617.4 L595.9 617.4" fill="none" stroke="#4d7fc4" stroke-width="11" stroke-linecap="round" stroke-linejoin="round"/><path d="M144.5 585 L498.2 585 L559.5 646.3 L595.9 646.3" fill="none" stroke="#4d7fc4" stroke-width="11" stroke-linecap="round" stroke-linejoin="round"/><path d="M769.8 530.3 L783 530.3 L855 458.5 L884.9 458.5" fill="none" stroke="#4d7fc4" stroke-width="11.5" stroke-linecap="round" stroke-linejoin="round"/><path d="M769.8 559.4 L800.1 559.4 L872 487.5 L884.9 487.5" fill="none" stroke="#4d7fc4" stroke-width="6" stroke-linecap="round" stroke-linejoin="round"/><path d="M769.8 588.5 L800.1 588.5 L872 516.6 L884.9 516.6" fill="none" stroke="#4d7fc4" stroke-width="6" stroke-linecap="round" stroke-linejoin="round"/><path d="M769.8 617.4 L800.1 617.4 L872 545.5 L884.9 545.5" fill="none" stroke="#4d7fc4" stroke-width="6" stroke-linecap="round" stroke-linejoin="round"/><path d="M769.8 646.3 L800.1 646.3 L872 574.3 L884.9 574.3" fill="none" stroke="#4d7fc4" stroke-width="6" stroke-linecap="round" stroke-linejoin="round"/><circle cx="191" cy="328.7" r="10.5" fill="#94f0ea"/><circle cx="191" cy="357.6" r="10.5" fill="#94f0ea"/><circle cx="191" cy="386.5" r="10.5" fill="#94f0ea"/><circle cx="191" cy="415.4" r="10.5" fill="#94f0ea"/><circle cx="191" cy="444.3" r="10.5" fill="#94f0ea"/><circle cx="249" cy="328.7" r="10.5" fill="#94f0ea"/><circle cx="249" cy="357.6" r="10.5" fill="#94f0ea"/><circle cx="249" cy="386.5" r="10.5" fill="#94f0ea"/><circle cx="249" cy="415.4" r="10.5" fill="#94f0ea"/><circle cx="249" cy="444.3" r="10.5" fill="#94f0ea"/><circle cx="372.8" cy="322.6" r="9" fill="#94f0ea"/><circle cx="372.8" cy="345.4" r="9" fill="#94f0ea"/><circle cx="372.8" cy="368.3" r="9" fill="#94f0ea"/><circle cx="372.8" cy="391.1" r="9" fill="#94f0ea"/><circle cx="486.9" cy="322.6" r="9" fill="#94f0ea"/><circle cx="486.9" cy="345.4" r="9" fill="#94f0ea"/><circle cx="486.9" cy="368.3" r="9" fill="#94f0ea"/><circle cx="486.9" cy="391.1" r="9" fill="#94f0ea"/><circle cx="600.8" cy="322.6" r="9" fill="#94f0ea"/><circle cx="600.8" cy="345.4" r="9" fill="#94f0ea"/><circle cx="600.8" cy="368.3" r="9" fill="#94f0ea"/><circle cx="600.8" cy="391.1" r="9" fill="#94f0ea"/><circle cx="714.5" cy="322.6" r="9" fill="#94f0ea"/><circle cx="714.5" cy="345.4" r="9" fill="#94f0ea"/><circle cx="714.5" cy="368.3" r="9" fill="#94f0ea"/><circle cx="714.5" cy="391.1" r="9" fill="#94f0ea"/><circle cx="798.9" cy="357.6" r="10.8" fill="#94f0ea"/><circle cx="827.2" cy="357.6" r="10.8" fill="#94f0ea"/><circle cx="798.9" cy="386.5" r="10.8" fill="#94f0ea"/><circle cx="827.2" cy="386.5" r="10.8" fill="#94f0ea"/><circle cx="856.1" cy="386.5" r="10.8" fill="#94f0ea"/><circle cx="884.9" cy="386.5" r="10.8" fill="#94f0ea"/><circle cx="856.1" cy="415.4" r="10.8" fill="#94f0ea"/><circle cx="884.9" cy="415.4" r="10.8" fill="#94f0ea"/><circle cx="884.9" cy="458.5" r="10.5" fill="#94f0ea"/><circle cx="884.9" cy="487.5" r="10.5" fill="#94f0ea"/><circle cx="884.9" cy="516.6" r="10.5" fill="#94f0ea"/><circle cx="884.9" cy="545.5" r="10.5" fill="#94f0ea"/><circle cx="884.9" cy="574.3" r="10.5" fill="#94f0ea"/><circle cx="144.5" cy="516.6" r="9" fill="#94f0ea"/><circle cx="144.5" cy="539.4" r="9" fill="#94f0ea"/><circle cx="144.5" cy="562.2" r="9" fill="#94f0ea"/><circle cx="144.5" cy="585.0" r="9" fill="#94f0ea"/><circle cx="258.8" cy="516.6" r="9" fill="#94f0ea"/><circle cx="258.8" cy="539.4" r="9" fill="#94f0ea"/><circle cx="258.8" cy="562.2" r="9" fill="#94f0ea"/><circle cx="258.8" cy="585.0" r="9" fill="#94f0ea"/><circle cx="372.8" cy="516.6" r="9" fill="#94f0ea"/><circle cx="372.8" cy="539.4" r="9" fill="#94f0ea"/><circle cx="372.8" cy="562.2" r="9" fill="#94f0ea"/><circle cx="372.8" cy="585.0" r="9" fill="#94f0ea"/><circle cx="486.9" cy="516.6" r="9" fill="#94f0ea"/><circle cx="486.9" cy="539.4" r="9" fill="#94f0ea"/><circle cx="486.9" cy="562.2" r="9" fill="#94f0ea"/><circle cx="486.9" cy="585.0" r="9" fill="#94f0ea"/><circle cx="595.9" cy="559.4" r="10.5" fill="#94f0ea"/><circle cx="595.9" cy="588.5" r="10.5" fill="#94f0ea"/><circle cx="595.9" cy="617.4" r="10.5" fill="#94f0ea"/><circle cx="595.9" cy="646.3" r="10.5" fill="#94f0ea"/><circle cx="769.8" cy="530.3" r="10.5" fill="#94f0ea"/><circle cx="769.8" cy="559.4" r="10.5" fill="#94f0ea"/><circle cx="769.8" cy="588.5" r="10.5" fill="#94f0ea"/><circle cx="769.8" cy="617.4" r="10.5" fill="#94f0ea"/><circle cx="769.8" cy="646.3" r="10.5" fill="#94f0ea"/><circle cx="191" cy="328.7" r="5" fill="#8ad278"/><circle cx="191" cy="357.6" r="5" fill="#8ad278"/><circle cx="191" cy="386.5" r="5" fill="#8ad278"/><circle cx="191" cy="415.4" r="5" fill="#8ad278"/><circle cx="191" cy="444.3" r="5" fill="#8ad278"/><circle cx="249" cy="328.7" r="5" fill="#8ad278"/><circle cx="249" cy="357.6" r="5" fill="#8ad278"/><circle cx="249" cy="386.5" r="5" fill="#8ad278"/><circle cx="249" cy="415.4" r="5" fill="#8ad278"/><circle cx="249" cy="444.3" r="5" fill="#8ad278"/><circle cx="372.8" cy="322.6" r="5" fill="#8ad278"/><circle cx="372.8" cy="345.4" r="5" fill="#8ad278"/><circle cx="372.8" cy="368.3" r="5" fill="#8ad278"/><circle cx="372.8" cy="391.1" r="5" fill="#8ad278"/><circle cx="486.9" cy="322.6" r="5" fill="#8ad278"/><circle cx="486.9" cy="345.4" r="5" fill="#8ad278"/><circle cx="486.9" cy="368.3" r="5" fill="#8ad278"/><circle cx="486.9" cy="391.1" r="5" fill="#8ad278"/><circle cx="600.8" cy="322.6" r="5" fill="#8ad278"/><circle cx="600.8" cy="345.4" r="5" fill="#8ad278"/><circle cx="600.8" cy="368.3" r="5" fill="#8ad278"/><circle cx="600.8" cy="391.1" r="5" fill="#8ad278"/><circle cx="714.5" cy="322.6" r="5" fill="#8ad278"/><circle cx="714.5" cy="345.4" r="5" fill="#8ad278"/><circle cx="714.5" cy="368.3" r="5" fill="#8ad278"/><circle cx="714.5" cy="391.1" r="5" fill="#8ad278"/><circle cx="798.9" cy="357.6" r="5" fill="#8ad278"/><circle cx="827.2" cy="357.6" r="5" fill="#8ad278"/><circle cx="798.9" cy="386.5" r="5" fill="#8ad278"/><circle cx="827.2" cy="386.5" r="5" fill="#8ad278"/><circle cx="856.1" cy="386.5" r="5" fill="#8ad278"/><circle cx="884.9" cy="386.5" r="5" fill="#8ad278"/><circle cx="856.1" cy="415.4" r="5" fill="#8ad278"/><circle cx="884.9" cy="415.4" r="5" fill="#8ad278"/><circle cx="884.9" cy="458.5" r="5" fill="#8ad278"/><circle cx="884.9" cy="487.5" r="5" fill="#8ad278"/><circle cx="884.9" cy="516.6" r="5" fill="#8ad278"/><circle cx="884.9" cy="545.5" r="5" fill="#8ad278"/><circle cx="884.9" cy="574.3" r="5" fill="#8ad278"/><circle cx="144.5" cy="516.6" r="5" fill="#8ad278"/><circle cx="144.5" cy="539.4" r="5" fill="#8ad278"/><circle cx="144.5" cy="562.2" r="5" fill="#8ad278"/><circle cx="144.5" cy="585.0" r="5" fill="#8ad278"/><circle cx="258.8" cy="516.6" r="5" fill="#8ad278"/><circle cx="258.8" cy="539.4" r="5" fill="#8ad278"/><circle cx="258.8" cy="562.2" r="5" fill="#8ad278"/><circle cx="258.8" cy="585.0" r="5" fill="#8ad278"/><circle cx="372.8" cy="516.6" r="5" fill="#8ad278"/><circle cx="372.8" cy="539.4" r="5" fill="#8ad278"/><circle cx="372.8" cy="562.2" r="5" fill="#8ad278"/><circle cx="372.8" cy="585.0" r="5" fill="#8ad278"/><circle cx="486.9" cy="516.6" r="5" fill="#8ad278"/><circle cx="486.9" cy="539.4" r="5" fill="#8ad278"/><circle cx="486.9" cy="562.2" r="5" fill="#8ad278"/><circle cx="486.9" cy="585.0" r="5" fill="#8ad278"/><circle cx="595.9" cy="559.4" r="5" fill="#8ad278"/><circle cx="595.9" cy="588.5" r="5" fill="#8ad278"/><circle cx="595.9" cy="617.4" r="5" fill="#8ad278"/><circle cx="595.9" cy="646.3" r="5" fill="#8ad278"/><circle cx="769.8" cy="530.3" r="5" fill="#8ad278"/><circle cx="769.8" cy="559.4" r="5" fill="#8ad278"/><circle cx="769.8" cy="588.5" r="5" fill="#8ad278"/><circle cx="769.8" cy="617.4" r="5" fill="#8ad278"/><circle cx="769.8" cy="646.3" r="5" fill="#8ad278"/><circle cx="145.2" cy="340" r="27.8" fill="none" stroke="#ff26e2" stroke-width="1.1"/><circle cx="145.2" cy="340" r="25.2" fill="none" stroke="#5a8ee0" stroke-width="2"/><circle cx="145.2" cy="340" r="14.6" fill="none" stroke="#10d0d0" stroke-width="1"/><circle cx="145.2" cy="340" r="13.2" fill="#10dcdc"/><circle cx="874.1" cy="339" r="27.8" fill="none" stroke="#ff26e2" stroke-width="1.1"/><circle cx="874.1" cy="339" r="25.2" fill="none" stroke="#5a8ee0" stroke-width="2"/><circle cx="874.1" cy="339" r="14.6" fill="none" stroke="#10d0d0" stroke-width="1"/><circle cx="874.1" cy="339" r="13.2" fill="#10dcdc"/><circle cx="144.5" cy="631" r="27.8" fill="none" stroke="#ff26e2" stroke-width="1.1"/><circle cx="144.5" cy="631" r="25.2" fill="none" stroke="#5a8ee0" stroke-width="2"/><circle cx="144.5" cy="631" r="14.6" fill="none" stroke="#10d0d0" stroke-width="1"/><circle cx="144.5" cy="631" r="13.2" fill="#10dcdc"/><circle cx="874.2" cy="630" r="27.8" fill="none" stroke="#ff26e2" stroke-width="1.1"/><circle cx="874.2" cy="630" r="25.2" fill="none" stroke="#5a8ee0" stroke-width="2"/><circle cx="874.2" cy="630" r="14.6" fill="none" stroke="#10d0d0" stroke-width="1"/><circle cx="874.2" cy="630" r="13.2" fill="#10dcdc"/></g></svg>
<div class="r" style="left:4px;top:131px;width:35px;height:725px;background:#f0efee;"></div>
<div class="r" style="left:38px;top:131px;width:1px;height:725px;background:#e2dfdc;"></div>
<div class="r" style="left:4px;top:131px;width:962px;height:3px;background:#f3f2f1;"></div>
<svg class="a" width="1215" height="921"><rect x="6.5" y="138.5" width="29" height="29" fill="#c6dbf3" stroke="#3584e4" stroke-width="1.2"/><circle cx="10.8" cy="143.2" r="1.5" fill="#545454"/><circle cx="10.8" cy="150.0" r="1.5" fill="#545454"/><circle cx="10.8" cy="156.8" r="1.5" fill="#545454"/><circle cx="10.8" cy="163.6" r="1.5" fill="#545454"/><circle cx="17.8" cy="143.2" r="1.5" fill="#545454"/><circle cx="17.8" cy="150.0" r="1.5" fill="#545454"/><circle cx="17.8" cy="156.8" r="1.5" fill="#545454"/><circle cx="17.8" cy="163.6" r="1.5" fill="#545454"/><circle cx="24.8" cy="143.2" r="1.5" fill="#545454"/><circle cx="24.8" cy="150.0" r="1.5" fill="#545454"/><circle cx="24.8" cy="156.8" r="1.5" fill="#545454"/><circle cx="24.8" cy="163.6" r="1.5" fill="#545454"/><circle cx="31.8" cy="143.2" r="1.5" fill="#545454"/><circle cx="31.8" cy="150.0" r="1.5" fill="#545454"/><circle cx="31.8" cy="156.8" r="1.5" fill="#545454"/><circle cx="31.8" cy="163.6" r="1.5" fill="#545454"/><g transform="translate(10,174)"><path d="M1.5 22V1M0 4l1.5-3 1.5 3M1.5 21.5h20M18.5 20l3 1.5-3 1.5M1.5 21.5l15-16" fill="none" stroke="#545454" stroke-width="1.2"/><circle cx="17.5" cy="4.5" r="2.2" fill="#c8203a"/><text x="4.5" y="11" font-family="Liberation Sans" font-size="11" fill="#545454">r</text><text x="12.5" y="19" font-family="Liberation Sans" font-style="italic" font-size="11" fill="#545454">θ</text></g><text x="21" y="216" font-family="Liberation Sans" font-size="12" fill="#545454" text-anchor="middle">in</text><path d="M11.5 220.5h19M14 218l-2.5 2.5 2.5 2.5M28 218l2.5 2.5-2.5 2.5" fill="none" stroke="#545454" stroke-width="1.8"/><text x="21" y="246.5" font-family="Liberation Sans" font-size="12" fill="#545454" text-anchor="middle">mil</text><path d="M11.5 251.0h19M14 248.5l-2.5 2.5 2.5 2.5M28 248.5l2.5 2.5-2.5 2.5" fill="none" stroke="#545454" stroke-width="1.8"/><rect x="6.5" y="266.5" width="29" height="29" fill="#c6dbf3" stroke="#3584e4" stroke-width="1.2"/><text x="21" y="280" font-family="Liberation Sans" font-size="13" fill="#545454" text-anchor="middle">mm</text><path d="M11.5 284.5h19M14 282l-2.5 2.5 2.5 2.5M28 282l2.5 2.5-2.5 2.5" fill="none" stroke="#545454" stroke-width="1.8"/><path d="M21 304v19M11 313.5h19" stroke="#b8b8b8" stroke-width="1"/><path d="M16 313.5h10M21 308.5v10" stroke="#1f83c9" stroke-width="3"/><path d="M21 313l7 6-3 .5 2 3.5-1.5 1-2-3.5-2.5 2z" fill="#545454"/><rect x="10" y="333" width="23" height="1" fill="#c8c5c2"/><path d="M12 340v25M9 362h23M12 362l19-18M12 353.5h6v8.5" fill="none" stroke="#545454" stroke-width="2"/><rect x="10" y="374" width="23" height="1" fill="#c8c5c2"/><rect x="6.5" y="380.5" width="29" height="29" fill="#c6dbf3" stroke="#3584e4" stroke-width="1.2"/><path d="M13 387L27 399M13 399L27 387" stroke="#545454" stroke-width="1.5"/><g fill="#fff" stroke="#545454" stroke-width="1.2"><circle cx="13" cy="387" r="2.8"/><circle cx="26" cy="389" r="2.8"/><circle cx="14" cy="401" r="2.8"/><circle cx="27" cy="400" r="2.8"/></g><path d="M29 390h3" stroke="#545454" stroke-width="1.2"/><path d="M9 441L32 415" stroke="#545454" stroke-width="1.5"/><path d="M11 428L22 417M19 438q8 0 9-8" fill="none" stroke="#545454" stroke-width="1.3"/><g fill="#fff" stroke="#545454" stroke-width="1.2"><circle cx="11" cy="428" r="2.4"/><circle cx="23" cy="416" r="2.4"/><circle cx="18" cy="439" r="2.4"/><circle cx="29" cy="429" r="2.4"/></g><rect x="10" y="447" width="23" height="1" fill="#c8c5c2"/><path d="M9.3 457.4L17 465M9.3 468.7l5.3 6h9.1l5 4.6" fill="none" stroke="#545454" stroke-width="2"/><path d="M14.2 456.3l5.3 4.3h5.7l7.4 8.1M22 467.6h3.5l7.1 8.8" fill="none" stroke="#c8203a" stroke-width="2"/><circle cx="19" cy="468" r="2.6" fill="#fff" stroke="#f29100" stroke-width="2"/><path d="M9.3 492h9.5l4.9 4.5v15M22.7 488.4l6 5.3v17.7" fill="none" stroke="#bdbdbd" stroke-width="2.2"/><path d="M15.3 500v11.4" stroke="#e3a0b2" stroke-width="2.8"/><path d="M18 499.4h15" stroke="#a3d0ee" stroke-width="3"/><circle cx="15.3" cy="499.4" r="2.6" fill="#fff" stroke="#f6c98a" stroke-width="2"/><rect x="10" y="520" width="23" height="1" fill="#c8c5c2"/><rect x="6.5" y="526.5" width="29" height="29" fill="#c6dbf3" stroke="#3584e4" stroke-width="1.2"/><path d="M10 551v-10h7v-9h15v19z" fill="#1e88d0"/><circle cx="25" cy="539.5" r="3" fill="#fff"/><path d="M25 539.5h6" stroke="#545454" stroke-width="1.5"/><path d="M11 580v-8h7v-8h14v16z" fill="none" stroke="#1f83c9" stroke-width="1.5" stroke-dasharray="2.5 1.6"/><path d="M24 571.5h5" stroke="#545454" stroke-width="1.5"/><circle cx="24" cy="571.5" r="1.7" fill="#545454"/><rect x="10" y="593" width="23" height="1" fill="#c8c5c2"/><path d="M11 604h20v19h-20v-6a2.5 2.5 0 0 0 0-5z" fill="none" stroke="#545454" stroke-width="1.3"/><g fill="#1f83c9"><rect x="13" y="601" width="4" height="5"/><rect x="19" y="601" width="4" height="5"/><rect x="25" y="601" width="4" height="5"/></g><g fill="#fff" stroke="#1f83c9" stroke-width="1.2"><rect x="13" y="620" width="3.5" height="4.5"/><rect x="19" y="620" width="3.5" height="4.5"/><rect x="25" y="620" width="3.5" height="4.5"/></g><path d="M10 627L32 601" stroke="#545454" stroke-width="1.3"/><circle cx="21" cy="645.6" r="7.4" fill="none" stroke="#f29100" stroke-width="4.6"/><circle cx="23.5" cy="644.5" r="6.6" fill="#f0efee" stroke="#c8c8c8" stroke-width="1.2"/><circle cx="23.5" cy="644.5" r="2.8" fill="none" stroke="#c8c8c8" stroke-width="1.2"/><path d="M9.4 657L32.6 634" stroke="#545454" stroke-width="1.3"/><path d="M9.4 677.8h23" stroke="#1f83c9" stroke-width="3"/><path d="M21 675h11.6" stroke="#1f83c9" stroke-width="1"/><path d="M19.5 666v23.4M22.5 675v14.4" stroke="#c8203a" stroke-width="1.5"/><path d="M21 667v8" stroke="#c8203a" stroke-width="3"/><path d="M9.4 689.4L32.6 666" stroke="#545454" stroke-width="1.3"/><rect x="10" y="697" width="23" height="1" fill="#c8c5c2"/><rect x="6.5" y="704.5" width="29" height="28" fill="#c6dbf3" stroke="#3584e4" stroke-width="1.2"/><path d="M21 716l10 6-10 6-10-6z" fill="#f29100"/><path d="M21 712l10 6-10 6-10-6z" fill="#2b2b2b" opacity="0.8"/><path d="M21 706l10 6.5-10 6.5-10-6.5z" fill="#1e88d0"/><path d="M11 760l9-8.5" stroke="#545454" stroke-width="1.6"/><path d="M22 749.5l9-8.5" stroke="#545454" stroke-width="3.6" stroke-linecap="round"/><path d="M14.5 744.5l15.5 15" stroke="#1f83c9" stroke-width="3" stroke-linecap="round"/><path d="M14.5 740.9A3.6 3.6 0 1 1 10.9 744.5" fill="none" stroke="#1f83c9" stroke-width="2.8"/></svg>
<div class="r" style="left:966px;top:131px;width:35px;height:725px;background:#f0efee;"></div>
<div class="r" style="left:1001px;top:131px;width:5px;height:725px;background:#dcdad7;"></div>
<svg class="a" width="1215" height="921"><rect x="969.5" y="138.5" width="29" height="29" fill="#c6dbf3" stroke="#3584e4" stroke-width="1.2"/><path d="M978 144l13 11-6 .8 3.5 6.5-3 1.6-3.5-6.5-4 4z" fill="#545454"/><path d="M973 173l22 22M995 173l-22 22" stroke="#545454" stroke-width="1.4"/><circle cx="984" cy="184" r="3" fill="#fff" stroke="#545454" stroke-width="1.2"/><rect x="974" y="205" width="21" height="1" fill="#c8c5c2"/><path d="M972.5 216.7h23.2v18h-23.2v-6.5a2.5 2.5 0 0 0 0-5z" fill="none" stroke="#545454" stroke-width="1.3"/><g fill="#1f83c9"><rect x="974.5" y="213.5" width="5.5" height="7.5"/><rect x="981.5" y="213.5" width="5.5" height="7.5"/><rect x="988.8" y="213.5" width="5.5" height="7.5"/><rect x="974.5" y="230.5" width="5.5" height="7.5"/><rect x="981.5" y="230.5" width="5.5" height="7.5"/><rect x="988.8" y="230.5" width="5.5" height="7.5"/></g><path d="M974 269l6-11h9l6-11" fill="none" stroke="#1f83c9" stroke-width="2.2"/><path d="M999 264v7h-7z" fill="#2b2b2b"/><path d="M972.5 291.5q2-2.5 3.5 0v-3a2.3 2.3 0 0 1 4.6 0v4.5a2.3 2.3 0 0 0 4.6 0v-4.5a2.3 2.3 0 0 1 4.6 0v3q1.5 2.5 4 0" fill="none" stroke="#1f83c9" stroke-width="2"/><path d="M999 296v7h-7z" fill="#2b2b2b"/><circle cx="984" cy="322" r="5.2" fill="none" stroke="#f29100" stroke-width="4.2"/><path d="M974.5 364v-10h8v-10h12.5v20z" fill="#1e88d0"/><circle cx="988.5" cy="353" r="3" fill="#fff"/><path d="M988.5 353h6" stroke="#545454" stroke-width="1.5"/><path d="M975 393v-8h7v-9h13v17z" fill="#fff" stroke="#545454" stroke-width="1.5"/><path d="M977 391l5-5M978 393l16-16M983 393l12-12M988 393l7-7" stroke="#545454" stroke-width="1.8"/><rect x="974" y="406" width="21" height="1" fill="#c8c5c2"/><path d="M975 436l18-18" stroke="#545454" stroke-width="1.8"/><path d="M975 469a18 18 0 0 1 18-18" fill="none" stroke="#545454" stroke-width="1.8"/><rect x="975.5" y="482.5" width="17" height="17" fill="#c2c2c2" stroke="#545454" stroke-width="1.6"/><circle cx="984" cy="523" r="8.5" fill="#c2c2c2" stroke="#545454" stroke-width="1.6"/><path d="M975 546l18 5-6 6 5 7-17-6z" fill="#c2c2c2" stroke="#545454" stroke-width="1.6" stroke-linejoin="round"/><rect x="975" y="578" width="18" height="18" rx="2" fill="#3a3a3a"/><path d="M977 593l5-6 3 3 3-3 4 6z" fill="#fff"/><circle cx="988" cy="582.5" r="1.8" fill="#fff"/><path d="M976 611h16M984 611v17" stroke="#545454" stroke-width="3.2"/><rect x="976" y="643" width="17" height="16" rx="1" fill="none" stroke="#545454" stroke-width="1.5"/><path d="M979 647.5h11M979 651h11M979 654.5h11" stroke="#545454" stroke-width="1.3"/><path d="M977 690l14-12" stroke="#545454" stroke-width="1.1" stroke-dasharray="2 1"/><circle cx="976" cy="690" r="2.4" fill="#1f83c9"/><circle cx="992" cy="677" r="2.4" fill="#1f83c9"/><path d="M999 688v7h-7z" fill="#2b2b2b"/><path d="M976 705l11 9-4.5 1 3 5-2.5 1.5-3-5-4 3z" fill="#545454"/><circle cx="989" cy="719" r="6" fill="#c8203a"/><path d="M986.5 716.5l5 5M991.5 716.5l-5 5" stroke="#fff" stroke-width="1.6"/><rect x="974" y="737" width="21" height="1" fill="#c8c5c2"/><path d="M975 745v20h20" fill="none" stroke="#545454" stroke-width="1.5"/><path d="M978 756h12M984 750v12" stroke="#2b2b2b" stroke-width="2.5"/><circle cx="984" cy="756" r="3.5" fill="#2b2b2b"/><path d="M999 759v7h-7z" fill="#2b2b2b"/><path d="M973 792l16-16 5 5-16 16z" fill="none" stroke="#545454" stroke-width="1.8"/><path d="M979 786l2 2M982 783l2 2M985 780l2 2" stroke="#545454" stroke-width="1.2"/></svg>
<div class="r" style="left:1006px;top:131px;width:207px;height:725px;background:#f2f1f0;"></div>
<div class="r" style="left:1006px;top:133px;width:207px;height:16.5px;background:#bebebe;"></div>
<div class="t" style="left:1009px;top:133.5px;font-size:14px;color:#3a3a3a;">外観</div>
<div class="r" style="left:1006px;top:149.5px;width:207px;height:5.5px;background:#efeeed;"></div>
<div class="r" style="left:1006px;top:155px;width:207px;height:37.5px;background:#e4e1de;"></div>
<div class="r" style="left:1006px;top:155px;width:207px;height:1px;background:#d3cfcb;"></div>
<div class="r" style="left:1006px;top:155px;width:1px;height:37px;background:#d3cfcb;"></div>
<div class="r" style="left:1006px;top:192px;width:207px;height:1px;background:#d6d2ce;"></div>
<div class="r" style="left:1031px;top:189px;width:157px;height:3.5px;background:#3584e4;"></div>
<div class="t" style="left:1105px;top:164px;font-size:18px;color:#2e3436;">レイヤー</div>
<svg class="a" width="1215" height="921"><path d="M1022 166v14l-7-7z" fill="#8e9598"/><path d="M1197 166v14l7-7z" fill="#2e3436"/></svg>
<div class="r" style="left:1006px;top:193px;width:207px;height:345px;overflow:hidden;">
<div class="r" style="left:24px;top:3.8px;width:21.5px;height:14px;background:#c83434;"></div>
<div class="t" style="left:73.5px;top:3.3px;font-size:16px;color:#2e3436;letter-spacing:0.5px;">F.Cu</div>
<div class="r" style="left:24px;top:23.8px;width:21.5px;height:14px;background:#4d7fc4;"></div>
<div class="t" style="left:73.5px;top:23.3px;font-size:16px;color:#2e3436;letter-spacing:0.5px;">B.Cu</div>
<div class="r" style="left:24px;top:43.8px;width:21.5px;height:14px;background:#840084;"></div>
<div class="t" style="left:73.5px;top:43.3px;font-size:16px;color:#2e3436;letter-spacing:0.5px;">F.Adhesive</div>
<div class="r" style="left:24px;top:63.8px;width:21.5px;height:14px;background:#000084;"></div>
<div class="t" style="left:73.5px;top:63.3px;font-size:16px;color:#2e3436;letter-spacing:0.5px;">B.Adhesive</div>
<div class="r" style="left:24px;top:83.8px;width:21.5px;height:14px;background:#a2918c;"></div>
<div class="t" style="left:73.5px;top:83.3px;font-size:16px;color:#2e3436;letter-spacing:0.5px;">F.Paste</div>
<div class="r" style="left:24px;top:103.8px;width:21.5px;height:14px;background:#00b4ac;"></div>
<div class="t" style="left:73.5px;top:103.3px;font-size:16px;color:#2e3436;letter-spacing:0.5px;">B.Paste</div>
<div class="r" style="left:24px;top:123.8px;width:21.5px;height:14px;background:#f2eda1;"></div>
<div class="t" style="left:73.5px;top:123.3px;font-size:16px;color:#2e3436;letter-spacing:0.5px;">F.Silkscreen</div>
<div class="r" style="left:24px;top:143.8px;width:21.5px;height:14px;background:#e8b2a7;"></div>
<div class="t" style="left:73.5px;top:143.3px;font-size:16px;color:#2e3436;letter-spacing:0.5px;">B.Silkscreen</div>
<div class="r" style="left:24px;top:163.8px;width:21.5px;height:14px;background:#5a3384;"></div>
<div class="t" style="left:73.5px;top:163.3px;font-size:16px;color:#2e3436;letter-spacing:0.5px;">F.Mask</div>
<div class="r" style="left:1px;top:180.6px;width:206px;height:20px;background:#ffffff;"></div>
<div class="r" style="left:24px;top:183.8px;width:21.5px;height:14px;background:#007373;"></div>
<div class="t" style="left:73.5px;top:183.3px;font-size:16px;color:#2e3436;letter-spacing:0.5px;">B.Mask</div>
<div class="r" style="left:24px;top:203.8px;width:21.5px;height:14px;background:#c2c2c2;"></div>
<div class="t" style="left:73.5px;top:203.3px;font-size:16px;color:#2e3436;letter-spacing:0.5px;">User.Drawings</div>
<div class="r" style="left:24px;top:223.8px;width:21.5px;height:14px;background:#5994dc;"></div>
<div class="t" style="left:73.5px;top:223.3px;font-size:16px;color:#2e3436;letter-spacing:0.5px;">User.Comments</div>
<div class="r" style="left:24px;top:243.8px;width:21.5px;height:14px;background:#b4dbd2;"></div>
<div class="t" style="left:73.5px;top:243.3px;font-size:16px;color:#2e3436;letter-spacing:0.5px;">User.Eco1</div>
<div class="r" style="left:24px;top:263.8px;width:21.5px;height:14px;background:#d8c852;"></div>
<div class="t" style="left:73.5px;top:263.3px;font-size:16px;color:#2e3436;letter-spacing:0.5px;">User.Eco2</div>
<div class="r" style="left:24px;top:283.8px;width:21.5px;height:14px;background:#d0d2cd;"></div>
<div class="t" style="left:73.5px;top:283.3px;font-size:16px;color:#2e3436;letter-spacing:0.5px;">Edge.Cuts</div>
<div class="r" style="left:24px;top:303.8px;width:21.5px;height:14px;background:#ff26e2;"></div>
<div class="t" style="left:73.5px;top:303.3px;font-size:16px;color:#2e3436;letter-spacing:0.5px;">Margin</div>
<div class="r" style="left:24px;top:323.8px;width:21.5px;height:14px;background:#ff26e2;"></div>
<div class="t" style="left:73.5px;top:323.3px;font-size:16px;color:#2e3436;letter-spacing:0.5px;">F.Courtyard</div>
<div class="r" style="left:24px;top:343.8px;width:21.5px;height:14px;background:#26e9ff;"></div>
<div class="t" style="left:73.5px;top:343.3px;font-size:16px;color:#2e3436;letter-spacing:0.5px;">B.Courtyard</div>
<svg class="a" width="207" height="345"><g transform="translate(60,10.8)"><circle r="7.8" fill="#555753"/><path d="M-6 0q6-7 12 0q-6 7-12 0z" fill="#fff"/><circle r="2.3" fill="#555753"/><circle r="1.1" fill="#fff"/></g><g transform="translate(60,30.8)"><circle r="7.8" fill="#555753"/><path d="M-6 0q6-7 12 0q-6 7-12 0z" fill="#fff"/><circle r="2.3" fill="#555753"/><circle r="1.1" fill="#fff"/></g><g transform="translate(60,50.8)"><circle r="7.8" fill="#555753"/><path d="M-6 0q6-7 12 0q-6 7-12 0z" fill="#fff"/><circle r="2.3" fill="#555753"/><circle r="1.1" fill="#fff"/></g><g transform="translate(60,70.8)"><circle r="7.8" fill="#555753"/><path d="M-6 0q6-7 12 0q-6 7-12 0z" fill="#fff"/><circle r="2.3" fill="#555753"/><circle r="1.1" fill="#fff"/></g><g transform="translate(60,90.8)"><circle r="7.8" fill="#555753"/><path d="M-6 0q6-7 12 0q-6 7-12 0z" fill="#fff"/><circle r="2.3" fill="#555753"/><circle r="1.1" fill="#fff"/></g><g transform="translate(60,110.8)"><circle r="7.8" fill="#555753"/><path d="M-6 0q6-7 12 0q-6 7-12 0z" fill="#fff"/><circle r="2.3" fill="#555753"/><circle r="1.1" fill="#fff"/></g><g transform="translate(60,130.8)"><circle r="7.8" fill="#555753"/><path d="M-6 0q6-7 12 0q-6 7-12 0z" fill="#fff"/><circle r="2.3" fill="#555753"/><circle r="1.1" fill="#fff"/></g><g transform="translate(60,150.8)"><circle r="7.8" fill="#555753"/><path d="M-6 0q6-7 12 0q-6 7-12 0z" fill="#fff"/><circle r="2.3" fill="#555753"/><circle r="1.1" fill="#fff"/></g><g transform="translate(60,170.8)"><circle r="7.8" fill="#555753"/><path d="M-6 0q6-7 12 0q-6 7-12 0z" fill="#fff"/><circle r="2.3" fill="#555753"/><circle r="1.1" fill="#fff"/></g><g transform="translate(60,190.8)"><circle r="7.8" fill="#555753"/><path d="M-6 0q6-7 12 0q-6 7-12 0z" fill="#fff"/><circle r="2.3" fill="#555753"/><circle r="1.1" fill="#fff"/></g><g transform="translate(60,210.8)"><circle r="7.8" fill="#555753"/><path d="M-6 0q6-7 12 0q-6 7-12 0z" fill="#fff"/><circle r="2.3" fill="#555753"/><circle r="1.1" fill="#fff"/></g><g transform="translate(60,230.8)"><circle r="7.8" fill="#555753"/><path d="M-6 0q6-7 12 0q-6 7-12 0z" fill="#fff"/><circle r="2.3" fill="#555753"/><circle r="1.1" fill="#fff"/></g><g transform="translate(60,250.8)"><circle r="7.8" fill="#555753"/><path d="M-6 0q6-7 12 0q-6 7-12 0z" fill="#fff"/><circle r="2.3" fill="#555753"/><circle r="1.1" fill="#fff"/></g><g transform="translate(60,270.8)"><circle r="7.8" fill="#555753"/><path d="M-6 0q6-7 12 0q-6 7-12 0z" fill="#fff"/><circle r="2.3" fill="#555753"/><circle r="1.1" fill="#fff"/></g><g transform="translate(60,290.8)"><circle r="7.8" fill="#555753"/><path d="M-6 0q6-7 12 0q-6 7-12 0z" fill="#fff"/><circle r="2.3" fill="#555753"/><circle r="1.1" fill="#fff"/></g><g transform="translate(60,310.8)"><circle r="7.8" fill="#555753"/><path d="M-6 0q6-7 12 0q-6 7-12 0z" fill="#fff"/><circle r="2.3" fill="#555753"/><circle r="1.1" fill="#fff"/></g><g transform="translate(60,330.8)"><circle r="7.8" fill="#555753"/><path d="M-6 0q6-7 12 0q-6 7-12 0z" fill="#fff"/><circle r="2.3" fill="#555753"/><circle r="1.1" fill="#fff"/></g><g transform="translate(60,350.8)"><circle r="7.8" fill="#555753"/><path d="M-6 0q6-7 12 0q-6 7-12 0z" fill="#fff"/><circle r="2.3" fill="#555753"/><circle r="1.1" fill="#fff"/></g><path d="M10 183v15.5l8-7.75z" fill="#3b3bff"/></svg>
</div>
<div class="r" style="left:1007px;top:538px;width:206px;height:26px;background:#ffffff;"></div>
<svg class="a" width="1215" height="921"><path d="M1021 545v12l6-6z" fill="#111"/></svg>
<div class="t" style="left:1030px;top:542px;font-size:18px;color:#2e3436;">レイヤー表示オプション</div>
<div class="r" style="left:1006px;top:564px;width:207px;height:134px;background:#dedcda;"></div>
<div class="t" style="left:1014px;top:571px;font-size:17px;color:#2e3436;letter-spacing:0.35px;">プリセット (Ctrl+Tab):</div>
<div class="cb" style="left:1014px;top:593px;width:191px;height:32px;"></div>
<div class="t" style="left:1026px;top:600px;font-size:18px;color:#2e3436;">すべてのレイヤー</div>
<div class="t" style="left:1014px;top:629px;font-size:17px;color:#2e3436;">ビューポート</div>
<div class="cb" style="left:1014px;top:651px;width:191px;height:32px;"></div>
<div class="t" style="left:1026px;top:659px;font-size:17px;color:#2e3436;">---</div>
<svg class="a" width="1215" height="921"><g fill="#2e3436"><path d="M1181 606h12l-6 6z"/><path d="M1181 664h12l-6 6z"/></g></svg>
<div class="r" style="left:1006px;top:698px;width:207px;height:17px;background:#b9b9b9;"></div>
<div class="t" style="left:1010px;top:699.5px;font-size:13px;color:#3a3a3a;">フィルター選択</div>
<div class="r" style="left:1006px;top:715px;width:207px;height:141px;background:#dddbd9;"></div>
<div class="r" style="left:1006px;top:131px;width:1px;height:725px;background:#f7f6f5;"></div>
<div class="r" style="left:1006px;top:715px;width:207px;height:141px;overflow:hidden;">
<div class="t" style="left:30px;top:7.4px;font-size:17px;color:#2e3436;">すべてのアイテム</div>
<div class="t" style="left:199.4000000000001px;top:7.4px;font-size:17px;color:#2e3436;">ロックされたアイテム</div>
<div class="t" style="left:30px;top:29.2px;font-size:17px;color:#2e3436;">フットプリント</div>
<div class="t" style="left:199.4000000000001px;top:29.2px;font-size:17px;color:#2e3436;">テキスト</div>
<div class="t" style="left:30px;top:51.0px;font-size:17px;color:#2e3436;">配線</div>
<div class="t" style="left:199.4000000000001px;top:51.0px;font-size:17px;color:#2e3436;">ビア</div>
<div class="t" style="left:30px;top:72.8px;font-size:17px;color:#2e3436;">パッド</div>
<div class="t" style="left:199.4000000000001px;top:72.8px;font-size:17px;color:#2e3436;">図形</div>
<div class="t" style="left:30px;top:94.6px;font-size:17px;color:#2e3436;">ゾーン</div>
<div class="t" style="left:199.4000000000001px;top:94.6px;font-size:17px;color:#2e3436;">ルールエリア</div>
<div class="t" style="left:30px;top:116.4px;font-size:17px;color:#2e3436;">寸法</div>
<div class="t" style="left:199.4000000000001px;top:116.4px;font-size:17px;color:#2e3436;">その他</div>
<svg class="a" width="207" height="141"><g transform="translate(9,16.4)"><rect x="0" y="-8" width="16" height="16" rx="3" fill="#3584e4"/><path d="M3.5 0.5l3 3 6-6" fill="none" stroke="#fff" stroke-width="2.2"/></g><g transform="translate(178.4000000000001,16.4)"><rect x="0" y="-8" width="16" height="16" rx="3" fill="#3584e4"/><path d="M3.5 0.5l3 3 6-6" fill="none" stroke="#fff" stroke-width="2.2"/></g><g transform="translate(9,38.2)"><rect x="0" y="-8" width="16" height="16" rx="3" fill="#3584e4"/><path d="M3.5 0.5l3 3 6-6" fill="none" stroke="#fff" stroke-width="2.2"/></g><g transform="translate(178.4000000000001,38.2)"><rect x="0" y="-8" width="16" height="16" rx="3" fill="#3584e4"/><path d="M3.5 0.5l3 3 6-6" fill="none" stroke="#fff" stroke-width="2.2"/></g><g transform="translate(9,60.0)"><rect x="0" y="-8" width="16" height="16" rx="3" fill="#3584e4"/><path d="M3.5 0.5l3 3 6-6" fill="none" stroke="#fff" stroke-width="2.2"/></g><g transform="translate(178.4000000000001,60.0)"><rect x="0" y="-8" width="16" height="16" rx="3" fill="#3584e4"/><path d="M3.5 0.5l3 3 6-6" fill="none" stroke="#fff" stroke-width="2.2"/></g><g transform="translate(9,81.8)"><rect x="0" y="-8" width="16" height="16" rx="3" fill="#3584e4"/><path d="M3.5 0.5l3 3 6-6" fill="none" stroke="#fff" stroke-width="2.2"/></g><g transform="translate(178.4000000000001,81.8)"><rect x="0" y="-8" width="16" height="16" rx="3" fill="#3584e4"/><path d="M3.5 0.5l3 3 6-6" fill="none" stroke="#fff" stroke-width="2.2"/></g><g transform="translate(9,103.6)"><rect x="0" y="-8" width="16" height="16" rx="3" fill="#3584e4"/><path d="M3.5 0.5l3 3 6-6" fill="none" stroke="#fff" stroke-width="2.2"/></g><g transform="translate(178.4000000000001,103.6)"><rect x="0" y="-8" width="16" height="16" rx="3" fill="#3584e4"/><path d="M3.5 0.5l3 3 6-6" fill="none" stroke="#fff" stroke-width="2.2"/></g><g transform="translate(9,125.4)"><rect x="0" y="-8" width="16" height="16" rx="3" fill="#3584e4"/><path d="M3.5 0.5l3 3 6-6" fill="none" stroke="#fff" stroke-width="2.2"/></g><g transform="translate(178.4000000000001,125.4)"><rect x="0" y="-8" width="16" height="16" rx="3" fill="#3584e4"/><path d="M3.5 0.5l3 3 6-6" fill="none" stroke="#fff" stroke-width="2.2"/></g></svg>
</div>
<div class="r" style="left:4px;top:856px;width:1209px;height:38.5px;background:#f2f1f0;"></div>
<div class="r" style="left:4px;top:894.5px;width:1209px;height:24px;background:#f6f5f4;"></div>
<div class="t" style="left:20.6px;top:857px;font-size:18px;color:#2e3436;">パッド</div>
<div class="t" style="left:20.6px;top:876px;font-size:18px;color:#2e3436;">4</div>
<div class="t" style="left:121px;top:857px;font-size:18px;color:#2e3436;">ビア</div>
<div class="t" style="left:121px;top:876px;font-size:18px;color:#2e3436;">64</div>
<div class="t" style="left:187.6px;top:857px;font-size:18px;color:#2e3436;">配線セグメント</div>
<div class="t" style="left:187.6px;top:876px;font-size:18px;color:#2e3436;">129</div>
<div class="t" style="left:360.5px;top:857px;font-size:18px;color:#2e3436;">ネット</div>
<div class="t" style="left:360.5px;top:876px;font-size:18px;color:#2e3436;">0</div>
<div class="t" style="left:459.3px;top:857px;font-size:18px;color:#2e3436;">未配線</div>
<div class="t" style="left:459.3px;top:876px;font-size:18px;color:#2e3436;">0</div>
<div class="t" style="left:9.9px;top:898px;font-size:18px;color:#2e3436;letter-spacing:0.7px;">Z 3.18</div>
<div class="t" style="left:121px;top:898px;font-size:18px;color:#2e3436;letter-spacing:0.7px;">X 129.0000</div>
<div class="t" style="left:232px;top:898px;font-size:18px;color:#2e3436;letter-spacing:0.7px;">Y 102.0000</div>
<div class="t" style="left:380px;top:898px;font-size:18px;color:#2e3436;letter-spacing:0.7px;">dx 129.0000</div>
<div class="t" style="left:499px;top:898px;font-size:18px;color:#2e3436;letter-spacing:0.7px;">dy 102.0000</div>
<div class="t" style="left:617.7px;top:898px;font-size:18px;color:#2e3436;letter-spacing:0.7px;">dist 164.4536</div>
<div class="t" style="left:802.4px;top:898px;font-size:18px;color:#2e3436;letter-spacing:0.7px;">grid X 1.0000</div>
<div class="t" style="left:929px;top:898px;font-size:18px;color:#2e3436;letter-spacing:0.7px;">Y 1.0000</div>
<div class="t" style="left:1101px;top:898px;font-size:18px;color:#2e3436;letter-spacing:0.7px;">mm</div>
<svg class="a" width="1215" height="921"><path d="M1193 917l17-17M1199 917l11-11M1205 917l5-5" stroke="#b8b4b0" stroke-width="1.2"/></svg>
</body></html>
